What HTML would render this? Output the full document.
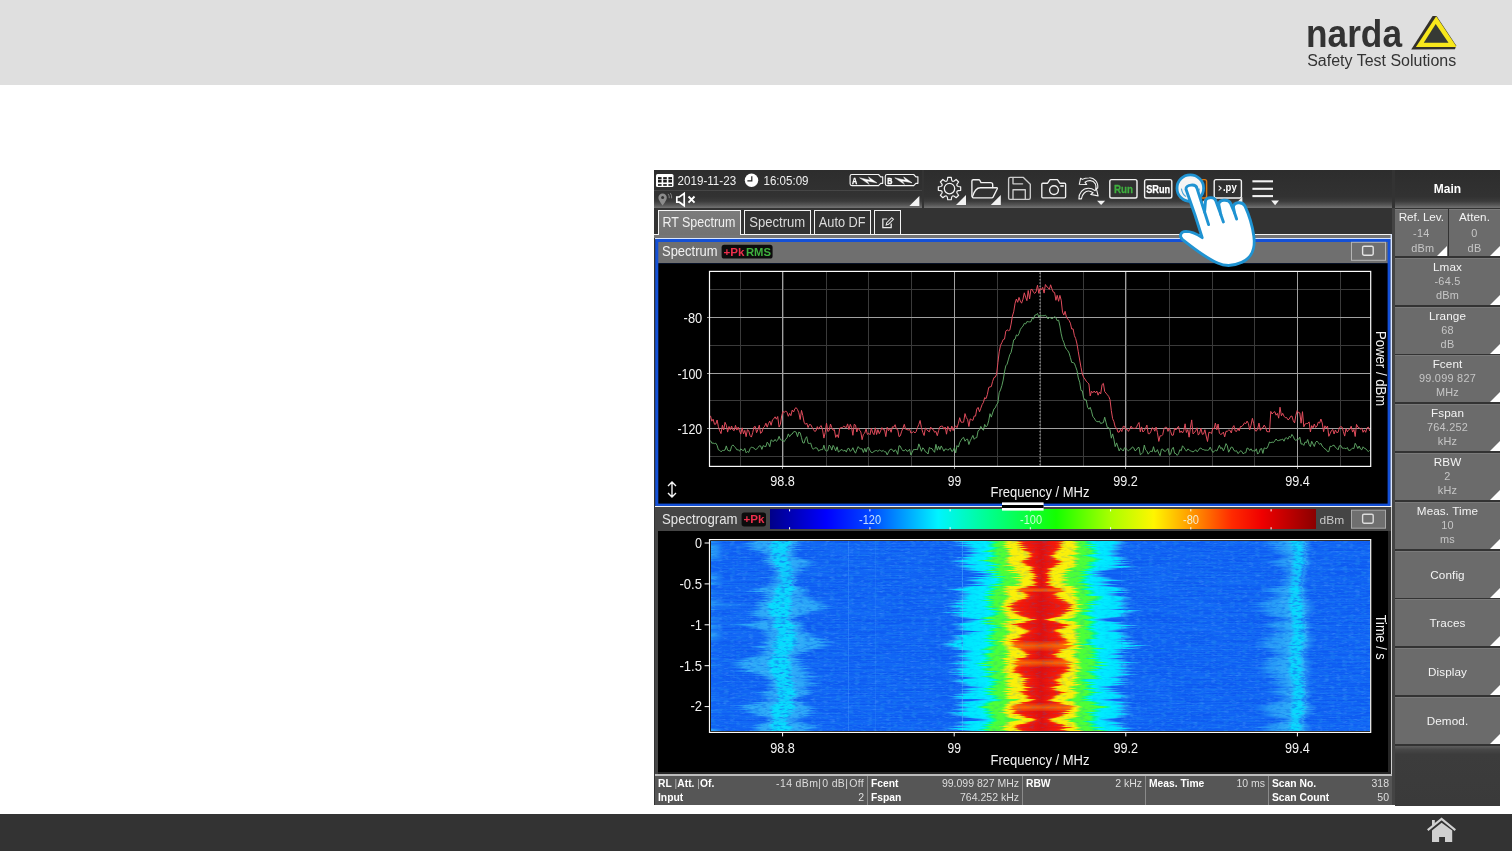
<!DOCTYPE html><html><head><meta charset="utf-8"><title>narda</title><style>
*{margin:0;padding:0;box-sizing:border-box}
html,body{width:1512px;height:851px;overflow:hidden;background:#fff}
body{position:relative;font-family:"Liberation Sans",sans-serif;color:#fff}
.abs{position:absolute}
svg,.t,.sb,.st,.sv{will-change:transform}
#hdr{left:0;top:0;width:1512px;height:85px;background:#dfdfdf}
#ftr{left:0;top:814px;width:1512px;height:37px;background:#333}
#scr{left:654.2px;top:170px;width:846.3px;height:635px;background:#333}
/* all children of #scr are positioned in page coords through this wrapper */
#w{left:-654.2px;top:-170px;width:1512px;height:851px}
.t{position:absolute;white-space:nowrap;line-height:1}
.tb{background:linear-gradient(#2d2d2d 0,#323232 70%,#3b3b3b 82%,#565656 92%,#747474 100%)}
.tab{position:absolute;top:210px;height:25px;border:1px solid #f4f4f4;border-bottom:none;font-size:14px;line-height:23px;color:#dcdcdc;text-align:center;letter-spacing:-0.3px}
.sb{position:absolute;left:1395px;width:105px;height:47px;background:#6b6b6b;border-top:1px solid #7a7a7a}
.sb .l{position:absolute;left:0;width:100%;text-align:center;font-size:11.7px;color:#f4f4f4;line-height:1;letter-spacing:0.1px}
.sb .v{position:absolute;left:0;width:100%;text-align:center;font-size:10.9px;color:#c6c6c6;line-height:1;letter-spacing:0.25px}
.tri{position:absolute;width:0;height:0;border-style:solid;border-color:transparent transparent #fff transparent}
.st{position:absolute;font-size:10.3px;line-height:1;white-space:nowrap}
.st b{color:#fff}
.sv{position:absolute;font-size:10.5px;line-height:1;white-space:nowrap;color:#ddd;text-align:right}
</style></head><body>
<div id="hdr" class="abs"></div>
<svg class="abs" style="left:1300px;top:10px" width="165" height="66" viewBox="1300 10 165 66" font-family="Liberation Sans, sans-serif"><text x="1306" y="46.7" font-size="38.8" font-weight="bold" fill="#333" textLength="96" lengthAdjust="spacingAndGlyphs">narda</text><path d="M1411.2 49.4L1432.6 15.9L1436.6 16L1456.2 45.6L1455 49.3Z" fill="#33302a"/><path d="M1415.9 47.1L1436.2 16.2L1456.4 46.4L1455.6 47.1Z" fill="#f7e71c"/><path d="M1423.8 42.8L1435.7 23.9L1448.5 42.8Z" fill="#363a35"/><text x="1307.2" y="66" font-size="15.6" fill="#333" textLength="149" lengthAdjust="spacingAndGlyphs">Safety Test Solutions</text></svg>
<div id="ftr" class="abs"></div>
<svg class="abs" style="left:1424px;top:815px" width="36" height="32" viewBox="1424 815 36 32"><path d="M1427.7 830.1L1441.6 818.9L1455.3 830.1" fill="none" stroke="#d2d2d2" stroke-width="2.1"/><path d="M1432 830.4L1441.6 822.7L1452.2 830.4V842H1445V837H1439.1V842H1432Z" fill="#d0d0d0"/><rect x="1432" y="820" width="2.8" height="5" fill="#d0d0d0"/></svg>
<div id="scr" class="abs"><div id="w" class="abs">
<div class="abs tb" style="left:654.2px;top:170px;width:267.6px;height:38px"></div>
<div class="abs" style="left:654px;top:190px;width:268px;height:1px;background:rgba(255,255,255,.10)"></div>
<div class="abs tb" style="left:924px;top:170px;width:468px;height:38px"></div>
<div class="abs tb" style="left:1395px;top:170px;width:105px;height:38px"></div>
<div class="t" style="left:1395px;width:105px;text-align:center;top:183px;font-size:12px;font-weight:bold;color:#fff">Main</div>
<div class="abs" style="left:1392.3px;top:208px;width:3px;height:597px;background:#444"></div>
<svg class="abs" style="left:654px;top:170px" width="738" height="38" viewBox="654 170 738 38" font-family="Liberation Sans, sans-serif" fill="none" stroke="#f2f2f2" stroke-width="1.3" stroke-linejoin="round" stroke-linecap="round"><rect x="656" y="174" width="17.5" height="12.9" rx="1.5" fill="#fff" stroke="none"/><rect x="658.0" y="177.1" width="3.6" height="2.0" fill="#1c1c1c" stroke="none"/><rect x="663.2" y="177.1" width="3.6" height="2.0" fill="#1c1c1c" stroke="none"/><rect x="668.4" y="177.1" width="3.6" height="2.0" fill="#1c1c1c" stroke="none"/><rect x="658.0" y="179.7" width="3.6" height="2.8" fill="#1c1c1c" stroke="none"/><rect x="663.2" y="179.7" width="3.6" height="2.8" fill="#1c1c1c" stroke="none"/><rect x="668.4" y="179.7" width="3.6" height="2.8" fill="#1c1c1c" stroke="none"/><rect x="658.0" y="184.1" width="3.6" height="1.7" fill="#1c1c1c" stroke="none"/><rect x="663.2" y="184.1" width="3.6" height="1.7" fill="#1c1c1c" stroke="none"/><rect x="668.4" y="184.1" width="3.6" height="1.7" fill="#1c1c1c" stroke="none"/><text x="677.6" y="185" font-size="12.3" fill="#f0f0f0" stroke="none" textLength="58.5" lengthAdjust="spacingAndGlyphs">2019-11-23</text><circle cx="751.5" cy="180.3" r="6.7" fill="#fff" stroke="none"/><path d="M751.8 176.3V180.9H747.4" stroke="#222" stroke-width="1.2" fill="none" stroke-linecap="butt" stroke-linejoin="miter"/><text x="763.5" y="185" font-size="12.3" fill="#f0f0f0" stroke="none" textLength="45" lengthAdjust="spacingAndGlyphs">16:05:09</text><path d="M662.6 205.6C659.8 201.6 658.4 199.6 658.4 197.8A4.2 4.2 0 0 1 666.8 197.8C666.8 199.6 665.4 201.6 662.6 205.6Z" fill="#8c8c8c" stroke="none"/><circle cx="662.6" cy="197.6" r="1.5" fill="#333" stroke="none"/><path d="M668.3 194.2q1.3 1.6 1 3.6M670.6 193.4q1.5 2 1.1 4.6" stroke="#8c8c8c" stroke-width="0.9"/><path d="M676.8 197H679.4L684.2 193.4V205.8L679.4 202.2H676.8Z" stroke="#fff" stroke-width="1.7" stroke-linejoin="miter" fill="none"/><path d="M688.5 196.5L694.5 202.7M694.5 196.5L688.5 202.7" stroke="#fff" stroke-width="1.9" stroke-linecap="butt"/><path d="M851.9 174.5H878.5L880.7 176.8H882.7V183.29999999999998H880.7L878.5 185.6H851.9Q850.1 185.6 850.1 183.79999999999998V176.3Q850.1 174.5 851.9 174.5Z" fill="none" stroke="#f4f4f4" stroke-width="1.15"/><text x="852.0" y="183.79999999999998" font-size="9.4" font-weight="bold" fill="#fff" stroke="#fff" stroke-width="0.35" textLength="5.2" lengthAdjust="spacingAndGlyphs">A</text><path d="M860.0 177.9L870.3 180.3L868.5 176.9L876.8 182.8L867.1 180.9L869.0 184.0Z" fill="#fff" stroke="#fff" stroke-width="0.5" stroke-linejoin="miter"/><path d="M887.0999999999999 174.5H913.6999999999999L915.9 176.8H917.9V183.29999999999998H915.9L913.6999999999999 185.6H887.0999999999999Q885.3 185.6 885.3 183.79999999999998V176.3Q885.3 174.5 887.0999999999999 174.5Z" fill="none" stroke="#f4f4f4" stroke-width="1.15"/><text x="887.1999999999999" y="183.79999999999998" font-size="9.4" font-weight="bold" fill="#fff" stroke="#fff" stroke-width="0.35" textLength="5.2" lengthAdjust="spacingAndGlyphs">B</text><path d="M895.2 177.9L905.5 180.3L903.7 176.9L912.0 182.8L902.3 180.9L904.2 184.0Z" fill="#fff" stroke="#fff" stroke-width="0.5" stroke-linejoin="miter"/><path d="M919.4 206L919.4 196L909.4 206Z" fill="#f2f2f2" stroke="none"/><path d="M947.40 179.85L947.73 177.44L951.27 177.44L951.60 179.85Q952.22 182.04 954.20 180.93L956.14 179.46L958.64 181.96L957.17 183.90Q956.06 185.88 958.25 186.50L960.66 186.83L960.66 190.37L958.25 190.70Q956.06 191.32 957.17 193.30L958.64 195.24L956.14 197.74L954.20 196.27Q952.22 195.16 951.60 197.35L951.27 199.76L947.73 199.76L947.40 197.35Q946.78 195.16 944.80 196.27L942.86 197.74L940.36 195.24L941.83 193.30Q942.94 191.32 940.75 190.70L938.34 190.37L938.34 186.83L940.75 186.50Q942.94 185.88 941.83 183.90L940.36 181.96L942.86 179.46L944.80 180.93Q946.78 182.04 947.40 179.85Z" stroke-width="1.2" stroke-linejoin="round"/><circle cx="949.5" cy="188.6" r="5.2" stroke-width="1.25"/><path d="M966 205L966 195L956 205Z" fill="#f2f2f2" stroke="none"/><path d="M971.9 196.2V181.1Q971.9 179.7 973.3 179.7H978.7Q979.5 179.7 979.9 180.5L981 182.6H990.6Q992.7 182.6 992.7 184.7V187.6" stroke-width="1.35"/><path d="M972.4 196.9C973.6 192.6 975.6 187.7 980.4 187.7H996.6Q997.7 187.7 997.3 188.7L993.2 196.9Q992.7 197.8 991.7 197.8H973.3Q972.2 197.8 972.4 196.9Z" stroke-width="1.35"/><path d="M1000.8 205L1000.8 195L990.8 205Z" fill="#f2f2f2" stroke="none"/><g stroke="#cdcdcd" stroke-width="1.35"><path d="M1010.1 177.4H1023.4L1030.3 184.3V197.8Q1030.3 199.4 1028.7 199.4H1010.1Q1008.6 199.4 1008.6 197.8V178.9Q1008.6 177.4 1010.1 177.4Z"/><path d="M1013 177.6V183.8H1022.6"/><path d="M1013 199.2V189.7H1025.3V199.2"/></g><path d="M1042.8 183.2H1047.6L1050 179.6H1057.4L1059.8 183.2H1064.6Q1065.6 183.2 1065.6 184.2V196.8Q1065.6 197.8 1064.6 197.8H1042.8Q1041.8 197.8 1041.8 196.8V184.2Q1041.8 183.2 1042.8 183.2Z" stroke-width="1.35"/><circle cx="1054" cy="190.1" r="4.4" stroke-width="1.4"/><rect x="1060.3" y="185.2" width="3.5" height="1.6" fill="#f2f2f2" stroke="none"/><path d="M1080.6 178.3L1079.3 184.3L1086.7 184.5L1085 182.2C1088 180 1093 179.8 1095.2 183.6C1096 185.2 1096 187 1095.8 188.5L1097.7 188.1C1098.6 182 1094 177.6 1089.4 177.8C1086.4 177.8 1084 178.4 1082.3 179.4Z" stroke-width="1.1"/><path d="M1078.9 198.9C1078.9 193 1082.6 188.4 1088.4 188.3C1091 188.3 1093.4 189.4 1095 190.6L1096.4 188.7L1098.1 195.9L1090.7 194.4L1093.1 192.7C1090 190.6 1086.4 190.8 1084.2 193C1082.4 194.8 1081.6 197 1081.4 198.9Z" stroke-width="1.1"/><path d="M1097.1 200.8L1105.1 200.8L1101.1 204.9Z" fill="#f2f2f2" stroke="none"/><rect x="1109.8" y="179.6" width="27.2" height="18.4" rx="1.8" stroke-width="1.4"/><text x="1123.4" y="192.6" font-size="11.6" font-weight="bold" fill="#3fae3f" stroke="#3fae3f" stroke-width="0.3" text-anchor="middle" textLength="19" lengthAdjust="spacingAndGlyphs">Run</text><rect x="1144.6" y="179.6" width="27.2" height="18.4" rx="1.8" stroke-width="1.4"/><text x="1158.2" y="192.6" font-size="11.4" font-weight="bold" fill="#fff" stroke="#fff" stroke-width="0.25" text-anchor="middle" textLength="24" lengthAdjust="spacingAndGlyphs">SRun</text><rect x="1179.4" y="179.6" width="27.2" height="18.4" rx="1.8" stroke="#e07a10" stroke-width="1.4"/><path d="M1207.4 205L1207.4 197L1199.4 205Z" fill="#f2f2f2" stroke="none"/><rect x="1214.2" y="179.6" width="27.2" height="18.4" rx="1.8" stroke-width="1.4"/><path d="M1219 186.2L1221.2 188.2L1219 190.2" stroke-width="1.1"/><text x="1229.8" y="191.4" font-size="10.6" font-weight="bold" fill="#fff" stroke="none" text-anchor="middle" textLength="13.8" lengthAdjust="spacingAndGlyphs">.py</text><path d="M1242.4 205L1242.4 197L1234.4 205Z" fill="#f2f2f2" stroke="none"/><path d="M1252.4 181.3H1273" stroke-width="2.1" stroke-linecap="butt"/><path d="M1252.4 188.8H1273" stroke-width="2.1" stroke-linecap="butt"/><path d="M1252.4 196.1H1273" stroke-width="2.1" stroke-linecap="butt"/><path d="M1271.2 200.6L1279 200.6L1275.1 205.2Z" fill="#f2f2f2" stroke="none"/></svg>
<div class="abs" style="left:654px;top:234px;width:738px;height:1px;background:#f4f4f4"></div>
<div class="abs" style="left:654px;top:235px;width:738px;height:3px;background:#757575"></div>
<div class="tab" style="left:658px;width:83px;background:linear-gradient(#7c7c7c,#727272);height:25px"></div>
<div class="tab" style="left:744px;width:67px;height:24px"></div>
<div class="tab" style="left:814px;width:57px;height:24px"></div>
<div class="tab" style="left:874px;width:27px;height:24px"></div>
<svg class="abs" style="left:654px;top:208px" width="260" height="28" viewBox="654 208 260 28" font-family="Liberation Sans, sans-serif" font-size="14.8"><text x="662.4" y="227.3" fill="#f0f0f0" textLength="73" lengthAdjust="spacingAndGlyphs">RT Spectrum</text><text x="749.2" y="227.3" fill="#dcdcdc" textLength="56" lengthAdjust="spacingAndGlyphs">Spectrum</text><text x="818.8" y="227.3" fill="#dcdcdc" textLength="46.8" lengthAdjust="spacingAndGlyphs">Auto DF</text></svg>
<svg class="abs" style="left:880px;top:215px" width="16" height="16" viewBox="0 0 18 18" fill="none" stroke="#e8e8e8" stroke-width="1.4"><path d="M8 4.5H3.2V14.3H12.6V9.5"/><path d="M7 11.2l.6-2.6 5.6-5.6 1.9 1.9-5.6 5.6z" stroke-width="1.2"/></svg>
<svg class="abs" style="left:654px;top:238px" width="738" height="270" viewBox="654 238 738 270" overflow="visible" font-family="Liberation Sans, sans-serif"><rect x="655" y="238" width="737" height="1.2" fill="#d8e6ff"/><rect x="655.3" y="239" width="735.3" height="267" fill="#1450d6"/><rect x="1390.6" y="234" width="1.4" height="273" fill="#dbe7ff"/><rect x="658.3" y="242" width="729.3" height="21.2" fill="#6f6f6f"/><rect x="658.3" y="263.2" width="729.3" height="240.4" fill="#000"/><rect x="655" y="506" width="737" height="1.3" fill="#f4f4f4"/><text x="662" y="256.4" font-size="14.6" fill="#f2f2f2" textLength="55.5" lengthAdjust="spacingAndGlyphs">Spectrum</text><rect x="721.6" y="244.8" width="51" height="13.8" rx="2.6" fill="#0c0c0c"/><text x="723.4" y="255.6" font-size="10.6" font-weight="bold" fill="#ee2f4c" textLength="21" lengthAdjust="spacingAndGlyphs">+Pk</text><text x="746" y="255.6" font-size="10.6" font-weight="bold" fill="#3fb23f" textLength="25" lengthAdjust="spacingAndGlyphs">RMS</text><rect x="1351.5" y="242.3" width="34" height="18" fill="#6f6f6f" stroke="#b4b4b4" stroke-width="1"/><rect x="1362.6" y="246.2" width="10.6" height="9" rx="1.4" fill="none" stroke="#e4e4e4" stroke-width="1.4"/><path d="M740.5 271.4V466.4" stroke="#3a3a3a" stroke-width="1"/><path d="M783.5 271.4V466.4" stroke="#3a3a3a" stroke-width="1"/><path d="M826.5 271.4V466.4" stroke="#3a3a3a" stroke-width="1"/><path d="M868.5 271.4V466.4" stroke="#3a3a3a" stroke-width="1"/><path d="M911.5 271.4V466.4" stroke="#3a3a3a" stroke-width="1"/><path d="M997.5 271.4V466.4" stroke="#3a3a3a" stroke-width="1"/><path d="M1040.5 271.4V466.4" stroke="#3a3a3a" stroke-width="1"/><path d="M1083.5 271.4V466.4" stroke="#3a3a3a" stroke-width="1"/><path d="M1126.5 271.4V466.4" stroke="#3a3a3a" stroke-width="1"/><path d="M1169.5 271.4V466.4" stroke="#3a3a3a" stroke-width="1"/><path d="M1212.5 271.4V466.4" stroke="#3a3a3a" stroke-width="1"/><path d="M1254.5 271.4V466.4" stroke="#3a3a3a" stroke-width="1"/><path d="M1340.5 271.4V466.4" stroke="#3a3a3a" stroke-width="1"/><path d="M709.5 289.5H1370.7" stroke="#3a3a3a" stroke-width="1"/><path d="M709.5 345.5H1370.7" stroke="#3a3a3a" stroke-width="1"/><path d="M709.5 400.5H1370.7" stroke="#3a3a3a" stroke-width="1"/><path d="M709.5 456.5H1370.7" stroke="#3a3a3a" stroke-width="1"/><path d="M782.5 271.4V468.9" stroke="#a0a0a0" stroke-width="1"/><path d="M954.5 271.4V468.9" stroke="#a0a0a0" stroke-width="1"/><path d="M1125.5 271.4V468.9" stroke="#a0a0a0" stroke-width="1"/><path d="M1297.5 271.4V468.9" stroke="#a0a0a0" stroke-width="1"/><path d="M707.0 317.5H1370.7" stroke="#a0a0a0" stroke-width="1"/><path d="M707.0 373.5H1370.7" stroke="#a0a0a0" stroke-width="1"/><path d="M707.0 428.5H1370.7" stroke="#a0a0a0" stroke-width="1"/><path d="M1040 272.4V465.4" stroke="#c4c4c4" stroke-width="0.9" stroke-dasharray="1.5 1.8"/><polyline points="710.5,440.6 711.8,443.2 713.1,443.1 714.5,443.6 715.8,443.2 717.1,445.4 718.4,449.8 719.7,450.3 721.0,451.8 722.4,450.5 723.7,450.5 725.0,450.0 726.3,445.9 727.6,450.2 729.0,450.8 730.3,451.0 731.6,446.3 732.9,444.9 734.2,446.3 735.5,447.7 736.9,449.9 738.2,449.8 739.5,451.1 740.8,448.8 742.1,450.1 743.5,450.6 744.8,448.4 746.1,452.8 747.4,451.5 748.7,452.4 750.1,448.6 751.4,447.1 752.7,447.5 754.0,448.0 755.3,449.7 756.6,449.2 758.0,447.5 759.3,445.8 760.6,445.9 761.9,449.4 763.2,445.6 764.6,446.4 765.9,446.6 767.2,442.2 768.5,443.8 769.8,446.7 771.1,439.8 772.5,441.0 773.8,441.3 775.1,439.4 776.4,441.3 777.7,440.1 779.1,436.3 780.4,439.7 781.7,440.2 783.0,440.7 784.3,441.6 785.6,439.3 787.0,437.8 788.3,433.9 789.6,436.7 790.9,434.6 792.2,434.0 793.6,431.8 794.9,431.5 796.2,432.2 797.5,436.7 798.8,432.1 800.2,432.8 801.5,437.7 802.8,442.7 804.1,443.1 805.4,438.6 806.7,436.7 808.1,443.2 809.4,443.5 810.7,443.1 812.0,447.5 813.3,449.3 814.7,447.9 816.0,447.8 817.3,448.3 818.6,451.1 819.9,450.0 821.2,449.6 822.6,449.6 823.9,445.2 825.2,450.2 826.5,451.1 827.8,450.6 829.2,445.1 830.5,446.5 831.8,450.1 833.1,445.4 834.4,447.6 835.7,450.9 837.1,446.8 838.4,452.0 839.7,451.2 841.0,449.5 842.3,450.0 843.7,450.9 845.0,450.1 846.3,452.1 847.6,448.7 848.9,448.3 850.3,451.4 851.6,450.1 852.9,447.7 854.2,451.0 855.5,453.2 856.8,449.7 858.2,446.6 859.5,448.4 860.8,448.9 862.1,448.8 863.4,452.5 864.8,448.3 866.1,452.1 867.4,447.7 868.7,447.4 870.0,450.5 871.3,452.5 872.7,452.5 874.0,451.4 875.3,450.7 876.6,450.5 877.9,451.4 879.3,450.0 880.6,450.6 881.9,451.4 883.2,450.4 884.5,451.8 885.8,451.8 887.2,454.9 888.5,452.2 889.8,449.7 891.1,449.1 892.4,449.7 893.8,451.9 895.1,449.8 896.4,450.8 897.7,454.3 899.0,445.7 900.3,446.2 901.7,449.4 903.0,450.7 904.3,450.7 905.6,449.3 906.9,451.2 908.3,451.0 909.6,449.2 910.9,455.1 912.2,452.3 913.5,449.5 914.9,449.6 916.2,449.4 917.5,449.7 918.8,443.9 920.1,447.1 921.4,451.3 922.8,447.8 924.1,449.2 925.4,451.8 926.7,452.4 928.0,454.0 929.4,447.5 930.7,448.4 932.0,448.6 933.3,450.7 934.6,452.3 935.9,444.4 937.3,450.2 938.6,446.3 939.9,449.7 941.2,445.9 942.5,448.3 943.9,451.2 945.2,449.0 946.5,449.0 947.8,450.3 949.1,449.1 950.4,448.2 951.8,451.4 953.1,450.9 954.4,447.5 955.7,452.9 957.0,445.6 958.4,447.1 959.7,442.6 961.0,440.3 962.3,438.3 963.6,437.4 965.0,441.2 966.3,439.4 967.6,439.2 968.9,444.5 970.2,440.8 971.5,438.3 972.9,435.4 974.2,439.3 975.5,437.8 976.8,437.6 978.1,430.8 979.5,429.9 980.8,426.4 982.1,428.7 983.4,430.3 984.7,424.4 986.0,426.9 987.4,425.4 988.7,420.8 990.0,413.7 991.3,417.1 992.6,413.0 994.0,408.8 995.3,407.8 996.6,404.5 997.9,403.0 999.2,392.7 1000.5,389.9 1001.9,385.6 1003.2,380.0 1004.5,371.9 1005.8,365.8 1007.1,364.2 1008.5,359.1 1009.8,354.6 1011.1,352.4 1012.4,346.5 1013.7,339.9 1015.1,339.2 1016.4,334.9 1017.7,335.9 1019.0,333.5 1020.3,329.6 1021.6,327.5 1023.0,326.2 1024.3,323.3 1025.6,324.0 1026.9,321.6 1028.2,321.8 1029.6,321.9 1030.9,321.7 1032.2,318.2 1033.5,319.0 1034.8,315.2 1036.1,314.8 1037.5,313.5 1038.8,317.1 1040.1,314.9 1041.4,315.8 1042.7,315.7 1044.1,315.8 1045.4,315.3 1046.7,316.4 1048.0,319.0 1049.3,317.5 1050.6,317.8 1052.0,318.7 1053.3,317.9 1054.6,316.6 1055.9,317.7 1057.2,320.7 1058.6,320.2 1059.9,326.0 1061.2,333.8 1062.5,339.4 1063.8,342.3 1065.1,346.7 1066.5,349.4 1067.8,350.6 1069.1,353.1 1070.4,357.5 1071.7,362.4 1073.1,362.6 1074.4,363.3 1075.7,366.8 1077.0,370.6 1078.3,378.0 1079.7,382.2 1081.0,390.5 1082.3,390.8 1083.6,397.8 1084.9,400.0 1086.2,399.9 1087.6,407.3 1088.9,409.2 1090.2,407.3 1091.5,411.2 1092.8,416.6 1094.2,417.9 1095.5,420.6 1096.8,421.5 1098.1,421.8 1099.4,421.2 1100.7,423.5 1102.1,423.0 1103.4,422.6 1104.7,417.2 1106.0,422.4 1107.3,427.5 1108.7,427.5 1110.0,429.8 1111.3,438.2 1112.6,433.9 1113.9,439.2 1115.2,446.6 1116.6,442.9 1117.9,446.9 1119.2,450.9 1120.5,448.2 1121.8,449.4 1123.2,451.0 1124.5,447.8 1125.8,448.4 1127.1,449.5 1128.4,450.9 1129.8,449.5 1131.1,448.8 1132.4,446.9 1133.7,447.8 1135.0,450.8 1136.3,450.1 1137.7,447.8 1139.0,447.3 1140.3,454.8 1141.6,453.8 1142.9,452.5 1144.3,445.1 1145.6,449.9 1146.9,451.1 1148.2,454.2 1149.5,452.4 1150.8,450.9 1152.2,451.8 1153.5,446.7 1154.8,451.8 1156.1,451.8 1157.4,449.6 1158.8,453.4 1160.1,455.7 1161.4,449.3 1162.7,449.0 1164.0,451.0 1165.3,451.3 1166.7,450.1 1168.0,448.4 1169.3,454.7 1170.6,454.2 1171.9,449.1 1173.3,447.3 1174.6,453.3 1175.9,453.6 1177.2,455.4 1178.5,453.8 1179.9,449.6 1181.2,450.8 1182.5,445.8 1183.8,447.4 1185.1,449.3 1186.4,451.2 1187.8,449.0 1189.1,449.6 1190.4,451.0 1191.7,451.3 1193.0,451.9 1194.4,451.1 1195.7,449.7 1197.0,451.7 1198.3,450.6 1199.6,448.4 1200.9,448.1 1202.3,449.4 1203.6,449.6 1204.9,450.2 1206.2,450.1 1207.5,450.4 1208.9,449.8 1210.2,447.2 1211.5,450.1 1212.8,452.3 1214.1,451.6 1215.4,450.1 1216.8,451.0 1218.1,448.2 1219.4,445.3 1220.7,448.7 1222.0,447.6 1223.4,450.9 1224.7,447.9 1226.0,443.6 1227.3,445.8 1228.6,452.2 1229.9,449.8 1231.3,447.0 1232.6,447.4 1233.9,450.4 1235.2,451.2 1236.5,450.7 1237.9,453.5 1239.2,452.6 1240.5,450.7 1241.8,451.4 1243.1,453.8 1244.5,452.9 1245.8,452.7 1247.1,448.0 1248.4,448.5 1249.7,450.5 1251.0,448.8 1252.4,451.1 1253.7,450.7 1255.0,451.2 1256.3,448.8 1257.6,454.1 1259.0,452.7 1260.3,449.0 1261.6,448.5 1262.9,453.4 1264.2,447.9 1265.5,448.4 1266.9,448.4 1268.2,445.8 1269.5,442.0 1270.8,442.7 1272.1,442.1 1273.5,442.5 1274.8,440.8 1276.1,439.0 1277.4,440.6 1278.7,440.6 1280.0,440.0 1281.4,439.7 1282.7,439.1 1284.0,441.2 1285.3,438.1 1286.6,437.9 1288.0,439.2 1289.3,436.3 1290.6,437.6 1291.9,434.4 1293.2,436.3 1294.6,439.6 1295.9,440.4 1297.2,439.4 1298.5,439.3 1299.8,437.2 1301.1,444.1 1302.5,443.8 1303.8,445.4 1305.1,442.0 1306.4,442.7 1307.7,439.5 1309.1,444.5 1310.4,446.6 1311.7,441.3 1313.0,444.0 1314.3,446.5 1315.6,442.3 1317.0,441.1 1318.3,442.7 1319.6,444.4 1320.9,443.3 1322.2,446.1 1323.6,447.6 1324.9,448.9 1326.2,449.6 1327.5,451.6 1328.8,451.6 1330.1,446.3 1331.5,446.5 1332.8,445.5 1334.1,445.2 1335.4,447.4 1336.7,448.3 1338.1,449.8 1339.4,445.8 1340.7,445.4 1342.0,447.9 1343.3,448.3 1344.7,448.2 1346.0,448.8 1347.3,447.5 1348.6,450.3 1349.9,450.4 1351.2,449.5 1352.6,448.0 1353.9,448.6 1355.2,443.3 1356.5,445.5 1357.8,448.5 1359.2,446.0 1360.5,449.0 1361.8,449.8 1363.1,446.8 1364.4,448.3 1365.7,448.7 1367.1,450.5 1368.4,451.5 1369.7,450.3" fill="none" stroke="#60a866" stroke-width="0.95"/><polyline points="710.5,415.8 711.8,421.2 713.1,419.2 714.5,424.3 715.8,424.1 717.1,420.0 718.4,426.7 719.7,430.8 721.0,433.6 722.4,425.2 723.7,430.0 725.0,422.3 726.3,425.2 727.6,432.1 729.0,426.5 730.3,429.7 731.6,426.0 732.9,429.9 734.2,430.6 735.5,425.3 736.9,430.1 738.2,427.2 739.5,430.8 740.8,434.1 742.1,427.8 743.5,433.9 744.8,430.3 746.1,436.7 747.4,429.7 748.7,430.7 750.1,435.7 751.4,437.1 752.7,432.7 754.0,426.9 755.3,426.5 756.6,432.7 758.0,429.3 759.3,425.2 760.6,433.4 761.9,432.2 763.2,427.8 764.6,426.4 765.9,423.2 767.2,427.2 768.5,423.4 769.8,421.1 771.1,425.3 772.5,419.8 773.8,418.8 775.1,416.8 776.4,419.2 777.7,416.5 779.1,427.1 780.4,424.3 781.7,415.8 783.0,411.4 784.3,412.5 785.6,410.9 787.0,412.3 788.3,416.3 789.6,413.4 790.9,415.7 792.2,410.1 793.6,412.0 794.9,408.6 796.2,407.7 797.5,409.6 798.8,412.7 800.2,419.5 801.5,410.4 802.8,415.6 804.1,422.2 805.4,424.3 806.7,423.0 808.1,427.6 809.4,424.5 810.7,424.6 812.0,427.2 813.3,429.3 814.7,431.4 816.0,430.8 817.3,426.6 818.6,429.2 819.9,426.7 821.2,425.6 822.6,430.1 823.9,438.1 825.2,432.6 826.5,423.2 827.8,431.5 829.2,430.5 830.5,424.0 831.8,427.7 833.1,430.2 834.4,429.7 835.7,437.4 837.1,434.7 838.4,437.6 839.7,428.2 841.0,427.8 842.3,427.6 843.7,426.2 845.0,427.0 846.3,427.6 847.6,423.9 848.9,429.6 850.3,424.3 851.6,427.5 852.9,435.3 854.2,424.3 855.5,425.1 856.8,432.0 858.2,427.9 859.5,430.1 860.8,431.9 862.1,439.7 863.4,434.4 864.8,433.0 866.1,428.8 867.4,434.4 868.7,433.3 870.0,434.7 871.3,428.1 872.7,432.8 874.0,434.7 875.3,427.8 876.6,434.5 877.9,429.5 879.3,433.7 880.6,430.8 881.9,427.6 883.2,429.8 884.5,429.6 885.8,436.6 887.2,427.3 888.5,430.7 889.8,428.5 891.1,432.3 892.4,426.8 893.8,427.1 895.1,424.7 896.4,429.1 897.7,429.5 899.0,436.6 900.3,435.8 901.7,431.2 903.0,428.0 904.3,424.3 905.6,429.2 906.9,429.5 908.3,430.1 909.6,429.0 910.9,433.0 912.2,432.6 913.5,431.4 914.9,433.0 916.2,431.5 917.5,427.5 918.8,424.5 920.1,420.5 921.4,427.5 922.8,432.4 924.1,435.5 925.4,428.1 926.7,429.3 928.0,431.0 929.4,431.8 930.7,427.1 932.0,428.9 933.3,429.6 934.6,432.3 935.9,431.4 937.3,435.7 938.6,430.7 939.9,426.8 941.2,426.2 942.5,426.2 943.9,429.2 945.2,427.0 946.5,434.2 947.8,426.4 949.1,429.3 950.4,431.4 951.8,426.1 953.1,430.6 954.4,427.1 955.7,425.8 957.0,427.7 958.4,423.4 959.7,417.7 961.0,422.1 962.3,422.3 963.6,422.2 965.0,413.6 966.3,417.6 967.6,419.5 968.9,426.5 970.2,418.9 971.5,419.7 972.9,420.4 974.2,416.0 975.5,416.1 976.8,409.1 978.1,407.4 979.5,411.8 980.8,408.2 982.1,404.6 983.4,402.5 984.7,397.6 986.0,398.7 987.4,394.3 988.7,387.5 990.0,386.9 991.3,386.6 992.6,381.4 994.0,377.5 995.3,377.1 996.6,374.2 997.9,362.7 999.2,351.9 1000.5,345.3 1001.9,342.6 1003.2,339.5 1004.5,339.1 1005.8,331.1 1007.1,329.8 1008.5,330.7 1009.8,330.1 1011.1,324.1 1012.4,316.1 1013.7,311.8 1015.1,303.2 1016.4,299.0 1017.7,302.3 1019.0,297.4 1020.3,301.1 1021.6,303.2 1023.0,299.1 1024.3,292.8 1025.6,297.1 1026.9,300.7 1028.2,290.5 1029.6,298.9 1030.9,289.5 1032.2,289.4 1033.5,292.4 1034.8,293.4 1036.1,291.7 1037.5,285.2 1038.8,293.3 1040.1,288.3 1041.4,289.7 1042.7,287.3 1044.1,293.1 1045.4,284.5 1046.7,286.7 1048.0,287.5 1049.3,289.4 1050.6,284.8 1052.0,289.1 1053.3,292.1 1054.6,292.5 1055.9,300.3 1057.2,295.3 1058.6,301.3 1059.9,295.4 1061.2,300.2 1062.5,312.1 1063.8,315.1 1065.1,311.3 1066.5,317.5 1067.8,319.1 1069.1,320.5 1070.4,323.2 1071.7,329.0 1073.1,328.9 1074.4,335.7 1075.7,338.6 1077.0,344.0 1078.3,351.8 1079.7,360.0 1081.0,367.4 1082.3,373.9 1083.6,377.2 1084.9,379.0 1086.2,381.1 1087.6,382.6 1088.9,383.9 1090.2,395.9 1091.5,391.2 1092.8,392.8 1094.2,391.0 1095.5,392.9 1096.8,391.0 1098.1,395.2 1099.4,392.1 1100.7,393.9 1102.1,384.5 1103.4,383.4 1104.7,391.5 1106.0,393.1 1107.3,394.7 1108.7,396.4 1110.0,399.7 1111.3,410.5 1112.6,418.6 1113.9,421.6 1115.2,427.0 1116.6,428.0 1117.9,432.1 1119.2,432.1 1120.5,429.3 1121.8,431.6 1123.2,426.3 1124.5,426.4 1125.8,429.7 1127.1,429.2 1128.4,431.4 1129.8,429.2 1131.1,426.1 1132.4,428.2 1133.7,428.3 1135.0,428.4 1136.3,427.7 1137.7,424.5 1139.0,422.5 1140.3,431.8 1141.6,426.9 1142.9,432.0 1144.3,430.5 1145.6,428.3 1146.9,425.1 1148.2,433.6 1149.5,433.8 1150.8,431.7 1152.2,427.7 1153.5,428.5 1154.8,431.2 1156.1,427.0 1157.4,432.4 1158.8,441.4 1160.1,435.8 1161.4,436.0 1162.7,434.7 1164.0,428.6 1165.3,427.2 1166.7,427.4 1168.0,431.4 1169.3,428.0 1170.6,431.4 1171.9,435.3 1173.3,435.1 1174.6,428.2 1175.9,430.0 1177.2,427.9 1178.5,426.3 1179.9,432.6 1181.2,430.9 1182.5,433.0 1183.8,430.4 1185.1,423.8 1186.4,432.5 1187.8,429.5 1189.1,437.2 1190.4,427.8 1191.7,419.9 1193.0,433.9 1194.4,432.6 1195.7,430.9 1197.0,427.8 1198.3,435.1 1199.6,433.2 1200.9,428.1 1202.3,434.4 1203.6,433.9 1204.9,429.7 1206.2,436.0 1207.5,441.5 1208.9,432.3 1210.2,432.5 1211.5,433.6 1212.8,428.2 1214.1,428.9 1215.4,423.0 1216.8,429.8 1218.1,424.0 1219.4,433.3 1220.7,434.4 1222.0,433.8 1223.4,432.1 1224.7,436.9 1226.0,431.3 1227.3,431.3 1228.6,430.1 1229.9,430.2 1231.3,433.0 1232.6,427.5 1233.9,425.6 1235.2,431.0 1236.5,431.5 1237.9,428.3 1239.2,430.8 1240.5,426.5 1241.8,426.5 1243.1,425.1 1244.5,422.8 1245.8,423.7 1247.1,421.1 1248.4,423.5 1249.7,429.8 1251.0,425.2 1252.4,418.3 1253.7,423.6 1255.0,430.4 1256.3,431.2 1257.6,429.0 1259.0,423.1 1260.3,430.4 1261.6,428.3 1262.9,427.7 1264.2,425.1 1265.5,427.2 1266.9,431.6 1268.2,431.7 1269.5,431.9 1270.8,411.4 1272.1,414.0 1273.5,412.3 1274.8,411.7 1276.1,415.2 1277.4,413.4 1278.7,418.2 1280.0,407.2 1281.4,415.8 1282.7,413.3 1284.0,416.2 1285.3,417.7 1286.6,417.5 1288.0,419.9 1289.3,419.0 1290.6,416.4 1291.9,416.0 1293.2,420.5 1294.6,422.9 1295.9,415.2 1297.2,410.6 1298.5,412.8 1299.8,412.8 1301.1,423.2 1302.5,411.7 1303.8,426.8 1305.1,424.0 1306.4,423.5 1307.7,423.5 1309.1,421.9 1310.4,432.0 1311.7,425.6 1313.0,427.9 1314.3,424.0 1315.6,427.4 1317.0,426.1 1318.3,422.1 1319.6,423.1 1320.9,419.0 1322.2,422.9 1323.6,431.7 1324.9,425.8 1326.2,428.0 1327.5,426.0 1328.8,436.3 1330.1,433.7 1331.5,430.4 1332.8,429.5 1334.1,434.0 1335.4,430.0 1336.7,432.6 1338.1,432.3 1339.4,427.4 1340.7,426.7 1342.0,427.0 1343.3,431.4 1344.7,436.1 1346.0,428.6 1347.3,431.8 1348.6,429.7 1349.9,429.2 1351.2,426.2 1352.6,432.1 1353.9,429.4 1355.2,436.5 1356.5,424.4 1357.8,427.0 1359.2,427.8 1360.5,429.1 1361.8,428.1 1363.1,432.3 1364.4,429.9 1365.7,432.3 1367.1,427.8 1368.4,427.1 1369.7,430.9" fill="none" stroke="#e04c5c" stroke-width="1"/><rect x="709.5" y="271.4" width="661.2" height="195.0" fill="none" stroke="#fbfbfb" stroke-width="1.2"/><text x="702.2" y="322.9" font-size="14.7" fill="#f2f2f2" text-anchor="end" textLength="18.6" lengthAdjust="spacingAndGlyphs">-80</text><text x="702.2" y="378.9" font-size="14.7" fill="#f2f2f2" text-anchor="end" textLength="24.8" lengthAdjust="spacingAndGlyphs">-100</text><text x="702.2" y="434.0" font-size="14.7" fill="#f2f2f2" text-anchor="end" textLength="24.8" lengthAdjust="spacingAndGlyphs">-120</text><text x="782.5" y="485.6" font-size="14.7" fill="#f2f2f2" text-anchor="middle" textLength="24.6" lengthAdjust="spacingAndGlyphs">98.8</text><text x="954.5" y="485.6" font-size="14.7" fill="#f2f2f2" text-anchor="middle" textLength="13.4" lengthAdjust="spacingAndGlyphs">99</text><text x="1125.5" y="485.6" font-size="14.7" fill="#f2f2f2" text-anchor="middle" textLength="24.6" lengthAdjust="spacingAndGlyphs">99.2</text><text x="1297.5" y="485.6" font-size="14.7" fill="#f2f2f2" text-anchor="middle" textLength="24.6" lengthAdjust="spacingAndGlyphs">99.4</text><text x="1040" y="497" font-size="14.7" fill="#f2f2f2" text-anchor="middle" textLength="99" lengthAdjust="spacingAndGlyphs">Frequency / MHz</text><text transform="translate(1376.4 368.6) rotate(90)" font-size="14.7" fill="#f2f2f2" text-anchor="middle" textLength="75" lengthAdjust="spacingAndGlyphs">Power / dBm</text><path d="M672 482.2V496.8M668 486L672 482L676 486M668 493L672 497L676 493" fill="none" stroke="#f4f4f4" stroke-width="1.4"/></svg>
<div class="abs" style="left:655.3px;top:507.3px;width:735.3px;height:266.7px;background:#454545"></div><div class="abs" style="left:658.3px;top:531px;width:732.3px;height:243px;background:#262626"></div><div class="abs" style="left:658.3px;top:531px;width:729.9px;height:241.4px;background:#000"></div><div class="abs" style="left:1390.6px;top:507px;width:1.4px;height:268px;background:#cfcfcf"></div><div class="abs" style="left:770px;top:509.2px;width:546px;height:20.2px;background:linear-gradient(90deg,#000088 0.0%,#0000c8 5.5%,#0000ff 10.3%,#0046ff 18.3%,#00f4ff 30.8%,#00ff8c 40.3%,#14ff00 52.4%,#a8ff00 62.3%,#fff600 70.3%,#ff9a00 77.1%,#ff2a00 84.6%,#f00000 90.1%,#8a0000 100.0%)"></div><div class="abs" style="left:711.0px;top:541.2px;width:658.6px;height:190.2px;overflow:hidden;background:#1466f0"><div style="height:1.0px;background:linear-gradient(90deg,#1f87f6 0.0%,#1a7cf5 0.8%,#156cf6 2.0%,#0f5ff3 5.5%,#2ca7f8 7.2%,#2eacf8 9.1%,#07dcfd 9.8%,#07dcfd 11.8%,#2eacf8 12.5%,#2ca7f8 13.1%,#146af6 14.3%,#0f60f3 18.3%,#0e5df2 21.3%,#1267f5 24.6%,#0e5bf1 28.4%,#0c57f0 31.8%,#1164f5 36.1%,#1369f6 36.4%,#2296f6 36.9%,#1ab0fc 37.4%,#00e2ff 38.1%,#00eeff 41.7%,#00ff96 42.4%,#4cff38 43.2%,#4cff38 44.2%,#faf00a 45.1%,#faf00a 46.0%,#fcc305 46.4%,#f93f07 46.8%,#f61a0a 47.4%,#de1010 50.1%,#f61a0a 52.6%,#f93f07 53.2%,#fcc305 53.6%,#faf00a 53.9%,#faf00a 54.7%,#4cff38 55.5%,#4cff38 56.5%,#00ff96 57.1%,#00eeff 57.8%,#00e2ff 61.1%,#1ab0fc 61.7%,#2296f6 62.2%,#0d5af1 62.9%,#1062f4 67.3%,#1267f5 70.2%,#1061f4 74.7%,#1165f5 78.4%,#0d58f0 81.1%,#0f5ef2 83.8%,#2595f7 85.6%,#2eacf8 87.5%,#08d8fd 88.2%,#08d8fd 89.3%,#2eacf8 90.0%,#218bf6 90.3%,#1369f6 91.5%,#0d59f0 93.4%,#1267f5 96.2%,#1163f4 99.0%,#0e5df2 100.0%)"></div><div style="height:1.0px;background:linear-gradient(90deg,#2391f7 0.0%,#1d83f6 0.8%,#0d58f0 2.0%,#0e5cf2 5.1%,#2aa2f7 6.8%,#2eacf8 8.7%,#08dafd 9.5%,#08dafd 11.7%,#2eacf8 12.4%,#2aa2f7 12.5%,#146bf6 13.6%,#0d58f0 20.4%,#1266f5 24.7%,#0d58f0 27.3%,#1165f5 30.3%,#1165f5 34.4%,#1266f5 37.6%,#2296f6 38.4%,#1ab0fc 38.9%,#00e2ff 39.5%,#00eeff 42.5%,#00ff96 43.2%,#4cff38 43.8%,#4cff38 44.4%,#faf00a 45.2%,#faf00a 46.6%,#fcc305 46.9%,#f93f07 47.4%,#f61a0a 47.8%,#de1010 49.9%,#f61a0a 52.2%,#f93f07 52.7%,#fcc305 53.2%,#faf00a 53.6%,#faf00a 55.1%,#4cff38 56.0%,#4cff38 56.6%,#00ff96 57.4%,#00eeff 58.1%,#00e2ff 61.4%,#1ab0fc 62.1%,#2296f6 62.6%,#146bf6 63.4%,#1062f4 65.7%,#1061f4 68.7%,#0e5cf1 71.5%,#0d58f0 74.2%,#1369f6 78.7%,#146cf6 83.8%,#2392f7 85.6%,#2eacf8 87.6%,#09d6fd 88.4%,#09d6fd 89.4%,#2da9f8 90.2%,#2088f6 90.3%,#0e5bf1 91.3%,#156cf6 94.5%,#1267f5 96.9%,#0c57f0 100.0%)"></div><div style="height:1.0px;background:linear-gradient(90deg,#1979f5 0.0%,#1772f5 0.8%,#1062f4 2.0%,#1061f3 4.3%,#2ca6f8 6.3%,#2eacf8 8.8%,#07dcfd 9.6%,#07dcfd 11.8%,#2eacf8 12.6%,#2ca6f8 12.7%,#1062f4 13.9%,#146cf6 19.5%,#0f5ff3 22.4%,#0f60f3 26.3%,#1267f5 30.7%,#0e5bf1 35.0%,#146af6 37.0%,#2296f6 37.8%,#1ab0fc 38.2%,#00e2ff 38.9%,#00eeff 42.1%,#00ff96 42.8%,#4cff38 43.5%,#4cff38 44.1%,#faf00a 44.9%,#faf00a 46.1%,#fcc305 46.4%,#f93f07 46.9%,#f61a0a 47.4%,#de1010 49.9%,#f61a0a 52.5%,#f93f07 53.1%,#fcc305 53.5%,#faf00a 53.9%,#faf00a 55.1%,#4cff38 55.9%,#4cff38 56.6%,#00ff96 57.3%,#00eeff 58.0%,#00e2ff 61.3%,#1ab0fc 62.0%,#2296f6 62.4%,#1369f6 63.3%,#0e5df2 64.0%,#1369f6 68.2%,#0f60f3 72.7%,#0f60f3 76.1%,#1267f5 79.4%,#1061f4 83.2%,#2595f7 85.2%,#2eacf8 87.6%,#08d8fd 88.3%,#08d8fd 89.4%,#218bf6 90.2%,#2eacf8 90.2%,#1267f5 91.2%,#1062f4 94.6%,#0d5af1 98.9%,#0d59f0 100.0%)"></div><div style="height:1.0px;background:linear-gradient(90deg,#218cf6 0.0%,#1c80f6 0.8%,#146bf6 2.0%,#1367f5 5.0%,#2aa1f7 6.7%,#2eacf8 8.7%,#08dafd 9.4%,#08dafd 11.5%,#2eacf8 12.2%,#2aa1f7 12.4%,#1368f5 13.5%,#146bf6 19.1%,#146bf6 22.3%,#1267f5 26.4%,#0d5af1 30.2%,#1369f6 34.4%,#156cf6 37.3%,#1368f5 38.2%,#2296f6 39.0%,#1ab0fc 39.4%,#00e2ff 40.0%,#00eeff 41.9%,#00ff96 42.5%,#4cff38 43.1%,#4cff38 44.5%,#faf00a 45.3%,#faf00a 46.6%,#fcc305 47.0%,#f93f07 47.4%,#f61a0a 47.8%,#de1010 49.9%,#f61a0a 52.2%,#f93f07 52.7%,#fcc305 53.1%,#faf00a 53.5%,#faf00a 55.0%,#4cff38 55.9%,#4cff38 57.4%,#00ff96 58.1%,#00eeff 58.9%,#00e2ff 60.9%,#1ab0fc 61.6%,#2296f6 62.1%,#0e5cf2 63.0%,#0e5df2 64.4%,#1267f5 68.0%,#1063f4 70.5%,#0f5ef2 74.6%,#0f60f3 78.7%,#146bf6 84.5%,#2392f7 86.1%,#2eacf8 87.7%,#0ad5fc 88.4%,#0ad5fc 89.4%,#1f88f6 90.1%,#2da9f8 90.1%,#0d59f0 91.1%,#1267f5 94.3%,#0f60f3 98.7%,#0d5af1 100.0%)"></div><div style="height:1.0px;background:linear-gradient(90deg,#2ba5f8 0.0%,#2391f7 0.8%,#1061f3 2.0%,#146bf6 5.4%,#2ba4f8 7.0%,#2eacf8 8.8%,#07dcfd 9.6%,#07dcfd 11.6%,#2eacf8 12.3%,#2ba4f8 12.9%,#1163f4 14.2%,#0f60f3 17.3%,#1163f4 21.0%,#0f60f3 25.1%,#1265f5 28.0%,#1163f4 31.2%,#0e5cf2 35.2%,#0e5cf2 36.6%,#2296f6 37.4%,#1ab0fc 37.9%,#00e2ff 38.6%,#00eeff 41.8%,#00ff96 42.6%,#4cff38 43.3%,#4cff38 43.9%,#faf00a 44.7%,#faf00a 46.2%,#fcc305 46.6%,#f93f07 47.1%,#f61a0a 47.6%,#de1010 50.1%,#f61a0a 52.3%,#f93f07 52.8%,#fcc305 53.2%,#faf00a 53.6%,#faf00a 54.9%,#4cff38 55.7%,#4cff38 56.2%,#00ff96 56.9%,#00eeff 57.5%,#00e2ff 60.5%,#1ab0fc 61.1%,#2296f6 61.5%,#1368f5 62.3%,#1369f6 63.6%,#1368f5 67.2%,#0d5af1 71.4%,#1265f5 75.6%,#1164f5 78.7%,#1369f6 83.9%,#2493f7 85.7%,#2eacf8 87.5%,#09d7fd 88.3%,#09d7fd 89.4%,#2eabf8 90.1%,#2089f6 90.3%,#1061f4 91.3%,#1165f5 93.2%,#1266f5 95.8%,#0f5ef2 100.0%,#0f60f3 100.0%)"></div><div style="height:1.0px;background:linear-gradient(90deg,#2ba5f8 0.0%,#2391f7 0.8%,#0e5cf1 2.0%,#146af6 4.5%,#29a0f7 6.3%,#2eacf8 8.6%,#08d9fd 9.3%,#08d9fd 11.2%,#2eacf8 11.9%,#29a0f7 12.1%,#0f5ef2 13.1%,#1266f5 18.8%,#0e5cf2 21.6%,#146af6 24.1%,#1369f6 28.0%,#1267f5 31.3%,#1165f5 35.8%,#156cf6 37.9%,#2296f6 38.7%,#1ab0fc 39.2%,#00e2ff 39.8%,#00eeff 41.8%,#00ff96 42.5%,#4cff38 43.1%,#4cff38 44.3%,#faf00a 45.2%,#faf00a 46.9%,#fcc305 47.3%,#f93f07 47.8%,#f61a0a 48.2%,#de1010 50.3%,#f61a0a 52.3%,#f93f07 52.8%,#fcc305 53.2%,#faf00a 53.6%,#faf00a 55.4%,#4cff38 56.2%,#4cff38 57.5%,#00ff96 58.2%,#00eeff 58.8%,#00e2ff 60.8%,#1ab0fc 61.5%,#2296f6 61.9%,#156cf6 62.8%,#146af6 64.4%,#0d5af1 68.4%,#0e5df2 71.0%,#0e5bf1 73.5%,#0d58f0 77.2%,#0e5bf1 81.1%,#1061f4 85.3%,#2391f7 86.8%,#2eabf8 88.0%,#0ad4fc 88.7%,#0ad4fc 89.6%,#1f87f6 90.2%,#2ca8f8 90.3%,#0d58f0 91.2%,#1369f6 96.1%,#1062f4 100.0%)"></div><div style="height:1.0px;background:linear-gradient(90deg,#2ba5f8 0.0%,#2391f7 0.8%,#1266f5 2.0%,#0f5ff3 5.6%,#2ba4f8 7.1%,#2eacf8 8.5%,#07dcfd 9.2%,#07dcfd 11.3%,#2eacf8 12.1%,#2ba4f8 12.6%,#1368f5 13.8%,#1062f4 19.4%,#0f60f3 22.4%,#0d58f0 26.4%,#0c57f0 30.4%,#0d58f0 34.9%,#1062f4 38.2%,#2296f6 39.0%,#1ab0fc 39.4%,#00e2ff 40.1%,#00eeff 42.6%,#00ff96 43.3%,#4cff38 43.9%,#4cff38 44.2%,#faf00a 45.0%,#faf00a 46.3%,#fcc305 46.7%,#f93f07 47.1%,#f61a0a 47.6%,#de1010 49.9%,#f61a0a 52.4%,#f93f07 53.0%,#fcc305 53.4%,#faf00a 53.8%,#faf00a 55.3%,#4cff38 56.2%,#4cff38 56.5%,#00ff96 57.2%,#00eeff 57.9%,#00e2ff 60.8%,#1ab0fc 61.5%,#2296f6 62.0%,#0f5ff3 62.8%,#146af6 64.5%,#0e5bf1 68.2%,#1061f4 71.6%,#0e5df2 75.1%,#0f5ff3 79.0%,#1164f4 83.9%,#2494f7 85.7%,#2eacf8 87.8%,#09d8fd 88.5%,#09d8fd 89.5%,#2eabf8 90.2%,#208af6 90.4%,#0c57f0 91.5%,#156cf6 93.6%,#1061f3 97.6%,#1368f5 100.0%)"></div><div style="height:1.0px;background:linear-gradient(90deg,#2ba5f8 0.0%,#2391f7 0.8%,#1063f4 2.0%,#1368f5 4.7%,#1368f5 5.6%,#289df7 7.1%,#2eacf8 8.9%,#09d6fd 9.6%,#09d6fd 11.3%,#2eacf8 12.0%,#289df7 12.0%,#0d5af1 13.0%,#1266f5 17.9%,#1265f5 21.7%,#146cf6 25.3%,#1061f4 28.7%,#1061f4 33.0%,#0e5bf1 36.6%,#146af6 39.0%,#2296f6 39.8%,#1ab0fc 40.2%,#00e2ff 40.8%,#00eeff 42.5%,#00ff96 43.1%,#4cff38 43.8%,#4cff38 45.1%,#faf00a 45.9%,#faf00a 47.3%,#fcc305 47.7%,#f93f07 48.1%,#f61a0a 48.4%,#de1010 50.1%,#f61a0a 52.0%,#f93f07 52.4%,#fcc305 52.9%,#faf00a 53.3%,#faf00a 54.8%,#4cff38 55.7%,#4cff38 57.2%,#00ff96 57.9%,#00eeff 58.7%,#00e2ff 60.5%,#1ab0fc 61.2%,#2296f6 61.7%,#0e5cf2 62.6%,#1165f5 62.7%,#0d5af1 65.4%,#0d5af1 68.6%,#156cf6 72.3%,#0d59f0 76.6%,#0f5ef2 79.7%,#0e5cf2 84.3%,#228ef6 86.1%,#2ca8f8 88.0%,#0bd1fc 88.6%,#0bd1fc 89.5%,#1e85f6 90.1%,#2ba4f8 90.2%,#1368f5 91.0%,#0f5ef2 94.6%,#0f60f3 97.9%,#1368f5 100.0%)"></div><div style="height:1.0px;background:linear-gradient(90deg,#2ba5f8 0.0%,#2391f7 0.8%,#0d58f0 2.0%,#0f5ff3 5.0%,#2aa2f7 6.7%,#2eacf8 8.9%,#08dafd 9.6%,#08dafd 11.4%,#2eacf8 12.1%,#2aa2f7 12.9%,#146cf6 14.1%,#1266f5 20.8%,#146bf6 25.0%,#146bf6 29.1%,#1367f5 33.6%,#1266f5 38.2%,#2296f6 39.0%,#1ab0fc 39.5%,#00e2ff 40.1%,#00eeff 42.1%,#00ff96 42.7%,#4cff38 43.4%,#4cff38 44.4%,#faf00a 45.2%,#faf00a 46.6%,#fcc305 47.0%,#f93f07 47.4%,#f61a0a 47.8%,#de1010 49.9%,#f61a0a 52.3%,#f93f07 52.8%,#fcc305 53.2%,#faf00a 53.6%,#faf00a 55.1%,#4cff38 56.0%,#4cff38 57.2%,#00ff96 57.9%,#00eeff 58.7%,#00e2ff 60.8%,#1ab0fc 61.6%,#2296f6 62.0%,#0f60f3 62.8%,#1267f5 62.9%,#0d58f0 66.1%,#1061f3 68.7%,#1164f4 72.5%,#0e5cf1 75.1%,#1061f4 79.4%,#1267f5 84.5%,#2392f7 86.1%,#2eacf8 87.7%,#09d6fd 88.5%,#09d6fd 89.5%,#2da9f8 90.2%,#2088f6 90.3%,#1061f4 91.3%,#0f60f3 95.7%,#0d5af1 98.7%,#146af6 100.0%)"></div><div style="height:1.0px;background:linear-gradient(90deg,#2ba5f8 0.0%,#2391f7 0.8%,#1267f5 2.0%,#0f5ef2 6.1%,#289ef7 7.5%,#2eacf8 8.9%,#09d7fd 9.6%,#09d7fd 11.5%,#2eacf8 12.2%,#289ef7 12.2%,#0e5bf1 13.2%,#0d5af1 16.9%,#146bf6 19.3%,#0f5ff3 23.5%,#0e5df2 27.4%,#1368f5 30.8%,#0d59f0 35.1%,#0d59f0 38.5%,#2296f6 39.3%,#1ab0fc 39.8%,#00e2ff 40.4%,#00eeff 41.4%,#00ff96 42.1%,#4cff38 42.7%,#4cff38 44.8%,#faf00a 45.6%,#faf00a 46.9%,#fcc305 47.3%,#f93f07 47.7%,#f61a0a 48.1%,#de1010 50.0%,#f61a0a 51.9%,#f93f07 52.3%,#fcc305 52.8%,#faf00a 53.2%,#faf00a 54.6%,#4cff38 55.4%,#4cff38 57.7%,#00ff96 58.4%,#00eeff 59.1%,#00e2ff 60.1%,#1ab0fc 60.8%,#2296f6 61.2%,#0f60f3 62.1%,#1165f5 62.4%,#0f5ff3 65.5%,#1266f5 68.9%,#0f5ef2 72.8%,#146bf6 76.2%,#0f5ef2 80.0%,#1265f5 85.2%,#228ff6 86.7%,#2da9f8 88.0%,#0bd2fc 88.7%,#0bd2fc 89.6%,#1f86f6 90.2%,#2ba6f8 90.2%,#1368f5 91.1%,#0c57f0 93.9%,#0e5bf1 98.0%,#0e5cf2 100.0%)"></div><div style="height:1.0px;background:linear-gradient(90deg,#2ba5f8 0.0%,#2391f7 0.8%,#146af6 2.0%,#1165f5 7.2%,#279af7 8.3%,#2da9f8 8.8%,#0ad3fc 9.4%,#0ad3fc 11.1%,#2da9f8 11.7%,#279af7 12.2%,#1165f5 13.3%,#0f5ef2 15.8%,#146af6 19.8%,#1062f4 23.6%,#0e5bf1 26.7%,#0e5cf2 29.4%,#1368f5 33.5%,#146bf6 36.2%,#156cf6 37.7%,#2296f6 38.5%,#1ab0fc 39.0%,#00e2ff 39.7%,#00eeff 40.9%,#00ff96 41.6%,#4cff38 42.3%,#4cff38 44.5%,#faf00a 45.4%,#faf00a 47.4%,#fcc305 47.8%,#f93f07 48.3%,#f61a0a 48.6%,#de1010 50.3%,#f61a0a 51.8%,#f93f07 52.1%,#fcc305 52.5%,#faf00a 52.9%,#faf00a 54.8%,#4cff38 55.6%,#4cff38 57.6%,#00ff96 58.2%,#00eeff 58.9%,#00e2ff 60.0%,#1ab0fc 60.7%,#2296f6 61.1%,#1165f5 61.9%,#1164f4 65.2%,#1164f4 69.6%,#0e5cf1 72.2%,#0d58f0 76.2%,#1061f3 79.3%,#0e5cf2 85.0%,#218cf6 86.5%,#2ba5f8 87.9%,#0ccffc 88.5%,#0ccffc 89.4%,#2aa2f7 90.0%,#1e84f6 90.2%,#1062f4 91.1%,#1368f5 94.5%,#156cf6 97.5%,#1163f4 100.0%)"></div><div style="height:1.0px;background:linear-gradient(90deg,#2ba5f8 0.0%,#2391f7 0.8%,#1265f5 2.0%,#0d59f0 6.6%,#2698f7 7.9%,#2ca7f8 9.0%,#0bd2fc 9.6%,#0bd2fc 11.2%,#2ca7f8 11.8%,#2698f7 12.1%,#0e5cf2 13.2%,#1267f5 19.3%,#1369f6 22.6%,#1267f5 26.7%,#146bf6 31.2%,#0e5cf1 34.5%,#1266f5 39.1%,#2296f6 39.9%,#1ab0fc 40.3%,#00e2ff 41.0%,#00eeff 42.3%,#00ff96 42.9%,#4cff38 43.6%,#4cff38 44.8%,#faf00a 45.6%,#faf00a 47.7%,#fcc305 48.1%,#f93f07 48.5%,#f61a0a 48.8%,#de1010 50.1%,#f61a0a 51.6%,#f93f07 51.9%,#fcc305 52.4%,#faf00a 52.8%,#faf00a 55.1%,#4cff38 56.0%,#4cff38 57.4%,#00ff96 58.1%,#00eeff 58.8%,#00e2ff 60.2%,#1ab0fc 60.9%,#2296f6 61.4%,#0e5cf1 62.3%,#146af6 63.3%,#1165f5 67.0%,#1061f3 70.7%,#1266f5 74.1%,#1367f5 76.6%,#0f5ef2 79.5%,#0f5ff3 84.7%,#208bf6 86.3%,#2aa3f8 87.9%,#0dcdfc 88.6%,#0dcdfc 89.4%,#1d83f6 89.8%,#29a0f7 90.1%,#1061f4 90.6%,#146bf6 93.9%,#1164f5 97.2%,#146bf6 100.0%)"></div><div style="height:1.0px;background:linear-gradient(90deg,#2ba5f8 0.0%,#2391f7 0.8%,#0d58f0 2.0%,#1369f6 7.6%,#2697f7 8.7%,#2ca6f8 8.7%,#0bd1fc 9.4%,#0bd1fc 11.2%,#2ca6f8 11.9%,#2697f7 12.3%,#0e5bf1 13.4%,#1063f4 16.0%,#1265f5 18.6%,#1369f6 23.0%,#156cf6 25.7%,#0f60f3 29.1%,#1164f4 32.2%,#0e5bf1 35.0%,#0d5af0 39.2%,#2296f6 40.0%,#1ab0fc 40.4%,#00e2ff 41.0%,#00eeff 42.2%,#00ff96 42.8%,#4cff38 43.5%,#4cff38 44.9%,#faf00a 45.7%,#faf00a 48.0%,#fcc305 48.4%,#f93f07 48.8%,#f61a0a 49.0%,#de1010 50.3%,#f61a0a 51.7%,#f93f07 52.0%,#fcc305 52.5%,#faf00a 52.9%,#faf00a 55.4%,#4cff38 56.3%,#4cff38 57.9%,#00ff96 58.6%,#00eeff 59.3%,#00e2ff 60.6%,#1ab0fc 61.3%,#2296f6 61.8%,#0e5bf1 62.7%,#1165f5 64.5%,#0c57f0 68.3%,#1368f5 71.7%,#1165f5 74.2%,#1063f4 77.2%,#1165f5 80.2%,#146bf6 85.3%,#208af6 86.8%,#2aa3f7 88.2%,#0dccfc 88.8%,#0dccfc 89.6%,#1d82f6 90.2%,#299ff7 90.3%,#1267f5 91.1%,#1062f4 94.0%,#1266f5 97.4%,#0f60f3 100.0%)"></div><div style="height:1.0px;background:linear-gradient(90deg,#2ba5f8 0.0%,#2391f7 0.8%,#1164f4 2.0%,#0e5df2 4.7%,#0f5ef2 7.7%,#2698f7 8.7%,#2ca7f8 8.8%,#0bd1fc 9.5%,#0bd1fc 11.1%,#2ca7f8 11.8%,#2698f7 12.2%,#1063f4 13.2%,#1063f4 14.4%,#1368f5 18.8%,#0f60f3 22.9%,#0f5ff3 26.0%,#1165f5 29.7%,#0d59f0 33.4%,#0f60f3 36.2%,#1266f5 37.8%,#2296f6 38.7%,#1ab0fc 39.1%,#00e2ff 39.8%,#00eeff 42.0%,#00ff96 42.7%,#4cff38 43.4%,#4cff38 44.6%,#faf00a 45.4%,#faf00a 47.7%,#fcc305 48.1%,#f93f07 48.5%,#f61a0a 48.8%,#de1010 50.2%,#f61a0a 51.6%,#f93f07 51.9%,#fcc305 52.3%,#faf00a 52.7%,#faf00a 54.9%,#4cff38 55.8%,#4cff38 56.9%,#00ff96 57.6%,#00eeff 58.2%,#00e2ff 60.4%,#1ab0fc 61.1%,#2296f6 61.5%,#1164f5 62.3%,#0e5df2 64.9%,#1164f4 68.9%,#1062f4 72.3%,#1163f4 75.2%,#0e5df2 78.5%,#0c57f0 81.1%,#1368f5 85.8%,#208af6 87.1%,#2aa3f8 88.0%,#0dcdfc 88.7%,#0dcdfc 89.6%,#1d82f6 90.2%,#299ff7 90.3%,#1267f5 91.1%,#1165f5 95.0%,#1266f5 98.4%,#1368f5 100.0%)"></div><div style="height:1.0px;background:linear-gradient(90deg,#279bf7 0.0%,#208af6 0.8%,#0f5ff3 2.0%,#0f5ff3 4.4%,#0e5df2 8.2%,#2aa3f8 9.2%,#2494f7 9.2%,#0ccefc 9.8%,#0ccefc 11.5%,#2aa3f8 12.2%,#2494f7 12.3%,#1061f4 13.3%,#0f5ef2 16.0%,#1266f5 18.8%,#146bf6 22.9%,#0f5ef2 25.3%,#1265f5 27.9%,#1063f4 32.0%,#1062f4 35.3%,#0e5bf1 38.1%,#2296f6 38.9%,#1ab0fc 39.4%,#00e2ff 40.1%,#00eeff 42.4%,#00ff96 43.1%,#4cff38 43.8%,#4cff38 45.1%,#faf00a 46.0%,#faf00a 47.8%,#fcc305 48.2%,#f93f07 48.7%,#f61a0a 48.9%,#de1010 50.0%,#f61a0a 51.1%,#f93f07 51.3%,#fcc305 51.7%,#faf00a 52.1%,#faf00a 54.0%,#4cff38 54.8%,#4cff38 56.1%,#00ff96 56.8%,#00eeff 57.5%,#00e2ff 59.8%,#1ab0fc 60.5%,#2296f6 60.9%,#1061f4 61.8%,#1369f6 63.9%,#0f5ff3 66.6%,#0f5ef2 70.5%,#0f5ff3 74.8%,#1062f4 78.0%,#1368f5 80.5%,#0f5ff3 86.2%,#1f88f6 87.4%,#29a0f7 88.2%,#0ecafb 88.8%,#0ecafb 89.5%,#1c80f6 90.0%,#279cf7 90.1%,#0f5ef2 90.8%,#1164f5 96.0%,#156cf6 99.9%,#0e5bf1 100.0%)"></div><div style="height:1.0px;background:linear-gradient(90deg,#2ba3f8 0.0%,#2390f6 0.8%,#1267f5 2.0%,#1062f4 5.1%,#1164f5 8.0%,#2595f7 8.9%,#2ba4f8 8.9%,#0ccffc 9.5%,#0ccffc 11.0%,#2ba4f8 11.6%,#2595f7 12.0%,#0f5ef3 13.0%,#0e5bf1 16.2%,#0e5bf1 19.0%,#0e5cf1 23.5%,#1369f6 27.9%,#0f5ef2 31.7%,#146bf6 34.7%,#1062f4 37.9%,#0e5df2 38.5%,#2296f6 39.3%,#1ab0fc 39.7%,#00e2ff 40.4%,#00eeff 42.5%,#00ff96 43.2%,#4cff38 43.8%,#4cff38 45.1%,#faf00a 45.9%,#faf00a 48.0%,#fcc305 48.4%,#f93f07 48.8%,#f61a0a 49.0%,#de1010 50.1%,#f61a0a 51.3%,#f93f07 51.6%,#fcc305 52.0%,#faf00a 52.4%,#faf00a 54.6%,#4cff38 55.4%,#4cff38 56.8%,#00ff96 57.5%,#00eeff 58.2%,#00e2ff 60.4%,#1ab0fc 61.1%,#2296f6 61.5%,#1267f5 62.4%,#1164f5 63.5%,#1266f5 65.9%,#0e5bf1 68.8%,#1368f5 72.4%,#1265f5 76.6%,#1265f5 79.8%,#1061f4 86.4%,#2088f6 87.5%,#29a0f7 88.1%,#0ecafb 88.7%,#0ecafb 89.4%,#1c81f6 90.0%,#289df7 90.0%,#1061f4 90.9%,#1164f4 96.0%,#0e5cf1 99.8%,#0d5af1 100.0%)"></div><div style="height:1.0px;background:linear-gradient(90deg,#289ef7 0.0%,#218cf6 0.8%,#1266f5 2.0%,#146bf6 5.9%,#1061f4 8.1%,#2697f7 9.0%,#2ca6f8 9.0%,#0bd1fc 9.7%,#0bd1fc 11.2%,#2ca6f8 11.8%,#2697f7 12.8%,#1165f5 14.1%,#1164f5 16.0%,#0e5cf1 18.8%,#1163f4 23.2%,#0e5bf1 27.1%,#156cf6 30.4%,#1163f4 32.9%,#0d5af1 35.4%,#0d59f0 36.7%,#2296f6 37.6%,#1ab0fc 38.0%,#00e2ff 38.7%,#00eeff 41.4%,#00ff96 42.1%,#4cff38 42.8%,#4cff38 44.5%,#faf00a 45.4%,#faf00a 47.7%,#fcc305 48.1%,#f93f07 48.5%,#f61a0a 48.8%,#de1010 50.1%,#f61a0a 51.5%,#f93f07 51.7%,#fcc305 52.2%,#faf00a 52.5%,#faf00a 54.8%,#4cff38 55.7%,#4cff38 57.4%,#00ff96 58.1%,#00eeff 58.8%,#00e2ff 61.5%,#1ab0fc 62.2%,#2296f6 62.6%,#1061f4 63.5%,#1165f5 65.8%,#146af6 69.0%,#0e5bf1 73.5%,#1164f4 77.1%,#0d58f0 79.9%,#0c57f0 86.4%,#208af6 87.5%,#2aa2f7 88.0%,#0dccfc 88.7%,#0dccfc 89.7%,#1d82f6 90.0%,#299ff7 90.4%,#0d59f0 90.9%,#1163f4 94.6%,#0f60f3 98.4%,#0f5ff3 100.0%)"></div><div style="height:1.0px;background:linear-gradient(90deg,#228df6 0.0%,#1c80f6 0.8%,#0f5ef2 2.0%,#0c57f0 7.5%,#279cf7 8.6%,#2dabf8 8.9%,#0ad5fc 9.6%,#0ad5fc 11.5%,#2dabf8 12.2%,#279cf7 12.9%,#0d58f0 14.1%,#1062f4 17.9%,#146af6 21.5%,#0d59f0 25.5%,#156cf6 29.7%,#1266f5 32.3%,#0d58f0 36.2%,#0f60f3 37.8%,#2296f6 38.6%,#1ab0fc 39.0%,#00e2ff 39.7%,#00eeff 41.7%,#00ff96 42.4%,#4cff38 43.0%,#4cff38 44.5%,#faf00a 45.3%,#faf00a 47.3%,#fcc305 47.6%,#f93f07 48.1%,#f61a0a 48.4%,#de1010 50.0%,#f61a0a 51.8%,#f93f07 52.2%,#fcc305 52.6%,#faf00a 53.1%,#faf00a 55.2%,#4cff38 56.1%,#4cff38 57.8%,#00ff96 58.5%,#00eeff 59.2%,#00e2ff 61.5%,#1ab0fc 62.2%,#2296f6 62.7%,#0c57f0 63.6%,#0f5ff3 66.7%,#1061f4 71.1%,#1164f5 74.2%,#1369f6 78.2%,#0f60f3 81.0%,#1164f4 85.6%,#228df6 87.0%,#2ca7f8 88.2%,#0bd0fc 88.8%,#0bd0fc 89.6%,#2aa3f8 90.3%,#1e85f6 90.3%,#0e5bf1 91.2%,#0f5ff3 93.5%,#1164f4 97.1%,#0d5af1 100.0%)"></div><div style="height:1.0px;background:linear-gradient(90deg,#1875f5 0.0%,#1570f5 0.8%,#0f5ef2 2.0%,#1368f5 4.9%,#0f5ef2 8.0%,#279af7 9.0%,#2da8f8 9.3%,#0bd3fc 9.9%,#0bd3fc 11.4%,#2da8f8 12.0%,#279af7 13.8%,#1062f4 15.4%,#1368f5 18.1%,#0e5df2 22.5%,#1265f5 27.0%,#1266f5 31.0%,#0c57f0 35.3%,#146bf6 37.7%,#2296f6 38.5%,#1ab0fc 38.9%,#00e2ff 39.6%,#00eeff 41.5%,#00ff96 42.1%,#4cff38 42.8%,#4cff38 44.7%,#faf00a 45.5%,#faf00a 47.6%,#fcc305 48.0%,#f93f07 48.4%,#f61a0a 48.7%,#de1010 50.2%,#f61a0a 51.7%,#f93f07 52.1%,#fcc305 52.5%,#faf00a 52.9%,#faf00a 55.2%,#4cff38 56.1%,#4cff38 58.2%,#00ff96 58.9%,#00eeff 59.6%,#00e2ff 61.7%,#1ab0fc 62.4%,#2296f6 62.9%,#0c57f0 63.7%,#1063f4 66.0%,#1165f5 70.2%,#0e5cf2 74.4%,#0f5ff3 78.7%,#1163f4 85.6%,#218cf6 87.0%,#2ba5f8 88.1%,#0ccefc 88.7%,#0ccefc 89.6%,#2aa1f7 90.2%,#1e83f6 90.4%,#0f5ef2 91.3%,#0f5ff3 92.7%,#146af6 96.9%,#146af6 100.0%)"></div><div style="height:1.0px;background:linear-gradient(90deg,#228ef6 0.0%,#1d81f6 0.8%,#1061f3 2.0%,#0d58f0 7.1%,#29a1f7 8.3%,#2eacf8 8.8%,#08d9fd 9.5%,#08d9fd 11.4%,#2eacf8 12.0%,#29a1f7 14.0%,#0f5ef2 15.6%,#1266f5 19.1%,#1369f6 22.0%,#0f5ff3 25.9%,#0e5bf1 29.2%,#1266f5 32.6%,#156cf6 36.0%,#1267f5 36.3%,#2296f6 37.2%,#1ab0fc 37.7%,#00e2ff 38.4%,#00eeff 40.3%,#00ff96 41.0%,#4cff38 41.7%,#4cff38 44.4%,#faf00a 45.3%,#faf00a 46.6%,#fcc305 47.1%,#f93f07 47.5%,#f61a0a 48.0%,#de1010 50.2%,#f61a0a 52.2%,#f93f07 52.6%,#fcc305 53.0%,#faf00a 53.4%,#faf00a 54.6%,#4cff38 55.4%,#4cff38 57.8%,#00ff96 58.4%,#00eeff 59.1%,#00e2ff 60.8%,#1ab0fc 61.4%,#2296f6 61.8%,#0e5df2 62.6%,#1267f5 64.3%,#0d5af1 68.7%,#1061f4 72.4%,#0e5df2 75.7%,#0d5af1 80.2%,#1266f5 84.7%,#2391f7 86.3%,#2eacf8 87.9%,#0ad5fc 88.6%,#0ad5fc 89.6%,#2ca8f8 90.3%,#1f88f6 90.4%,#156cf6 91.4%,#1165f5 93.0%,#0d59f0 96.3%,#1368f5 100.0%)"></div><div style="height:1.0px;background:linear-gradient(90deg,#1062f4 0.0%,#1062f4 0.8%,#1164f5 2.0%,#1062f4 7.6%,#2aa3f7 8.8%,#2eacf8 9.3%,#07dbfd 9.9%,#07dbfd 11.7%,#2eacf8 12.4%,#2aa3f7 14.6%,#0f5ff3 16.3%,#0e5bf1 17.8%,#1165f5 21.6%,#146af6 25.7%,#1062f4 28.4%,#146bf6 32.7%,#0e5cf2 35.1%,#0d58f0 35.9%,#2296f6 36.7%,#1ab0fc 37.2%,#00e2ff 37.9%,#00eeff 41.2%,#00ff96 41.9%,#4cff38 42.6%,#4cff38 44.5%,#faf00a 45.4%,#faf00a 46.6%,#fcc305 47.0%,#f93f07 47.5%,#f61a0a 48.0%,#de1010 50.3%,#f61a0a 52.5%,#f93f07 53.0%,#fcc305 53.4%,#faf00a 53.8%,#faf00a 55.0%,#4cff38 55.8%,#4cff38 57.7%,#00ff96 58.3%,#00eeff 59.0%,#00e2ff 62.1%,#1ab0fc 62.7%,#2296f6 63.2%,#0e5df2 64.0%,#0d5af1 67.2%,#1061f4 70.2%,#0e5cf1 73.1%,#1163f4 76.5%,#0d58f0 80.7%,#1062f4 83.7%,#2492f7 85.7%,#2eacf8 88.1%,#09d7fd 88.8%,#09d7fd 89.8%,#2daaf8 90.5%,#2089f6 90.6%,#1061f4 91.7%,#1266f5 95.5%,#0d59f0 98.0%,#1164f4 100.0%)"></div><div style="height:1.0px;background:linear-gradient(90deg,#1062f4 0.0%,#1062f4 0.8%,#0e5df2 2.0%,#1063f4 4.5%,#1266f5 7.7%,#2aa2f7 8.8%,#2eacf8 9.1%,#08dafd 9.8%,#08dafd 11.6%,#2eacf8 12.3%,#2aa2f7 14.3%,#156cf6 16.0%,#0f5ef2 17.8%,#0f60f3 20.9%,#1062f4 25.0%,#1062f4 28.2%,#1266f5 31.9%,#0f5ff3 35.6%,#1061f3 37.4%,#2296f6 38.2%,#1ab0fc 38.7%,#00e2ff 39.3%,#00eeff 42.0%,#00ff96 42.7%,#4cff38 43.4%,#4cff38 44.4%,#faf00a 45.2%,#faf00a 46.6%,#fcc305 47.0%,#f93f07 47.4%,#f61a0a 47.9%,#de1010 50.1%,#f61a0a 52.3%,#f93f07 52.8%,#fcc305 53.2%,#faf00a 53.6%,#faf00a 55.0%,#4cff38 55.8%,#4cff38 56.8%,#00ff96 57.5%,#00eeff 58.2%,#00e2ff 60.8%,#1ab0fc 61.5%,#2296f6 61.9%,#0d5af1 62.8%,#0d59f0 65.3%,#1266f5 68.7%,#1063f4 71.7%,#1265f5 76.2%,#146af6 79.3%,#1267f5 83.8%,#2392f7 85.8%,#2eacf8 88.0%,#09d6fd 88.7%,#09d6fd 89.7%,#2088f6 90.3%,#2da9f8 90.4%,#1266f5 91.2%,#146cf6 96.0%,#0d58f0 99.8%,#1062f4 100.0%)"></div><div style="height:1.0px;background:linear-gradient(90deg,#1062f4 0.0%,#1062f4 0.8%,#1267f5 2.0%,#0f5ef2 4.5%,#1063f4 8.3%,#289df7 9.3%,#2eacf8 9.4%,#09d6fd 10.0%,#09d6fd 11.7%,#2eacf8 12.3%,#289df7 14.1%,#1164f5 15.7%,#0d5af0 20.1%,#1164f4 22.8%,#0f5ef2 26.4%,#0e5cf1 29.2%,#0e5cf1 32.7%,#1369f6 37.3%,#2296f6 38.1%,#1ab0fc 38.5%,#00e2ff 39.2%,#00eeff 42.2%,#00ff96 42.8%,#4cff38 43.5%,#4cff38 44.9%,#faf00a 45.6%,#faf00a 47.0%,#fcc305 47.4%,#f93f07 47.8%,#f61a0a 48.2%,#de1010 49.9%,#f61a0a 51.8%,#f93f07 52.2%,#fcc305 52.7%,#faf00a 53.1%,#faf00a 54.6%,#4cff38 55.5%,#4cff38 57.0%,#00ff96 57.7%,#00eeff 58.5%,#00e2ff 61.8%,#1ab0fc 62.5%,#2296f6 63.0%,#0d58f0 63.8%,#1368f5 64.7%,#0d59f0 67.7%,#1267f5 71.0%,#156cf6 74.7%,#0e5df2 79.1%,#1163f4 85.5%,#228ef6 87.0%,#2ca8f8 88.0%,#0bd2fc 88.7%,#0bd2fc 89.7%,#1e85f6 90.4%,#2ba5f8 90.4%,#1368f5 91.4%,#0d5af1 96.0%,#1265f5 99.6%,#146af6 100.0%)"></div><div style="height:1.0px;background:linear-gradient(90deg,#1062f4 0.0%,#1062f4 0.8%,#0f5ff3 2.0%,#0e5df2 8.0%,#289ef7 9.1%,#2eacf8 9.4%,#09d7fd 10.0%,#09d7fd 11.8%,#2eacf8 12.4%,#289ef7 13.9%,#156cf6 15.3%,#1368f5 16.8%,#1368f5 20.4%,#146af6 24.2%,#0d58f0 27.2%,#1164f5 30.4%,#0d5af1 33.8%,#146cf6 38.8%,#2296f6 39.6%,#1ab0fc 40.0%,#00e2ff 40.7%,#00eeff 43.1%,#00ff96 43.7%,#4cff38 44.3%,#4cff38 45.1%,#faf00a 45.8%,#faf00a 47.2%,#fcc305 47.6%,#f93f07 48.0%,#f61a0a 48.4%,#de1010 50.2%,#f61a0a 52.2%,#f93f07 52.7%,#fcc305 53.1%,#faf00a 53.6%,#faf00a 55.1%,#4cff38 56.0%,#4cff38 56.8%,#00ff96 57.5%,#00eeff 58.2%,#00e2ff 60.9%,#1ab0fc 61.6%,#2296f6 62.1%,#146cf6 63.0%,#1063f4 63.0%,#0e5cf1 67.3%,#1165f5 70.0%,#0e5bf1 74.3%,#0e5cf1 76.9%,#146bf6 81.4%,#0f5ef2 84.6%,#228ff6 86.3%,#2daaf8 87.9%,#0bd3fc 88.6%,#0bd3fc 89.5%,#1f86f6 90.1%,#2ba6f8 90.2%,#156cf6 91.0%,#0e5cf2 95.2%,#0f60f3 98.4%,#0e5df2 100.0%)"></div><div style="height:1.0px;background:linear-gradient(90deg,#1062f4 0.0%,#1062f4 0.8%,#1369f6 2.0%,#1266f5 8.9%,#2daaf8 9.8%,#279bf7 9.8%,#0ad4fc 10.4%,#0ad4fc 11.9%,#2daaf8 12.5%,#279bf7 14.9%,#0e5cf1 16.6%,#1061f4 17.4%,#146bf6 21.5%,#0f5ef2 24.8%,#1165f5 27.2%,#1265f5 30.9%,#0f5ff3 34.8%,#1163f4 36.9%,#2296f6 37.8%,#1ab0fc 38.3%,#00e2ff 39.0%,#00eeff 41.4%,#00ff96 42.2%,#4cff38 42.9%,#4cff38 44.1%,#faf00a 45.0%,#faf00a 47.2%,#fcc305 47.6%,#f93f07 48.1%,#f61a0a 48.4%,#de1010 50.2%,#f61a0a 51.7%,#f93f07 52.0%,#fcc305 52.4%,#faf00a 52.8%,#faf00a 54.8%,#4cff38 55.6%,#4cff38 56.7%,#00ff96 57.4%,#00eeff 58.0%,#00e2ff 60.2%,#1ab0fc 60.9%,#2296f6 61.3%,#0d59f0 62.1%,#0e5cf2 65.0%,#1164f4 68.0%,#0f5ef3 70.9%,#146af6 74.9%,#0d5af1 78.5%,#1062f4 84.7%,#218df6 86.3%,#2ca6f8 88.0%,#0cd0fc 88.6%,#0cd0fc 89.3%,#2aa2f7 89.9%,#1e84f6 90.0%,#0f5ef2 90.9%,#0d58f0 95.4%,#1061f3 99.9%,#1266f5 100.0%)"></div><div style="height:1.0px;background:linear-gradient(90deg,#1062f4 0.0%,#1062f4 0.8%,#1061f3 2.0%,#1063f4 5.0%,#1368f5 8.6%,#2ca6f8 9.3%,#2697f7 9.5%,#0bd1fc 10.0%,#0bd1fc 11.7%,#2ca6f8 12.4%,#2697f7 14.0%,#0e5cf2 15.5%,#1061f3 16.6%,#1368f5 20.1%,#156cf6 24.2%,#1061f4 26.8%,#146cf6 29.9%,#0f5ef3 33.4%,#0e5df2 36.9%,#2296f6 37.7%,#1ab0fc 38.1%,#00e2ff 38.8%,#00eeff 42.5%,#00ff96 43.2%,#4cff38 43.8%,#4cff38 45.4%,#faf00a 46.2%,#faf00a 48.0%,#fcc305 48.4%,#f93f07 48.8%,#f61a0a 49.0%,#de1010 50.3%,#f61a0a 51.7%,#f93f07 52.0%,#fcc305 52.4%,#faf00a 52.9%,#faf00a 54.9%,#4cff38 55.7%,#4cff38 57.4%,#00ff96 58.1%,#00eeff 58.8%,#00e2ff 62.9%,#1ab0fc 63.7%,#2296f6 64.1%,#1165f5 65.0%,#156cf6 66.3%,#1266f5 68.8%,#0f60f3 71.3%,#1062f4 75.3%,#1267f5 78.2%,#1164f5 85.5%,#208af6 86.9%,#2aa2f7 87.8%,#0dccfc 88.5%,#0dccfc 89.4%,#1d82f6 89.9%,#299ff7 90.1%,#146bf6 90.7%,#0f5ff3 93.8%,#0e5df2 97.5%,#0f5ef2 100.0%)"></div><div style="height:1.0px;background:linear-gradient(90deg,#1062f4 0.0%,#1062f4 0.8%,#0f5ff3 2.0%,#1267f5 5.6%,#146af6 8.6%,#2494f7 9.5%,#2aa3f8 9.6%,#0ccefc 10.2%,#0ccefc 11.7%,#2aa3f8 12.4%,#2494f7 13.7%,#1368f5 15.0%,#1165f5 19.0%,#0d59f0 22.3%,#146af6 25.3%,#1267f5 28.2%,#156cf6 31.6%,#0f5ff3 35.1%,#156cf6 37.6%,#2296f6 38.4%,#1ab0fc 38.8%,#00e2ff 39.4%,#00eeff 42.8%,#00ff96 43.5%,#4cff38 44.1%,#4cff38 45.8%,#faf00a 46.6%,#faf00a 48.3%,#fcc305 48.6%,#f93f07 49.1%,#f61a0a 49.3%,#de1010 50.3%,#f61a0a 51.5%,#f93f07 51.7%,#fcc305 52.1%,#faf00a 52.5%,#faf00a 54.4%,#4cff38 55.3%,#4cff38 57.1%,#00ff96 57.8%,#00eeff 58.5%,#00e2ff 62.2%,#1ab0fc 62.9%,#2296f6 63.4%,#1267f5 64.3%,#1369f6 64.5%,#146af6 68.6%,#0d59f0 72.8%,#0d58f0 75.8%,#1266f5 78.3%,#0d59f0 86.5%,#1f88f6 87.6%,#29a0f7 88.1%,#0ecafb 88.7%,#0ecafb 89.5%,#1c80f6 90.1%,#279cf7 90.1%,#146af6 91.0%,#1063f4 94.9%,#0c57f0 98.8%,#0f60f3 100.0%)"></div><div style="height:1.0px;background:linear-gradient(90deg,#1062f4 0.0%,#1062f4 0.8%,#156cf6 2.0%,#146bf6 5.1%,#1061f4 9.2%,#2aa1f7 9.9%,#2492f7 10.1%,#0dccfc 10.5%,#0dccfc 12.0%,#2aa1f7 12.6%,#2492f7 13.0%,#0d5af1 14.0%,#146af6 16.4%,#0e5cf2 19.5%,#0d59f0 23.0%,#0d5af1 26.5%,#0e5cf1 29.5%,#1061f4 32.4%,#0e5cf2 35.0%,#1368f5 38.3%,#2296f6 39.2%,#1ab0fc 39.6%,#00e2ff 40.3%,#00eeff 42.0%,#00ff96 42.7%,#4cff38 43.4%,#4cff38 45.4%,#faf00a 46.3%,#faf00a 48.1%,#fcc305 48.5%,#f93f07 48.9%,#f61a0a 49.0%,#de1010 50.0%,#f61a0a 50.9%,#f93f07 51.0%,#fcc305 51.5%,#faf00a 51.9%,#faf00a 53.8%,#4cff38 54.6%,#4cff38 56.8%,#00ff96 57.5%,#00eeff 58.2%,#00e2ff 60.0%,#1ab0fc 60.7%,#2296f6 61.1%,#0d5af1 62.0%,#0e5bf1 63.3%,#1369f6 67.4%,#1165f5 71.8%,#1367f5 75.4%,#1063f4 78.2%,#1165f5 81.0%,#0e5cf1 86.3%,#1f86f6 87.5%,#289df7 88.1%,#0fc8fb 88.8%,#0fc8fb 89.4%,#1c7ff6 89.8%,#279af7 90.1%,#1266f5 90.5%,#1369f6 96.1%,#1061f4 99.5%,#146bf6 100.0%)"></div><div style="height:1.0px;background:linear-gradient(90deg,#1062f4 0.0%,#1062f4 0.8%,#0d59f0 2.0%,#0f5ef2 5.5%,#0d5af1 9.7%,#29a0f7 10.0%,#2392f7 10.4%,#0dccfb 10.6%,#0dccfb 12.1%,#29a0f7 12.7%,#2392f7 13.3%,#1368f5 14.4%,#1267f5 16.9%,#0e5df2 20.1%,#1266f5 23.2%,#1267f5 26.3%,#1267f5 29.7%,#156cf6 32.9%,#0e5bf1 37.0%,#1367f5 37.8%,#2296f6 38.6%,#1ab0fc 39.1%,#00e2ff 39.8%,#00eeff 42.1%,#00ff96 42.8%,#4cff38 43.5%,#4cff38 45.7%,#faf00a 46.5%,#faf00a 48.2%,#fcc305 48.6%,#f93f07 49.0%,#f61a0a 49.2%,#de1010 50.1%,#f61a0a 50.9%,#f93f07 51.0%,#fcc305 51.5%,#faf00a 51.9%,#faf00a 53.4%,#4cff38 54.2%,#4cff38 56.2%,#00ff96 56.9%,#00eeff 57.6%,#00e2ff 59.8%,#1ab0fc 60.5%,#2296f6 60.9%,#0f60f3 61.7%,#1164f5 63.5%,#156cf6 67.6%,#1062f4 70.8%,#1165f5 74.1%,#0f5ef2 77.8%,#1265f5 85.5%,#1e86f6 86.9%,#289df7 88.1%,#0fc7fb 88.7%,#0fc7fb 89.4%,#1c7ff6 89.7%,#2699f7 90.0%,#156cf6 90.4%,#146bf6 95.8%,#1369f6 99.1%,#1368f5 100.0%)"></div><div style="height:1.0px;background:linear-gradient(90deg,#1062f4 0.0%,#1062f4 0.8%,#1063f4 2.0%,#1369f6 5.0%,#1368f5 8.4%,#2596f7 9.5%,#2ba4f8 9.8%,#0ccffc 10.5%,#0ccffc 12.1%,#2ba4f8 12.7%,#2596f7 13.9%,#1063f4 15.2%,#1062f4 18.7%,#1164f4 21.9%,#146cf6 25.0%,#1061f3 27.9%,#146af6 30.6%,#0d5af1 33.6%,#146bf6 36.0%,#0d5af1 38.4%,#2296f6 39.3%,#1ab0fc 39.8%,#00e2ff 40.5%,#00eeff 41.2%,#00ff96 41.9%,#4cff38 42.6%,#4cff38 44.4%,#faf00a 45.3%,#faf00a 47.6%,#fcc305 48.1%,#f93f07 48.5%,#f61a0a 48.7%,#de1010 50.0%,#f61a0a 51.2%,#f93f07 51.4%,#fcc305 51.8%,#faf00a 52.2%,#faf00a 54.3%,#4cff38 55.1%,#4cff38 56.7%,#00ff96 57.4%,#00eeff 58.0%,#00e2ff 58.6%,#1ab0fc 59.3%,#2296f6 59.7%,#0f5ff3 60.5%,#0d59f0 63.6%,#156cf6 67.3%,#0e5bf1 70.2%,#1266f5 72.9%,#0d59f0 76.3%,#1164f4 80.7%,#1368f5 86.4%,#2089f6 87.5%,#29a1f7 87.8%,#0ecbfb 88.5%,#0ecbfb 89.5%,#1d81f6 89.9%,#289df7 90.2%,#1063f4 90.7%,#1164f5 95.0%,#0d5af1 98.2%,#1063f4 100.0%)"></div><div style="height:1.0px;background:linear-gradient(90deg,#1062f4 0.0%,#1062f4 0.8%,#1267f5 2.0%,#0d58f0 5.5%,#0d58f0 9.1%,#2391f7 10.0%,#29a0f7 10.0%,#0dcbfb 10.6%,#0dcbfb 11.7%,#29a0f7 12.3%,#2391f7 12.8%,#1164f5 13.8%,#1267f5 17.1%,#0e5df2 20.4%,#1368f5 23.8%,#1164f5 27.9%,#1062f4 30.4%,#1165f5 34.5%,#146bf6 37.4%,#1164f5 40.2%,#2296f6 41.0%,#1ab0fc 41.5%,#00e2ff 42.2%,#00eeff 42.8%,#00ff96 43.5%,#4cff38 44.2%,#4cff38 45.8%,#faf00a 46.7%,#faf00a 48.2%,#fcc305 48.6%,#f93f07 49.1%,#f61a0a 49.2%,#de1010 50.1%,#f61a0a 51.0%,#f93f07 51.1%,#fcc305 51.5%,#faf00a 51.9%,#faf00a 53.4%,#4cff38 54.2%,#4cff38 55.7%,#00ff96 56.4%,#00eeff 57.0%,#00e2ff 57.6%,#1ab0fc 58.2%,#2296f6 58.7%,#0d5af1 59.5%,#146cf6 63.8%,#0f5ff3 68.0%,#1267f5 72.5%,#1267f5 75.5%,#0c57f0 80.1%,#0e5cf1 86.2%,#1e86f6 87.3%,#289df7 87.9%,#0fc7fb 88.6%,#0fc7fb 89.3%,#1c7ef6 89.8%,#2699f7 89.9%,#1062f4 90.6%,#0e5cf1 92.3%,#0d5af1 96.7%,#1164f4 100.0%)"></div><div style="height:1.0px;background:linear-gradient(90deg,#1a7af5 0.0%,#1773f5 0.8%,#0f60f3 2.0%,#1265f5 5.4%,#136af6 9.4%,#2aa2f7 10.2%,#2493f7 10.3%,#0dcdfc 10.8%,#0dcdfc 12.0%,#2aa2f7 12.6%,#2493f7 13.0%,#0d59f0 14.0%,#1368f5 15.4%,#0e5cf1 19.8%,#1165f5 23.1%,#0e5df2 27.0%,#0f5ff3 31.5%,#1063f4 35.9%,#0f5ff3 38.7%,#0d59f0 38.9%,#2296f6 39.8%,#1ab0fc 40.3%,#00e2ff 41.0%,#00eeff 41.6%,#00ff96 42.3%,#4cff38 43.1%,#4cff38 45.0%,#faf00a 45.9%,#faf00a 47.8%,#fcc305 48.2%,#f93f07 48.7%,#f61a0a 48.9%,#de1010 49.9%,#f61a0a 50.9%,#f93f07 51.0%,#fcc305 51.5%,#faf00a 51.8%,#faf00a 53.6%,#4cff38 54.4%,#4cff38 56.1%,#00ff96 56.8%,#00eeff 57.4%,#00e2ff 58.0%,#1ab0fc 58.7%,#2296f6 59.1%,#146cf6 59.9%,#1267f5 62.2%,#0f5ef2 64.8%,#1062f4 68.3%,#0f5ef3 72.9%,#146cf6 75.6%,#1267f5 78.4%,#1062f4 86.6%,#1f87f6 87.7%,#289ef7 88.1%,#0ec9fb 88.7%,#0ec9fb 89.4%,#1c7ff6 89.8%,#279bf7 90.0%,#1266f5 90.5%,#0d59f0 95.8%,#0e5df2 98.3%,#146af6 100.0%)"></div><div style="height:1.0px;background:linear-gradient(90deg,#1876f5 0.0%,#1670f5 0.8%,#0e5bf1 2.0%,#1062f4 4.8%,#1062f4 9.1%,#228ff6 10.0%,#289ef7 10.2%,#0ec9fb 10.8%,#0ec9fb 11.9%,#289ef7 12.5%,#228ff6 12.8%,#0f5ef3 13.7%,#156cf6 16.1%,#0d5af1 18.8%,#146bf6 22.0%,#0f5ff3 24.5%,#1369f6 28.5%,#0f5ef2 32.9%,#1163f4 37.2%,#146bf6 40.8%,#2296f6 41.6%,#1ab0fc 42.0%,#00e2ff 42.7%,#00eeff 42.8%,#00ff96 43.5%,#4cff38 44.2%,#4cff38 46.2%,#faf00a 47.0%,#faf00a 48.4%,#fcc305 48.8%,#f93f07 49.2%,#f61a0a 49.3%,#de1010 50.0%,#f61a0a 50.6%,#f93f07 50.7%,#fcc305 51.1%,#faf00a 51.5%,#faf00a 52.9%,#4cff38 53.8%,#4cff38 55.7%,#00ff96 56.4%,#00eeff 57.1%,#00e2ff 57.2%,#1ab0fc 57.9%,#2296f6 58.3%,#1266f5 59.1%,#1368f5 61.3%,#146bf6 65.7%,#1163f4 69.5%,#1163f4 72.8%,#0e5bf1 76.9%,#0e5bf1 79.9%,#1063f4 86.8%,#1e84f6 87.8%,#279af7 87.9%,#10c5fb 88.6%,#10c5fb 89.3%,#1b7df5 89.9%,#2596f7 89.9%,#1164f5 90.7%,#0f5ef2 94.9%,#0d59f0 98.8%,#1266f5 100.0%)"></div><div style="height:1.0px;background:linear-gradient(90deg,#1f87f6 0.0%,#1a7cf5 0.8%,#0d5af1 2.0%,#156cf6 5.6%,#0e5df2 8.8%,#2390f6 9.8%,#299ff7 10.3%,#0ecafb 10.9%,#0ecafb 12.1%,#299ff7 12.7%,#2390f6 12.8%,#146af6 13.7%,#1369f6 16.7%,#1266f5 20.3%,#1062f4 23.0%,#0f60f3 25.9%,#1163f4 28.5%,#1266f5 32.2%,#136af6 34.9%,#1368f5 39.2%,#1061f3 41.1%,#2296f6 41.9%,#1ab0fc 42.4%,#00e2ff 42.7%,#00eeff 42.8%,#00ff96 43.4%,#4cff38 44.1%,#4cff38 46.5%,#faf00a 47.3%,#faf00a 48.6%,#fcc305 49.0%,#f93f07 49.4%,#f61a0a 49.5%,#de1010 50.2%,#f61a0a 51.0%,#f93f07 51.1%,#fcc305 51.6%,#faf00a 52.0%,#faf00a 53.5%,#4cff38 54.3%,#4cff38 56.9%,#00ff96 57.6%,#00eeff 58.4%,#00e2ff 58.5%,#1ab0fc 58.8%,#2296f6 59.3%,#0d58f0 60.2%,#1062f4 62.7%,#0e5cf1 66.1%,#1063f4 69.7%,#1369f6 72.4%,#1165f5 76.9%,#146af6 80.3%,#0d58f0 86.6%,#1e84f6 87.6%,#279bf7 88.2%,#10c6fb 88.8%,#10c6fb 89.4%,#1b7ef5 89.8%,#2697f7 90.0%,#1062f4 90.5%,#0f5ef2 94.7%,#0f5ef2 99.2%,#1164f4 100.0%)"></div><div style="height:1.0px;background:linear-gradient(90deg,#1b7df5 0.0%,#1875f5 0.8%,#1164f4 2.0%,#1267f5 4.5%,#1164f5 7.6%,#1266f5 9.2%,#2391f7 10.1%,#299ff7 10.1%,#0ecbfb 10.7%,#0ecbfb 11.8%,#2391f7 12.3%,#299ff7 12.4%,#1165f5 13.2%,#1368f5 18.3%,#146bf6 21.5%,#0e5df2 25.6%,#156cf6 28.3%,#0e5cf2 32.6%,#0d5af1 35.7%,#0e5df2 39.7%,#0e5bf1 39.7%,#2296f6 40.6%,#1ab0fc 41.1%,#00e2ff 41.8%,#00eeff 42.0%,#00ff96 42.7%,#4cff38 43.4%,#4cff38 46.2%,#faf00a 47.1%,#faf00a 48.3%,#fcc305 48.8%,#f93f07 49.2%,#f61a0a 49.3%,#de1010 50.2%,#f61a0a 50.9%,#f93f07 51.0%,#fcc305 51.4%,#faf00a 51.8%,#faf00a 53.0%,#4cff38 53.8%,#4cff38 56.3%,#00ff96 57.0%,#00eeff 57.6%,#00e2ff 57.8%,#1ab0fc 58.4%,#2296f6 58.9%,#1063f4 59.6%,#0e5bf1 63.3%,#0f60f3 66.5%,#1163f4 71.0%,#1368f5 74.9%,#146bf6 79.0%,#146cf6 86.6%,#1e85f6 87.6%,#279cf7 88.0%,#0fc6fb 88.6%,#0fc6fb 89.4%,#1b7ef6 89.6%,#2698f7 90.0%,#0f5ef2 90.3%,#0f5ef2 93.8%,#0f5ef2 97.6%,#1369f6 100.0%)"></div><div style="height:1.0px;background:linear-gradient(90deg,#279bf7 0.0%,#208af6 0.8%,#0f60f3 2.0%,#0d59f0 4.7%,#0e5cf2 8.5%,#228ef6 9.5%,#289df7 10.2%,#0fc8fb 10.8%,#0fc8fb 11.9%,#228ef6 12.3%,#289df7 12.5%,#0e5df2 13.1%,#1062f4 17.9%,#0c57f0 21.3%,#146bf6 24.4%,#0d59f0 28.1%,#1063f4 30.7%,#0f60f3 33.3%,#146bf6 37.9%,#0c57f0 41.0%,#2296f6 41.8%,#1ab0fc 42.2%,#00e2ff 42.9%,#00eeff 43.7%,#00ff96 44.4%,#4cff38 45.0%,#4cff38 46.8%,#faf00a 47.6%,#faf00a 48.8%,#fcc305 49.2%,#f93f07 49.6%,#f61a0a 49.7%,#de1010 50.3%,#f61a0a 50.9%,#f93f07 51.0%,#fcc305 51.4%,#faf00a 51.8%,#faf00a 53.0%,#4cff38 53.8%,#4cff38 55.6%,#00ff96 56.3%,#00eeff 57.0%,#00e2ff 57.8%,#1ab0fc 58.5%,#2296f6 58.9%,#1266f5 59.8%,#0e5cf2 61.6%,#1369f6 64.9%,#146af6 68.8%,#0f60f3 72.9%,#0d58f0 75.5%,#0e5df2 78.6%,#1061f3 86.9%,#1d83f6 87.8%,#2699f7 87.8%,#10c4fb 88.5%,#10c4fb 89.2%,#1b7cf5 89.7%,#2595f7 89.9%,#0e5cf2 90.5%,#146af6 92.4%,#1063f4 94.9%,#0f5ff3 99.2%,#1369f6 100.0%)"></div><div style="height:1.0px;background:linear-gradient(90deg,#299ff7 0.0%,#218cf6 0.8%,#0e5bf1 2.0%,#1267f5 5.9%,#146bf6 7.9%,#2392f7 9.1%,#29a1f7 9.8%,#0dccfc 10.5%,#0dccfc 12.1%,#29a1f7 12.8%,#2392f7 12.8%,#1063f4 13.7%,#0e5bf1 16.0%,#0e5cf1 19.9%,#0f5ef2 22.7%,#1061f4 25.8%,#146bf6 29.2%,#0f5ef2 31.7%,#0e5cf1 34.8%,#0d5af1 38.4%,#2296f6 39.3%,#1ab0fc 39.8%,#00e2ff 40.5%,#00eeff 42.1%,#00ff96 42.8%,#4cff38 43.6%,#4cff38 45.4%,#faf00a 46.2%,#faf00a 48.3%,#fcc305 48.7%,#f93f07 49.1%,#f61a0a 49.3%,#de1010 50.3%,#f61a0a 51.1%,#f93f07 51.3%,#fcc305 51.7%,#faf00a 52.0%,#faf00a 53.9%,#4cff38 54.7%,#4cff38 56.3%,#00ff96 56.9%,#00eeff 57.6%,#00e2ff 59.0%,#1ab0fc 59.7%,#2296f6 60.1%,#0f60f3 60.9%,#0f60f3 65.2%,#146af6 68.3%,#0f5ef2 71.4%,#1165f5 74.8%,#1368f5 79.0%,#0d58f0 86.3%,#1f86f6 87.3%,#289df7 87.8%,#0fc8fb 88.4%,#0fc8fb 89.1%,#1c7ff6 89.5%,#2699f7 89.7%,#146bf6 90.3%,#0d59f0 95.2%,#0e5df2 97.9%,#1164f4 100.0%)"></div><div style="height:1.0px;background:linear-gradient(90deg,#2698f7 0.0%,#1f88f6 0.8%,#0f5ff3 2.0%,#0e5df2 4.6%,#1266f5 7.1%,#0f5ff3 8.6%,#228ff6 9.6%,#289df7 10.0%,#0ec9fb 10.6%,#0ec9fb 11.8%,#228ff6 12.2%,#289df7 12.4%,#1163f4 12.9%,#0d5af0 16.5%,#0f5ef2 20.1%,#146af6 24.2%,#136af6 28.4%,#0e5cf2 32.2%,#146bf6 35.9%,#146bf6 40.2%,#2296f6 41.0%,#1ab0fc 41.4%,#00e2ff 42.0%,#00eeff 43.4%,#00ff96 44.0%,#4cff38 44.7%,#4cff38 46.7%,#faf00a 47.5%,#faf00a 48.7%,#fcc305 49.0%,#f93f07 49.4%,#f61a0a 49.5%,#de1010 50.1%,#f61a0a 50.8%,#f93f07 50.9%,#fcc305 51.3%,#faf00a 51.7%,#faf00a 53.1%,#4cff38 53.9%,#4cff38 56.2%,#00ff96 56.9%,#00eeff 57.6%,#00e2ff 59.1%,#1ab0fc 59.8%,#2296f6 60.3%,#0f5ef2 61.0%,#0f5ff3 61.2%,#0e5cf1 65.5%,#1267f5 68.2%,#0d58f0 72.2%,#0d5af1 74.7%,#1165f5 79.0%,#0e5df2 86.7%,#1e83f6 87.7%,#279af7 88.0%,#10c4fb 88.6%,#10c4fb 89.2%,#1b7df5 89.6%,#2596f7 89.8%,#156cf6 90.4%,#1062f4 96.5%,#1061f4 99.9%,#1163f4 100.0%)"></div><div style="height:1.0px;background:linear-gradient(90deg,#1e84f6 0.0%,#1a7af5 0.8%,#1061f4 2.0%,#1369f6 6.5%,#0d59f0 8.4%,#2493f7 9.6%,#2aa2f7 10.4%,#0dcdfc 11.0%,#0dcdfc 12.2%,#2493f7 12.5%,#2aa2f7 12.8%,#146af6 13.3%,#1165f5 18.0%,#1265f5 21.5%,#0d58f0 25.3%,#0d58f0 28.2%,#146bf6 32.6%,#1368f5 36.9%,#1369f6 38.8%,#2296f6 39.6%,#1ab0fc 40.1%,#00e2ff 40.7%,#00eeff 43.3%,#00ff96 44.0%,#4cff38 44.7%,#4cff38 45.8%,#faf00a 46.6%,#faf00a 48.1%,#fcc305 48.5%,#f93f07 48.9%,#f61a0a 49.1%,#de1010 50.0%,#f61a0a 51.0%,#f93f07 51.2%,#fcc305 51.7%,#faf00a 52.1%,#faf00a 53.5%,#4cff38 54.4%,#4cff38 55.6%,#00ff96 56.3%,#00eeff 57.0%,#00e2ff 59.7%,#1ab0fc 60.4%,#2296f6 60.9%,#146af6 61.7%,#156cf6 64.4%,#1369f6 67.8%,#0e5bf1 71.7%,#136af6 74.2%,#0f60f3 78.4%,#1061f4 85.8%,#1f87f6 87.0%,#289ef7 87.8%,#0fc8fb 88.5%,#0fc8fb 89.4%,#1c7ff6 89.7%,#279af7 90.0%,#1063f4 90.5%,#0f5ff3 94.3%,#0f5ef2 97.2%,#1369f6 100.0%)"></div><div style="height:1.0px;background:linear-gradient(90deg,#1978f5 0.0%,#1672f5 0.8%,#146bf6 2.0%,#1267f5 6.0%,#1165f5 9.1%,#2492f7 10.1%,#2aa1f7 10.3%,#0dccfc 10.9%,#0dccfc 12.3%,#2492f7 12.6%,#2aa1f7 12.9%,#0f5ff3 13.4%,#0f5ef2 16.1%,#0f5ff3 20.6%,#0f5ff3 24.5%,#0e5cf1 27.8%,#1266f5 31.1%,#0e5cf2 35.6%,#0d59f0 38.2%,#2296f6 39.0%,#1ab0fc 39.4%,#00e2ff 40.0%,#00eeff 43.4%,#00ff96 44.1%,#4cff38 44.7%,#4cff38 46.1%,#faf00a 46.9%,#faf00a 48.3%,#fcc305 48.6%,#f93f07 49.0%,#f61a0a 49.2%,#de1010 50.1%,#f61a0a 51.1%,#f93f07 51.2%,#fcc305 51.7%,#faf00a 52.1%,#faf00a 53.6%,#4cff38 54.5%,#4cff38 56.0%,#00ff96 56.7%,#00eeff 57.4%,#00e2ff 61.2%,#1ab0fc 61.9%,#2296f6 62.4%,#0e5cf1 63.3%,#0f5ef2 65.0%,#146af6 68.1%,#146bf6 72.0%,#1061f3 76.0%,#156cf6 80.0%,#146bf6 85.8%,#1f86f6 87.0%,#289ef7 87.8%,#0fc8fb 88.4%,#0fc8fb 89.2%,#1c7ff6 89.6%,#279af7 89.9%,#146bf6 90.4%,#1163f4 94.3%,#1165f5 98.7%,#1061f4 100.0%)"></div><div style="height:1.0px;background:linear-gradient(90deg,#1c81f6 0.0%,#1977f5 0.8%,#146cf6 2.0%,#0d5af1 5.8%,#1061f4 8.5%,#2290f6 9.7%,#289ef7 10.4%,#0ecafb 11.0%,#0ecafb 12.3%,#2290f6 12.3%,#289ef7 12.9%,#0f60f3 13.0%,#1266f5 17.0%,#0f5ff3 20.5%,#0d5af1 24.8%,#1062f4 28.0%,#156cf6 32.5%,#0f60f3 36.2%,#1368f5 38.7%,#1165f5 39.3%,#2296f6 40.1%,#1ab0fc 40.6%,#00e2ff 41.2%,#00eeff 43.0%,#00ff96 43.7%,#4cff38 44.4%,#4cff38 46.5%,#faf00a 47.4%,#faf00a 48.5%,#fcc305 48.9%,#f93f07 49.3%,#f61a0a 49.4%,#de1010 50.1%,#f61a0a 50.8%,#f93f07 50.9%,#fcc305 51.4%,#faf00a 51.7%,#faf00a 52.8%,#4cff38 53.7%,#4cff38 55.7%,#00ff96 56.4%,#00eeff 57.1%,#00e2ff 58.9%,#1ab0fc 59.5%,#2296f6 60.0%,#1165f5 60.8%,#0d58f0 64.1%,#1368f5 67.2%,#0e5bf1 69.9%,#0d5af1 74.1%,#146bf6 77.1%,#0f60f3 81.0%,#1063f4 86.4%,#1e84f6 87.5%,#279bf7 87.8%,#10c5fb 88.5%,#10c5fb 89.3%,#1b7df5 89.7%,#2597f7 89.9%,#1063f4 90.5%,#1063f4 94.3%,#1063f4 97.5%,#0d58f0 100.0%)"></div><div style="height:1.0px;background:linear-gradient(90deg,#2493f7 0.0%,#1e84f6 0.8%,#1266f5 2.0%,#0d58f0 4.5%,#0e5df2 9.0%,#218cf6 10.0%,#279bf7 10.4%,#0fc7fb 11.0%,#0fc7fb 12.1%,#218cf6 12.2%,#279bf7 12.6%,#146af6 12.8%,#1164f4 16.3%,#1164f5 20.3%,#1061f4 22.7%,#1267f5 26.9%,#1163f4 29.5%,#1369f6 32.2%,#1163f4 36.4%,#0e5df2 39.4%,#0e5df2 39.7%,#2296f6 40.5%,#1ab0fc 41.0%,#00e2ff 41.7%,#00eeff 43.4%,#00ff96 44.1%,#4cff38 44.8%,#4cff38 46.6%,#faf00a 47.4%,#faf00a 48.8%,#fcc305 49.2%,#f93f07 49.6%,#f61a0a 49.7%,#de1010 50.1%,#f61a0a 50.6%,#f93f07 50.7%,#fcc305 51.0%,#faf00a 51.4%,#faf00a 52.8%,#4cff38 53.6%,#4cff38 55.3%,#00ff96 56.0%,#00eeff 56.7%,#00e2ff 58.4%,#1ab0fc 59.1%,#2296f6 59.5%,#1061f3 60.4%,#146bf6 62.1%,#0f5ef2 66.2%,#1267f5 68.8%,#0e5df2 73.3%,#146af6 77.6%,#1061f4 86.0%,#1d82f6 87.1%,#2697f7 87.7%,#11c2fb 88.3%,#11c2fb 89.0%,#1a7bf5 89.3%,#2494f7 89.7%,#1368f5 90.1%,#0e5bf1 93.0%,#1164f4 97.5%,#0e5df2 100.0%)"></div><div style="height:1.0px;background:linear-gradient(90deg,#2aa3f8 0.0%,#2290f6 0.8%,#156cf6 2.0%,#1061f4 5.7%,#0f5ef2 8.0%,#2391f7 9.2%,#29a0f7 10.2%,#0ecbfb 10.8%,#0ecbfb 12.3%,#2391f7 12.4%,#29a0f7 12.9%,#0d59f0 13.1%,#0f60f3 17.0%,#0d59f0 19.4%,#1062f4 23.7%,#0e5bf1 27.4%,#1165f5 31.8%,#0d5af1 35.5%,#1369f6 38.4%,#1061f3 39.6%,#2296f6 40.5%,#1ab0fc 40.9%,#00e2ff 41.6%,#00eeff 42.9%,#00ff96 43.6%,#4cff38 44.3%,#4cff38 46.1%,#faf00a 46.9%,#faf00a 48.5%,#fcc305 48.9%,#f93f07 49.3%,#f61a0a 49.5%,#de1010 50.3%,#f61a0a 51.1%,#f93f07 51.2%,#fcc305 51.7%,#faf00a 52.1%,#faf00a 53.7%,#4cff38 54.5%,#4cff38 56.4%,#00ff96 57.0%,#00eeff 57.7%,#00e2ff 59.1%,#1ab0fc 59.7%,#2296f6 60.2%,#0d58f0 61.0%,#1062f4 63.9%,#1061f4 67.7%,#0d5af1 71.7%,#0d58f0 74.7%,#156cf6 78.9%,#1368f5 86.0%,#1e85f6 87.1%,#289cf7 87.8%,#0fc7fb 88.4%,#0fc7fb 89.1%,#1b7ef6 89.6%,#2698f7 89.7%,#1368f5 90.4%,#0f5ef2 94.5%,#0e5bf1 98.1%,#1164f5 100.0%)"></div><div style="height:1.0px;background:linear-gradient(90deg,#2595f7 0.0%,#1e86f6 0.8%,#0e5bf1 2.0%,#1267f5 5.7%,#0e5bf1 8.1%,#2392f7 9.2%,#29a1f7 9.9%,#0dccfc 10.5%,#0dccfc 11.8%,#2392f7 12.0%,#29a1f7 12.4%,#0f60f3 12.7%,#1164f5 15.9%,#156cf6 19.9%,#146af6 23.6%,#0e5df2 26.7%,#1164f4 30.6%,#1267f5 35.1%,#1368f5 38.3%,#2296f6 39.1%,#1ab0fc 39.6%,#00e2ff 40.2%,#00eeff 42.0%,#00ff96 42.7%,#4cff38 43.4%,#4cff38 45.8%,#faf00a 46.6%,#faf00a 48.2%,#fcc305 48.6%,#f93f07 49.1%,#f61a0a 49.2%,#de1010 50.1%,#f61a0a 51.0%,#f93f07 51.2%,#fcc305 51.6%,#faf00a 52.0%,#faf00a 53.6%,#4cff38 54.5%,#4cff38 56.9%,#00ff96 57.6%,#00eeff 58.3%,#00e2ff 60.1%,#1ab0fc 60.8%,#2296f6 61.3%,#0d58f0 62.1%,#1267f5 63.1%,#1369f6 67.1%,#1368f5 70.7%,#1369f6 73.3%,#1267f5 76.7%,#1266f5 79.5%,#1163f4 86.0%,#1f86f6 87.1%,#289df7 87.7%,#0fc7fb 88.3%,#0fc7fb 89.0%,#1c7ff6 89.5%,#2699f7 89.6%,#1267f5 90.3%,#0e5cf2 93.3%,#0d59f0 97.8%,#146bf6 100.0%)"></div><div style="height:1.0px;background:linear-gradient(90deg,#146bf4 0.0%,#1268f4 0.8%,#146af6 2.0%,#1368f5 4.9%,#1063f4 8.2%,#228ff6 9.3%,#289ef7 10.0%,#0ec9fb 10.6%,#0ec9fb 11.9%,#228ff6 12.0%,#289ef7 12.5%,#1061f4 12.8%,#0e5bf1 15.0%,#1165f5 17.9%,#0f5ef2 22.2%,#1368f5 25.9%,#146af6 29.5%,#1062f4 32.1%,#1165f5 34.7%,#0e5df2 37.2%,#1368f5 40.5%,#2296f6 41.3%,#1ab0fc 41.7%,#00e2ff 42.4%,#00eeff 43.4%,#00ff96 44.0%,#4cff38 44.7%,#4cff38 46.5%,#faf00a 47.4%,#faf00a 48.7%,#fcc305 49.0%,#f93f07 49.5%,#f61a0a 49.6%,#de1010 50.2%,#f61a0a 50.8%,#f93f07 50.9%,#fcc305 51.4%,#faf00a 51.8%,#faf00a 53.1%,#4cff38 54.0%,#4cff38 55.9%,#00ff96 56.6%,#00eeff 57.3%,#00e2ff 58.3%,#1ab0fc 59.0%,#2296f6 59.5%,#0e5cf2 60.3%,#146bf6 62.7%,#1369f6 66.4%,#0e5df2 69.3%,#1267f5 72.0%,#0d59f0 74.8%,#1063f4 77.8%,#0e5df2 80.8%,#0d5af1 86.2%,#1e84f6 87.2%,#279af7 87.7%,#10c5fb 88.3%,#10c5fb 89.1%,#1b7df5 89.3%,#2596f7 89.7%,#0f60f3 90.0%,#156cf6 95.2%,#1267f5 98.3%,#1061f4 100.0%)"></div><div style="height:1.0px;background:linear-gradient(90deg,#1062f4 0.0%,#1062f4 0.8%,#1267f5 2.0%,#0f5ef2 6.0%,#146bf6 7.7%,#2699f7 9.0%,#2ca8f8 9.8%,#0bd2fc 10.5%,#0bd2fc 12.2%,#2ca8f8 12.8%,#2699f7 12.9%,#146bf6 13.9%,#1265f5 16.9%,#0f5ef2 20.5%,#0e5df2 24.6%,#0d5af1 28.1%,#0f5ff3 31.1%,#0e5bf1 34.8%,#1368f5 38.0%,#1368f5 38.1%,#2296f6 38.8%,#1ab0fc 39.3%,#00e2ff 40.0%,#00eeff 41.8%,#00ff96 42.5%,#4cff38 43.2%,#4cff38 44.2%,#faf00a 45.1%,#faf00a 47.3%,#fcc305 47.7%,#f93f07 48.2%,#f61a0a 48.5%,#de1010 50.0%,#f61a0a 51.4%,#f93f07 51.7%,#fcc305 52.1%,#faf00a 52.5%,#faf00a 54.6%,#4cff38 55.4%,#4cff38 56.4%,#00ff96 57.1%,#00eeff 57.7%,#00e2ff 59.4%,#1ab0fc 60.1%,#2296f6 60.5%,#1266f5 61.3%,#0e5bf1 62.1%,#1061f3 64.8%,#156cf6 67.3%,#0d5af1 70.5%,#0d5af1 74.3%,#0d5af0 76.9%,#0e5df2 81.0%,#1165f5 84.5%,#218bf6 86.1%,#2ba4f8 87.5%,#0ccefc 88.2%,#0ccefc 89.0%,#29a0f7 89.7%,#1d83f6 89.7%,#0e5bf1 90.6%,#1061f4 92.4%,#1368f5 95.2%,#1368f5 98.6%,#0d59f0 100.0%)"></div><div style="height:1.0px;background:linear-gradient(90deg,#1062f4 0.0%,#1062f4 0.8%,#1265f5 2.0%,#1165f5 7.3%,#279af7 8.7%,#2da8f8 9.8%,#0ad3fc 10.5%,#0ad3fc 12.3%,#2da8f8 13.0%,#279af7 13.4%,#0e5df2 14.5%,#0f5ff3 19.8%,#1163f4 23.3%,#146af6 27.6%,#0d58f0 30.6%,#0d58f0 33.2%,#1266f5 37.2%,#2296f6 38.0%,#1ab0fc 38.5%,#00e2ff 39.1%,#00eeff 41.8%,#00ff96 42.4%,#4cff38 43.1%,#4cff38 44.6%,#faf00a 45.4%,#faf00a 47.4%,#fcc305 47.7%,#f93f07 48.2%,#f61a0a 48.5%,#de1010 50.0%,#f61a0a 51.6%,#f93f07 51.9%,#fcc305 52.3%,#faf00a 52.7%,#faf00a 54.6%,#4cff38 55.5%,#4cff38 57.0%,#00ff96 57.7%,#00eeff 58.3%,#00e2ff 61.0%,#1ab0fc 61.6%,#2296f6 62.1%,#1368f5 62.9%,#0e5bf1 65.3%,#1061f4 68.0%,#1369f6 71.7%,#136af6 75.0%,#1164f4 78.6%,#0f5ff3 85.2%,#218cf6 86.6%,#2ba5f8 87.7%,#0ccefc 88.3%,#0ccefc 89.2%,#2aa1f7 89.8%,#1e83f6 89.8%,#1062f4 90.8%,#1062f4 93.5%,#0f60f3 97.9%,#146bf6 100.0%)"></div><div style="height:1.0px;background:linear-gradient(90deg,#1062f4 0.0%,#1062f4 0.8%,#0f60f3 2.0%,#146af6 6.1%,#2ba3f8 7.7%,#2eacf8 9.5%,#07dcfd 10.2%,#07dcfd 12.4%,#2eacf8 13.1%,#2ba3f8 13.3%,#1061f4 14.4%,#0c57f0 19.1%,#146bf6 23.4%,#1266f5 27.8%,#0f5ef2 31.5%,#1062f4 34.6%,#1266f5 36.6%,#2296f6 37.5%,#1ab0fc 37.9%,#00e2ff 38.6%,#00eeff 42.6%,#00ff96 43.3%,#4cff38 44.0%,#4cff38 44.1%,#faf00a 44.9%,#faf00a 46.4%,#fcc305 46.8%,#fb5a05 47.2%,#f94007 47.7%,#e6300c 50.0%,#f94007 52.4%,#fb5a05 52.9%,#fcc305 53.3%,#faf00a 53.7%,#faf00a 55.2%,#4cff38 56.0%,#4cff38 56.1%,#00ff96 56.8%,#00eeff 57.5%,#00e2ff 61.5%,#1ab0fc 62.2%,#2296f6 62.6%,#0d59f0 63.5%,#1266f5 65.5%,#0f5ff3 70.0%,#1266f5 73.1%,#1369f6 76.0%,#0f5ef3 80.5%,#0e5df2 83.3%,#2493f7 85.2%,#2eacf8 87.4%,#09d7fd 88.1%,#09d7fd 89.0%,#2089f6 89.7%,#2eabf8 89.7%,#0d5af0 90.7%,#1061f4 95.7%,#0f60f3 98.5%,#1062f4 100.0%)"></div><div style="height:1.0px;background:linear-gradient(90deg,#1062f4 0.0%,#1062f4 0.8%,#0e5bf1 2.0%,#1266f5 5.7%,#2ba5f8 7.5%,#2eacf8 9.5%,#07dcfd 10.3%,#07dcfd 12.5%,#2eacf8 13.2%,#2ba5f8 13.9%,#0f60f3 15.2%,#1267f5 20.8%,#1062f4 23.8%,#0d58f0 26.4%,#156cf6 30.7%,#1163f4 34.2%,#1164f4 35.3%,#2296f6 36.1%,#1ab0fc 36.6%,#00e2ff 37.3%,#00eeff 42.1%,#00ff96 42.8%,#4cff38 43.5%,#4cff38 44.2%,#faf00a 45.1%,#faf00a 45.9%,#fcc305 46.3%,#fc6f03 46.8%,#fb5d05 47.4%,#ec4909 49.9%,#fb5d05 52.3%,#fc6f03 52.9%,#fcc305 53.3%,#faf00a 53.7%,#faf00a 54.5%,#4cff38 55.3%,#4cff38 55.9%,#00ff96 56.6%,#00eeff 57.2%,#00e2ff 61.7%,#1ab0fc 62.3%,#2296f6 62.7%,#1267f5 63.6%,#1063f4 65.1%,#1164f4 68.0%,#1368f5 71.5%,#156cf6 75.5%,#0d5af1 78.7%,#0e5bf1 83.1%,#2494f7 85.1%,#2eacf8 87.6%,#08d8fd 88.2%,#08d8fd 89.1%,#2eacf8 89.8%,#208af6 90.1%,#1369f6 91.1%,#1267f5 95.2%,#0e5bf1 99.1%,#1267f5 100.0%)"></div><div style="height:1.0px;background:linear-gradient(90deg,#156ef5 0.0%,#136af4 0.8%,#146af6 2.0%,#1266f5 6.3%,#2ba5f8 7.8%,#2eacf8 9.3%,#07dcfd 10.0%,#07dcfd 12.0%,#2eacf8 12.7%,#2ba5f8 14.0%,#0e5cf1 15.4%,#0d5af1 19.3%,#1368f5 22.1%,#0f5ef2 25.9%,#1062f4 29.9%,#1369f6 33.2%,#0f60f3 36.5%,#2296f6 37.3%,#1ab0fc 37.7%,#00e2ff 38.4%,#00eeff 41.9%,#00ff96 42.6%,#4cff38 43.2%,#4cff38 44.6%,#faf00a 45.4%,#faf00a 46.2%,#fcc305 46.6%,#fd7703 47.0%,#fc6804 47.6%,#ee5208 50.0%,#fc6804 52.4%,#fd7703 53.0%,#fcc305 53.4%,#faf00a 53.8%,#faf00a 54.7%,#4cff38 55.6%,#4cff38 56.9%,#00ff96 57.6%,#00eeff 58.3%,#00e2ff 62.0%,#1ab0fc 62.7%,#2296f6 63.1%,#0f5ef2 64.0%,#1062f4 66.3%,#146af6 69.1%,#0d59f0 72.1%,#1368f5 76.6%,#1369f6 79.2%,#136af6 83.5%,#2494f7 85.4%,#2eacf8 87.6%,#08d8fd 88.3%,#08d8fd 89.3%,#2eacf8 90.0%,#208af6 90.3%,#1164f4 91.5%,#0e5df2 95.5%,#1368f5 99.2%,#0d58f0 100.0%)"></div><div style="height:1.0px;background:linear-gradient(90deg,#146cf5 0.0%,#1369f4 0.8%,#1062f4 2.0%,#146cf6 4.9%,#2ca7f8 6.7%,#2eacf8 9.2%,#07dcfd 9.9%,#07dcfd 12.0%,#2eacf8 12.7%,#2ca7f8 13.8%,#1063f4 15.2%,#1165f5 19.2%,#0e5df2 22.1%,#1369f6 25.3%,#1165f5 28.3%,#0e5cf1 32.3%,#1368f5 36.3%,#0e5df2 37.4%,#2296f6 38.3%,#1ab0fc 38.8%,#00e2ff 39.5%,#00eeff 41.4%,#00ff96 42.1%,#4cff38 42.8%,#4cff38 43.9%,#faf00a 44.8%,#faf00a 46.0%,#fcc305 46.4%,#fb6204 46.9%,#fa4b06 47.5%,#e83a0b 50.2%,#fa4b06 52.7%,#fb6204 53.3%,#fcc305 53.7%,#faf00a 54.1%,#faf00a 55.2%,#4cff38 56.0%,#4cff38 57.0%,#00ff96 57.7%,#00eeff 58.3%,#00e2ff 60.1%,#1ab0fc 60.7%,#2296f6 61.2%,#0d58f0 62.0%,#0e5bf1 64.8%,#146af6 68.0%,#0f5ff3 71.6%,#0d59f0 74.1%,#0c57f0 77.2%,#1267f5 80.4%,#1369f6 82.9%,#2596f7 84.9%,#2eacf8 87.5%,#08d8fd 88.2%,#08d8fd 89.1%,#2eacf8 89.7%,#218bf6 90.1%,#1164f4 91.1%,#0d58f0 94.8%,#1063f4 97.9%,#0d59f0 100.0%)"></div><div style="height:1.0px;background:linear-gradient(90deg,#1978f5 0.0%,#1671f5 0.8%,#1063f4 2.0%,#0d58f0 5.3%,#0f5ef2 7.4%,#299ff7 8.7%,#2eacf8 9.5%,#09d7fd 10.1%,#09d7fd 11.9%,#2eacf8 12.6%,#299ff7 13.4%,#1061f4 14.6%,#1063f4 17.8%,#1368f5 20.5%,#1165f5 23.4%,#0d59f0 27.3%,#0f5ff3 30.7%,#0d58f0 34.4%,#0d59f0 37.1%,#2296f6 37.9%,#1ab0fc 38.3%,#00e2ff 39.0%,#00eeff 42.0%,#00ff96 42.7%,#4cff38 43.4%,#4cff38 44.3%,#faf00a 45.1%,#faf00a 46.9%,#fcc305 47.3%,#f93f07 47.7%,#f61a0a 48.1%,#de1010 49.9%,#f61a0a 52.0%,#f93f07 52.4%,#fcc305 52.8%,#faf00a 53.3%,#faf00a 55.2%,#4cff38 56.1%,#4cff38 57.1%,#00ff96 57.9%,#00eeff 58.6%,#00e2ff 61.9%,#1ab0fc 62.6%,#2296f6 63.1%,#0d5af1 64.0%,#0f60f3 64.1%,#1062f4 67.8%,#146af6 71.7%,#0f5ff3 76.0%,#1369f6 79.7%,#0e5df2 84.7%,#228ff6 86.2%,#2daaf8 87.5%,#0ad3fc 88.2%,#0ad3fc 89.1%,#1f86f6 89.6%,#2ca6f8 89.7%,#0d58f0 90.5%,#1063f4 94.3%,#1164f4 98.6%,#1062f4 100.0%)"></div><div style="height:1.0px;background:linear-gradient(90deg,#1876f5 0.0%,#1670f5 0.8%,#146cf6 2.0%,#156cf6 7.1%,#289cf7 8.4%,#2eabf8 9.3%,#0ad5fc 10.0%,#0ad5fc 11.8%,#2eabf8 12.5%,#289cf7 13.8%,#0e5bf1 15.2%,#0f60f3 21.1%,#0d5af1 24.6%,#0f60f3 28.4%,#0e5bf1 32.1%,#0e5bf1 35.5%,#1265f5 37.5%,#2296f6 38.4%,#1ab0fc 38.9%,#00e2ff 39.6%,#00eeff 41.2%,#00ff96 41.9%,#4cff38 42.6%,#4cff38 44.6%,#faf00a 45.5%,#faf00a 47.0%,#fcc305 47.4%,#f93f07 47.9%,#f61a0a 48.3%,#de1010 50.1%,#f61a0a 51.8%,#f93f07 52.1%,#fcc305 52.5%,#faf00a 52.9%,#faf00a 54.4%,#4cff38 55.2%,#4cff38 57.1%,#00ff96 57.8%,#00eeff 58.4%,#00e2ff 60.0%,#1ab0fc 60.6%,#2296f6 61.1%,#1061f4 61.9%,#1267f5 65.4%,#146af6 69.6%,#0f60f3 74.1%,#146cf6 77.0%,#0d58f0 80.0%,#1165f5 84.3%,#228ef6 86.0%,#2ca7f8 87.6%,#0bd1fc 88.3%,#0bd1fc 89.2%,#2ba4f8 89.9%,#1e85f6 90.1%,#0f60f3 91.1%,#0d58f0 96.3%,#146af6 99.4%,#0d58f0 100.0%)"></div><div style="height:1.0px;background:linear-gradient(90deg,#1062f4 0.0%,#1062f4 0.8%,#1063f4 2.0%,#156cf6 4.6%,#0d59f0 7.8%,#2699f7 9.0%,#2ca8f8 9.4%,#0bd2fc 10.1%,#0bd2fc 12.0%,#2ca8f8 12.6%,#2699f7 13.6%,#0e5cf1 15.0%,#1369f6 17.7%,#0e5cf1 20.2%,#1061f4 24.2%,#0f5ef3 27.3%,#0e5bf1 30.1%,#146cf6 34.5%,#1266f5 37.2%,#0f60f3 37.8%,#2296f6 38.6%,#1ab0fc 39.1%,#00e2ff 39.8%,#00eeff 42.0%,#00ff96 42.7%,#4cff38 43.4%,#4cff38 44.2%,#faf00a 45.1%,#faf00a 47.4%,#fcc305 47.8%,#f93f07 48.3%,#f61a0a 48.6%,#de1010 50.1%,#f61a0a 51.6%,#f93f07 51.8%,#fcc305 52.3%,#faf00a 52.7%,#faf00a 54.9%,#4cff38 55.7%,#4cff38 56.5%,#00ff96 57.1%,#00eeff 57.8%,#00e2ff 59.9%,#1ab0fc 60.6%,#2296f6 61.0%,#1062f4 61.8%,#0e5cf1 63.8%,#1266f5 66.7%,#1163f4 69.2%,#1063f4 72.2%,#1163f4 76.2%,#0e5cf2 80.0%,#1063f4 85.2%,#218bf6 86.5%,#2ba4f8 87.4%,#0ccefc 88.1%,#0ccefc 88.9%,#1d83f6 89.5%,#29a0f7 89.6%,#0f5ff3 90.4%,#146cf6 92.6%,#0f60f3 95.7%,#0f60f3 99.7%,#0d59f0 100.0%)"></div><div style="height:1.0px;background:linear-gradient(90deg,#146bf4 0.0%,#1368f4 0.8%,#1062f4 2.0%,#0e5cf1 6.8%,#279bf7 8.2%,#2daaf8 9.2%,#0ad4fc 9.9%,#0ad4fc 11.8%,#2daaf8 12.5%,#279bf7 13.3%,#0f5ef2 14.6%,#0d59f0 18.1%,#0f60f3 20.8%,#1369f6 23.7%,#0c57f0 27.7%,#1164f5 32.2%,#1267f5 34.7%,#1368f5 37.2%,#2296f6 38.1%,#1ab0fc 38.6%,#00e2ff 39.3%,#00eeff 41.9%,#00ff96 42.6%,#4cff38 43.3%,#4cff38 44.7%,#faf00a 45.6%,#faf00a 47.3%,#fcc305 47.7%,#f93f07 48.2%,#f61a0a 48.6%,#de1010 50.3%,#f61a0a 51.8%,#f93f07 52.2%,#fcc305 52.6%,#faf00a 53.0%,#faf00a 54.5%,#4cff38 55.3%,#4cff38 56.6%,#00ff96 57.2%,#00eeff 57.9%,#00e2ff 60.2%,#1ab0fc 60.9%,#2296f6 61.3%,#0d59f0 62.1%,#146af6 64.3%,#1062f4 68.3%,#0d5af1 72.7%,#0e5cf2 76.3%,#1266f5 80.7%,#0c57f0 84.7%,#218df6 86.3%,#2ca6f8 87.8%,#0cd0fc 88.4%,#0cd0fc 89.1%,#2aa2f7 89.7%,#1e84f6 89.9%,#0d5af1 90.9%,#0f5ef2 94.0%,#146bf6 96.5%,#0f5ff3 99.9%,#1061f4 100.0%)"></div><div style="height:1.0px;background:linear-gradient(90deg,#1266f4 0.0%,#1165f4 0.8%,#1369f6 2.0%,#0d58f0 4.9%,#0d5af1 7.8%,#279bf7 8.9%,#2daaf8 9.3%,#0ad4fc 10.0%,#0ad4fc 11.6%,#2daaf8 12.3%,#279bf7 13.9%,#0e5bf1 15.4%,#1063f4 19.4%,#1267f5 23.4%,#146bf6 27.8%,#0f5ff3 30.7%,#156cf6 34.1%,#1165f5 37.3%,#2296f6 38.2%,#1ab0fc 38.6%,#00e2ff 39.3%,#00eeff 41.1%,#00ff96 41.7%,#4cff38 42.4%,#4cff38 44.9%,#faf00a 45.8%,#faf00a 47.5%,#fcc305 47.9%,#f93f07 48.4%,#f61a0a 48.7%,#de1010 50.3%,#f61a0a 51.9%,#f93f07 52.3%,#fcc305 52.7%,#faf00a 53.1%,#faf00a 54.9%,#4cff38 55.7%,#4cff38 58.3%,#00ff96 59.0%,#00eeff 59.7%,#00e2ff 61.4%,#1ab0fc 62.1%,#2296f6 62.6%,#0e5bf1 63.4%,#0d58f0 64.6%,#1061f4 67.9%,#0d58f0 71.4%,#0f60f3 75.2%,#1368f5 77.7%,#1368f5 85.3%,#218df6 86.6%,#2ba6f8 87.4%,#0ccffc 88.1%,#0ccffc 89.1%,#1e84f6 89.6%,#2aa2f7 89.8%,#1062f4 90.5%,#0f60f3 92.4%,#0f5ef3 96.5%,#0d5af1 99.8%,#1369f6 100.0%)"></div><div style="height:1.0px;background:linear-gradient(90deg,#1c80f6 0.0%,#1977f5 0.8%,#0f5ef3 2.0%,#0e5bf1 7.2%,#299ff7 8.4%,#2eacf8 8.8%,#09d8fd 9.5%,#09d8fd 11.7%,#2eacf8 12.4%,#299ff7 14.3%,#146cf6 16.0%,#0f60f3 20.6%,#0d58f0 23.3%,#1164f4 26.7%,#1165f5 29.9%,#1369f6 33.9%,#0c57f0 36.3%,#1369f6 37.1%,#2296f6 37.9%,#1ab0fc 38.3%,#00e2ff 39.0%,#00eeff 41.3%,#00ff96 42.0%,#4cff38 42.7%,#4cff38 44.7%,#faf00a 45.5%,#faf00a 47.1%,#fcc305 47.5%,#f93f07 47.9%,#f61a0a 48.3%,#de1010 50.2%,#f61a0a 52.3%,#f93f07 52.7%,#fcc305 53.2%,#faf00a 53.6%,#faf00a 55.2%,#4cff38 56.1%,#4cff38 58.3%,#00ff96 59.0%,#00eeff 59.7%,#00e2ff 62.2%,#1ab0fc 62.9%,#2296f6 63.4%,#0e5cf1 64.2%,#0f5ff3 65.2%,#1063f4 68.1%,#156cf6 70.8%,#146af6 74.9%,#1062f4 77.8%,#146cf6 83.7%,#2390f6 85.5%,#2dabf8 87.4%,#0ad4fc 88.1%,#0ad4fc 89.1%,#1f87f6 89.8%,#2ca7f8 89.8%,#156cf6 90.7%,#0f60f3 92.3%,#0d58f0 94.9%,#1163f4 99.4%,#1062f4 100.0%)"></div><div style="height:1.0px;background:linear-gradient(90deg,#1774f5 0.0%,#156ef5 0.8%,#0d59f0 2.0%,#0f5ff3 4.4%,#1062f4 8.2%,#289df7 9.2%,#2eacf8 9.4%,#09d6fd 10.0%,#09d6fd 11.7%,#2eacf8 12.3%,#289df7 14.4%,#0f60f3 16.0%,#1163f4 19.1%,#0d59f0 22.1%,#146bf6 26.1%,#146bf6 29.7%,#146bf6 33.2%,#0d5af1 37.2%,#2296f6 38.0%,#1ab0fc 38.5%,#00e2ff 39.1%,#00eeff 41.3%,#00ff96 42.0%,#4cff38 42.6%,#4cff38 44.5%,#faf00a 45.3%,#faf00a 47.2%,#fcc305 47.6%,#f93f07 48.0%,#f61a0a 48.4%,#de1010 50.1%,#f61a0a 51.9%,#f93f07 52.3%,#fcc305 52.8%,#faf00a 53.2%,#faf00a 55.2%,#4cff38 56.1%,#4cff38 58.2%,#00ff96 58.9%,#00eeff 59.6%,#00e2ff 62.0%,#1ab0fc 62.7%,#2296f6 63.2%,#0d5af1 64.1%,#0e5bf1 64.6%,#0d58f0 68.4%,#156cf6 71.3%,#1368f5 74.0%,#0f5ef2 78.4%,#0f5ef2 84.1%,#228ef6 85.8%,#2ca8f8 87.7%,#0bd1fc 88.4%,#0bd1fc 89.1%,#1e85f6 89.7%,#2ba4f8 89.7%,#0d59f0 90.5%,#0d58f0 93.0%,#156cf6 95.5%,#1266f5 98.6%,#1267f5 100.0%)"></div><div style="height:1.0px;background:linear-gradient(90deg,#1062f4 0.0%,#1062f4 0.8%,#156cf6 2.0%,#0d59f0 7.3%,#2ba5f8 8.5%,#2eacf8 9.1%,#07dcfd 9.8%,#07dcfd 11.7%,#2eacf8 12.4%,#2ba5f8 14.3%,#156cf6 15.9%,#1369f6 21.1%,#1164f4 25.0%,#0e5bf1 28.6%,#0f5ef2 32.7%,#1267f5 35.6%,#0f5ef2 37.4%,#2296f6 38.2%,#1ab0fc 38.7%,#00e2ff 39.3%,#00eeff 41.8%,#00ff96 42.5%,#4cff38 43.1%,#4cff38 44.5%,#faf00a 45.3%,#faf00a 46.5%,#fcc305 46.9%,#f93f07 47.3%,#f61a0a 47.8%,#de1010 50.1%,#f61a0a 52.7%,#f93f07 53.3%,#fcc305 53.8%,#faf00a 54.2%,#faf00a 55.5%,#4cff38 56.4%,#4cff38 57.9%,#00ff96 58.7%,#00eeff 59.4%,#00e2ff 62.2%,#1ab0fc 62.9%,#2296f6 63.4%,#0e5df2 63.9%,#1368f5 64.2%,#1368f5 67.3%,#0e5bf1 70.1%,#0e5df2 73.6%,#1368f5 76.9%,#0f5ff3 79.5%,#0e5cf1 84.3%,#2494f7 86.0%,#2eacf8 87.4%,#08d8fd 88.2%,#08d8fd 89.3%,#2eacf8 90.0%,#208af6 90.1%,#1368f5 91.1%,#1368f5 95.1%,#0d5af1 98.6%,#0e5cf1 100.0%)"></div><div style="height:1.0px;background:linear-gradient(90deg,#228ef6 0.0%,#1d81f6 0.8%,#156cf6 2.0%,#1368f5 7.0%,#2ca7f8 8.2%,#2eacf8 8.9%,#07dcfd 9.6%,#07dcfd 11.8%,#2eacf8 12.5%,#2ca7f8 14.5%,#1369f6 16.2%,#1164f4 21.0%,#1266f5 25.4%,#0e5bf1 29.4%,#146cf6 32.9%,#1164f5 36.2%,#2296f6 37.1%,#1ab0fc 37.5%,#00e2ff 38.2%,#00eeff 40.7%,#00ff96 41.4%,#4cff38 42.1%,#4cff38 44.0%,#faf00a 44.9%,#faf00a 45.9%,#fcc305 46.3%,#f93f07 46.7%,#f61a0a 47.3%,#de1010 49.9%,#f61a0a 52.5%,#f93f07 53.1%,#fcc305 53.5%,#faf00a 53.9%,#faf00a 54.9%,#4cff38 55.7%,#4cff38 57.6%,#00ff96 58.3%,#00eeff 59.0%,#00e2ff 61.5%,#1ab0fc 62.2%,#2296f6 62.6%,#1165f5 63.4%,#0f5ff3 64.7%,#0e5cf1 67.7%,#1369f6 71.9%,#0e5df2 76.0%,#0d5af1 79.8%,#0e5bf1 83.1%,#2596f7 85.1%,#2eacf8 87.5%,#08d8fd 88.2%,#08d8fd 89.2%,#2eacf8 89.9%,#218bf6 90.3%,#1061f4 91.4%,#1061f3 95.4%,#0f60f3 99.2%,#1368f5 100.0%)"></div><div style="height:1.0px;background:linear-gradient(90deg,#2494f7 0.0%,#1e85f6 0.8%,#0e5cf2 2.0%,#0d58f0 7.9%,#2eacf8 8.8%,#2ca8f8 8.9%,#07dcfd 9.6%,#07dcfd 11.9%,#2eacf8 12.6%,#2ca8f8 15.6%,#146bf6 17.7%,#0c57f0 19.6%,#0f5ff3 22.8%,#1266f5 26.0%,#0e5df2 29.1%,#1368f5 31.9%,#1267f5 35.6%,#1267f5 37.1%,#2296f6 37.9%,#1ab0fc 38.4%,#00e2ff 39.1%,#00eeff 41.9%,#00ff96 42.6%,#4cff38 43.3%,#4cff38 44.2%,#faf00a 45.1%,#faf00a 45.8%,#fcc305 46.2%,#f93f07 46.6%,#f61a0a 47.3%,#de1010 50.2%,#f61a0a 53.0%,#f93f07 53.6%,#fcc305 54.1%,#faf00a 54.5%,#faf00a 55.1%,#4cff38 55.9%,#4cff38 56.9%,#00ff96 57.6%,#00eeff 58.2%,#00e2ff 60.9%,#1ab0fc 61.6%,#2296f6 62.1%,#1369f6 62.9%,#1368f5 65.5%,#1061f3 68.2%,#146bf6 71.8%,#0e5df2 76.2%,#0d58f0 80.0%,#0e5df2 83.4%,#2597f7 85.3%,#2eacf8 87.5%,#08d8fd 88.2%,#08d8fd 89.1%,#2eacf8 89.8%,#218cf6 90.3%,#0e5df2 91.5%,#146bf6 93.6%,#146af6 97.1%,#1267f5 100.0%)"></div><div style="height:1.0px;background:linear-gradient(90deg,#2699f7 0.0%,#2089f6 0.8%,#1368f5 2.0%,#1266f5 6.2%,#2ca8f8 7.7%,#2eacf8 8.8%,#07dcfd 9.6%,#07dcfd 11.8%,#2eacf8 12.6%,#2ca8f8 15.2%,#1165f5 17.2%,#146af6 20.9%,#1164f4 24.1%,#1368f5 27.0%,#0d58f0 31.1%,#1368f5 34.9%,#0d58f0 36.4%,#2296f6 37.2%,#1ab0fc 37.7%,#00e2ff 38.3%,#00eeff 41.6%,#00ff96 42.3%,#4cff38 43.0%,#4cff38 44.1%,#faf00a 44.9%,#faf00a 45.4%,#fcc305 45.8%,#f93f07 46.2%,#f61a0a 46.9%,#de1010 50.0%,#f61a0a 53.1%,#f93f07 53.9%,#fcc305 54.3%,#faf00a 54.7%,#faf00a 55.2%,#4cff38 56.0%,#4cff38 57.1%,#00ff96 57.8%,#00eeff 58.5%,#00e2ff 61.8%,#1ab0fc 62.5%,#2296f6 63.0%,#1368f5 63.8%,#0d5af1 65.4%,#1062f4 69.6%,#1368f5 73.4%,#0e5cf1 76.9%,#1165f5 82.0%,#2597f7 84.3%,#2eacf8 87.3%,#08d8fd 88.1%,#08d8fd 89.2%,#2eacf8 89.9%,#218cf6 90.2%,#1368f5 91.4%,#146af6 92.4%,#0f5ff3 95.9%,#1063f4 100.0%)"></div><div style="height:1.0px;background:linear-gradient(90deg,#2290f6 0.0%,#1d82f6 0.8%,#0d58f0 6.5%,#2ca8f8 7.8%,#2eacf8 8.3%,#07dcfd 9.1%,#07dcfd 11.4%,#2eacf8 12.2%,#2ca8f8 15.5%,#0e5bf1 17.8%,#1165f5 18.8%,#0e5df2 22.6%,#1369f6 25.6%,#0e5cf1 29.8%,#1267f5 33.5%,#1266f5 35.5%,#2296f6 36.3%,#1ab0fc 36.8%,#00e2ff 37.5%,#00eeff 41.8%,#00ff96 42.5%,#4cff38 43.2%,#4cff38 43.8%,#faf00a 44.6%,#faf00a 44.9%,#fcc305 45.3%,#f93f07 45.7%,#f61a0a 46.5%,#de1010 49.9%,#f61a0a 53.2%,#f93f07 54.0%,#fcc305 54.4%,#faf00a 54.8%,#faf00a 55.0%,#4cff38 55.8%,#4cff38 56.4%,#00ff96 57.1%,#00eeff 57.8%,#00e2ff 62.0%,#1ab0fc 62.6%,#2296f6 63.1%,#0e5bf1 63.9%,#1267f5 64.5%,#0f5ef2 68.4%,#146bf6 70.8%,#146af6 74.8%,#0d58f0 77.5%,#146af6 80.1%,#0f5ff3 82.0%,#2597f7 84.4%,#2eacf8 87.6%,#08d8fd 88.3%,#08d8fd 89.4%,#2eacf8 90.1%,#218cf6 90.6%,#1163f4 91.7%,#0e5cf2 93.5%,#1368f5 96.4%,#1062f4 98.8%,#1369f6 100.0%)"></div><div style="height:1.0px;background:linear-gradient(90deg,#2ba5f8 0.0%,#2391f7 0.8%,#1266f5 6.6%,#2ca8f8 7.9%,#2eacf8 8.2%,#07dcfd 9.1%,#07dcfd 11.8%,#2eacf8 12.6%,#2ca8f8 15.9%,#1063f4 18.2%,#0f60f3 20.3%,#1368f5 23.1%,#1266f5 27.1%,#0e5bf1 30.7%,#1165f5 34.1%,#1266f5 37.1%,#2296f6 37.9%,#1ab0fc 38.4%,#00e2ff 39.0%,#00eeff 41.6%,#00ff96 42.3%,#4cff38 43.0%,#4cff38 44.0%,#faf00a 44.9%,#faf00a 45.3%,#fcc305 45.7%,#f93f07 46.1%,#f61a0a 46.9%,#de1010 50.3%,#f61a0a 53.8%,#f93f07 54.6%,#fcc305 55.1%,#faf00a 55.5%,#faf00a 55.9%,#4cff38 56.7%,#4cff38 57.9%,#00ff96 58.6%,#00eeff 59.2%,#00e2ff 61.9%,#1ab0fc 62.6%,#2296f6 63.1%,#1369f6 64.0%,#0d59f0 65.7%,#0e5bf1 68.9%,#1061f3 72.1%,#156cf6 75.9%,#1266f5 78.9%,#1267f5 81.5%,#2597f7 84.0%,#2eacf8 87.4%,#08d8fd 88.1%,#08d8fd 89.1%,#2eacf8 89.8%,#218cf6 90.4%,#1062f4 91.7%,#0e5df2 93.1%,#0d59f0 97.5%,#0d5af1 100.0%)"></div><div style="height:1.0px;background:linear-gradient(90deg,#2392f7 0.0%,#1e83f6 0.8%,#146cf6 6.4%,#2ca8f8 7.7%,#2eacf8 8.2%,#07dcfd 9.0%,#07dcfd 11.4%,#2eacf8 12.2%,#2ca8f8 15.9%,#0f60f3 18.2%,#1369f6 20.9%,#0f60f3 25.3%,#0e5cf2 29.5%,#1368f5 32.8%,#0e5df2 35.7%,#0f5ff3 35.7%,#2296f6 36.6%,#1ab0fc 37.1%,#00e2ff 37.8%,#00eeff 41.8%,#00ff96 42.5%,#4cff38 43.2%,#4cff38 44.0%,#faf00a 44.8%,#faf00a 44.8%,#fcc305 45.3%,#f93f07 45.7%,#f61a0a 46.6%,#de1010 50.2%,#f61a0a 53.6%,#f93f07 54.3%,#fcc305 54.8%,#faf00a 55.1%,#faf00a 55.2%,#4cff38 55.9%,#4cff38 56.6%,#00ff96 57.3%,#00eeff 57.9%,#00e2ff 61.6%,#1ab0fc 62.3%,#2296f6 62.7%,#0d58f0 63.5%,#146bf6 65.0%,#0f5ef2 68.3%,#156cf6 72.6%,#1163f4 76.8%,#0d5af1 81.3%,#0d5af1 82.4%,#2597f7 84.7%,#2eacf8 87.5%,#08d8fd 88.3%,#08d8fd 89.5%,#2eacf8 90.2%,#218cf6 90.5%,#0e5cf2 91.7%,#1164f4 93.8%,#1061f4 97.6%,#0d5af1 100.0%)"></div><div style="height:1.0px;background:linear-gradient(90deg,#1978f5 0.0%,#1672f5 0.8%,#0f5ff3 6.9%,#2ca8f8 8.1%,#2eacf8 8.3%,#07dcfd 9.1%,#07dcfd 11.9%,#2eacf8 12.7%,#2ca8f8 16.7%,#0e5bf1 19.3%,#1265f5 21.2%,#1368f5 24.7%,#1164f4 28.9%,#1266f5 32.9%,#0f5ff3 35.4%,#156cf6 35.5%,#2296f6 36.2%,#1ab0fc 36.7%,#00e2ff 37.4%,#00eeff 41.1%,#00ff96 41.8%,#4cff38 42.5%,#4cff38 43.7%,#faf00a 44.2%,#faf00a 44.3%,#fcc305 44.7%,#f93f07 45.1%,#f61a0a 46.1%,#de1010 50.0%,#f61a0a 53.6%,#f93f07 54.4%,#fcc305 54.8%,#faf00a 55.2%,#faf00a 55.3%,#4cff38 55.8%,#4cff38 56.9%,#00ff96 57.5%,#00eeff 58.2%,#00e2ff 61.5%,#1ab0fc 62.1%,#2296f6 62.6%,#0d59f0 63.4%,#1061f3 64.4%,#1164f5 68.8%,#0e5df2 72.2%,#146cf6 75.0%,#146af6 78.8%,#1063f4 81.5%,#2597f7 84.0%,#2eacf8 87.4%,#08d8fd 88.2%,#08d8fd 89.4%,#2eacf8 90.2%,#218cf6 90.8%,#1061f4 92.1%,#0e5df2 93.0%,#1062f4 97.1%,#0e5cf2 100.0%)"></div><div style="height:1.0px;background:linear-gradient(90deg,#1a7af5 0.0%,#1773f5 0.8%,#0d59f0 6.2%,#2ca8f8 7.6%,#2eacf8 8.3%,#07dcfd 9.1%,#07dcfd 11.5%,#2eacf8 12.3%,#2ca8f8 15.6%,#1062f4 17.8%,#1164f4 19.0%,#1267f5 21.8%,#1163f4 24.3%,#1164f4 27.3%,#0d59f0 31.5%,#1369f6 34.7%,#0c57f0 36.0%,#2296f6 36.8%,#1ab0fc 37.3%,#00e2ff 38.0%,#00eeff 41.5%,#00ff96 42.2%,#4cff38 42.9%,#4cff38 43.9%,#faf00a 44.7%,#faf00a 45.0%,#fcc305 45.4%,#f93f07 45.8%,#f61a0a 46.6%,#de1010 49.9%,#f61a0a 53.3%,#f93f07 54.1%,#fcc305 54.5%,#faf00a 54.9%,#faf00a 55.2%,#4cff38 56.0%,#4cff38 57.0%,#00ff96 57.7%,#00eeff 58.4%,#00e2ff 62.1%,#1ab0fc 62.7%,#2296f6 63.2%,#1163f4 64.1%,#0f5ef2 67.6%,#0e5df2 72.2%,#1061f4 74.7%,#0f60f3 78.4%,#1369f6 81.1%,#0d59f0 82.6%,#2597f7 84.8%,#2eacf8 87.5%,#08d8fd 88.3%,#08d8fd 89.4%,#2eacf8 90.2%,#218cf6 90.6%,#0e5cf2 91.8%,#1163f4 93.9%,#1165f5 96.6%,#1061f4 100.0%)"></div><div style="height:1.0px;background:linear-gradient(90deg,#1875f5 0.0%,#156ff5 0.8%,#156cf6 6.2%,#2ca8f8 7.7%,#2eacf8 8.6%,#07dcfd 9.4%,#07dcfd 11.7%,#2eacf8 12.5%,#2ca8f8 16.4%,#1369f6 18.8%,#0e5bf1 23.8%,#1368f5 27.0%,#1368f5 30.5%,#0d59f0 33.9%,#0f60f3 37.2%,#2296f6 38.0%,#1ab0fc 38.5%,#00e2ff 39.1%,#00eeff 42.6%,#00ff96 43.2%,#4cff38 43.9%,#4cff38 44.2%,#faf00a 45.0%,#faf00a 45.3%,#fcc305 45.7%,#f93f07 46.1%,#f61a0a 46.9%,#de1010 50.3%,#f61a0a 53.7%,#f93f07 54.5%,#fcc305 55.0%,#faf00a 55.4%,#faf00a 55.7%,#4cff38 56.6%,#4cff38 56.9%,#00ff96 57.6%,#00eeff 58.3%,#00e2ff 61.8%,#1ab0fc 62.5%,#2296f6 63.0%,#1368f5 63.8%,#156cf6 65.7%,#1165f5 69.5%,#1267f5 73.6%,#1165f5 77.2%,#0e5cf2 79.7%,#0f5ff3 83.0%,#2597f7 85.1%,#2eacf8 87.7%,#08d8fd 88.4%,#08d8fd 89.4%,#2eacf8 90.2%,#218cf6 90.6%,#0e5bf1 91.8%,#0f60f3 93.6%,#0e5bf1 96.5%,#0e5df2 99.2%,#0e5bf1 100.0%)"></div><div style="height:1.0px;background:linear-gradient(90deg,#2390f6 0.0%,#1d82f6 0.8%,#1062f4 2.0%,#1266f5 6.8%,#2ca8f8 8.1%,#2eacf8 8.7%,#07dcfd 9.4%,#07dcfd 11.7%,#2eacf8 12.4%,#2ca8f8 15.6%,#0c57f0 17.8%,#0f5ff3 19.0%,#0f60f3 22.1%,#1266f5 25.2%,#0d59f0 28.1%,#0d59f0 31.2%,#1063f4 35.7%,#0f5ef2 36.3%,#2296f6 37.2%,#1ab0fc 37.6%,#00e2ff 38.4%,#00eeff 41.5%,#00ff96 42.2%,#4cff38 43.0%,#4cff38 43.6%,#faf00a 44.4%,#faf00a 44.8%,#fcc305 45.3%,#f93f07 45.7%,#f61a0a 46.5%,#de1010 49.9%,#f61a0a 53.0%,#f93f07 53.7%,#fcc305 54.1%,#faf00a 54.5%,#faf00a 54.8%,#4cff38 55.6%,#4cff38 56.1%,#00ff96 56.8%,#00eeff 57.4%,#00e2ff 60.2%,#1ab0fc 60.9%,#2296f6 61.3%,#0f5ff3 62.1%,#0f60f3 64.4%,#1369f6 68.3%,#0f60f3 70.8%,#1163f4 74.6%,#1062f4 78.5%,#156cf6 83.2%,#2597f7 85.2%,#2eacf8 87.5%,#08d8fd 88.2%,#08d8fd 89.2%,#2eacf8 89.9%,#218cf6 90.2%,#0f60f3 91.2%,#1369f6 93.2%,#1164f4 95.8%,#1369f6 100.0%,#146bf6 100.0%)"></div><div style="height:1.0px;background:linear-gradient(90deg,#1062f4 0.0%,#1062f4 0.8%,#1062f4 6.0%,#2ca8f8 7.4%,#2eacf8 8.3%,#07dcfd 9.1%,#07dcfd 11.8%,#2eacf8 12.6%,#2ca8f8 15.3%,#1164f4 17.4%,#146bf6 22.6%,#1061f4 25.4%,#0d5af1 29.3%,#1165f5 32.0%,#1062f4 35.9%,#2296f6 36.7%,#1ab0fc 37.1%,#00e2ff 37.8%,#00eeff 42.4%,#00ff96 43.1%,#4cff38 43.7%,#4cff38 44.1%,#faf00a 44.8%,#faf00a 45.1%,#fcc305 45.5%,#f93f07 45.9%,#f61a0a 46.7%,#de1010 50.0%,#f61a0a 53.7%,#f93f07 54.5%,#fcc305 55.0%,#faf00a 55.4%,#faf00a 55.7%,#4cff38 56.6%,#4cff38 57.0%,#00ff96 57.7%,#00eeff 58.4%,#00e2ff 63.6%,#1ab0fc 64.4%,#2296f6 64.9%,#0e5cf1 65.7%,#1164f5 66.6%,#156cf6 70.5%,#0d59f0 74.0%,#1266f5 77.0%,#146af6 80.3%,#1061f4 81.6%,#2597f7 84.1%,#2eacf8 87.4%,#08d8fd 88.2%,#08d8fd 89.4%,#2eacf8 90.2%,#218cf6 90.7%,#0f60f3 91.9%,#1369f6 94.7%,#0f5ef2 98.7%,#1265f5 100.0%)"></div><div style="height:1.0px;background:linear-gradient(90deg,#1772f5 0.0%,#156df5 0.8%,#0d58f0 2.0%,#146af6 5.3%,#2ca8f8 6.9%,#2eacf8 8.5%,#07dcfd 9.3%,#07dcfd 11.4%,#2eacf8 12.1%,#2ca8f8 14.0%,#1164f4 15.6%,#1062f4 18.4%,#0e5df2 21.5%,#1369f6 25.4%,#0f5ff3 28.0%,#1061f4 31.4%,#1061f4 34.1%,#1266f5 37.3%,#2296f6 38.1%,#1ab0fc 38.5%,#00e2ff 39.1%,#00eeff 43.0%,#00ff96 43.7%,#4cff38 44.3%,#4cff38 44.7%,#faf00a 45.5%,#faf00a 46.2%,#fcc305 46.6%,#f93f07 47.0%,#f61a0a 47.6%,#de1010 50.3%,#f61a0a 53.3%,#f93f07 54.0%,#fcc305 54.4%,#faf00a 54.9%,#faf00a 55.7%,#4cff38 56.5%,#4cff38 57.0%,#00ff96 57.7%,#00eeff 58.4%,#00e2ff 62.8%,#1ab0fc 63.5%,#2296f6 64.0%,#1266f5 64.8%,#1062f4 66.3%,#1267f5 69.2%,#0f5ff3 73.2%,#1165f5 76.4%,#0f5ef2 79.9%,#1267f5 82.6%,#2597f7 84.8%,#2eacf8 87.6%,#08d8fd 88.3%,#08d8fd 89.3%,#2eacf8 90.0%,#218cf6 90.4%,#1267f5 91.5%,#146bf6 94.0%,#0d59f0 97.3%,#1061f4 100.0%)"></div><div style="height:1.0px;background:linear-gradient(90deg,#1062f4 0.0%,#1062f4 0.8%,#1164f5 2.0%,#146af6 5.9%,#2ca8f8 7.4%,#2eacf8 8.6%,#07dcfd 9.3%,#07dcfd 11.7%,#2eacf8 12.5%,#2ca8f8 13.9%,#156cf6 15.5%,#0f60f3 18.8%,#146bf6 21.7%,#146bf6 24.8%,#0c57f0 27.4%,#146bf6 30.9%,#0d59f0 33.9%,#0d59f0 34.5%,#2296f6 35.4%,#1ab0fc 35.8%,#00e2ff 36.6%,#00eeff 42.3%,#00ff96 43.0%,#4cff38 43.7%,#4cff38 44.0%,#faf00a 44.8%,#faf00a 45.4%,#fcc305 45.8%,#f93f07 46.3%,#f61a0a 47.0%,#de1010 50.0%,#f61a0a 52.9%,#f93f07 53.5%,#fcc305 53.9%,#faf00a 54.3%,#faf00a 54.9%,#4cff38 55.7%,#4cff38 55.9%,#00ff96 56.5%,#00eeff 57.2%,#00e2ff 62.5%,#1ab0fc 63.1%,#2296f6 63.6%,#1267f5 64.4%,#0e5cf2 67.7%,#1368f5 71.9%,#0f5ff3 74.8%,#0d58f0 77.9%,#0d5af1 80.9%,#1061f3 83.7%,#2597f7 85.6%,#2eacf8 87.6%,#08d8fd 88.4%,#08d8fd 89.5%,#2eacf8 90.2%,#218cf6 90.6%,#1061f3 91.7%,#1061f4 94.6%,#0f5ff3 98.2%,#0e5cf1 100.0%)"></div><div style="height:1.0px;background:linear-gradient(90deg,#1062f4 0.0%,#1062f4 0.8%,#0d58f0 2.0%,#146bf6 5.2%,#2ca8f8 6.8%,#2eacf8 8.5%,#07dcfd 9.2%,#07dcfd 11.6%,#2eacf8 12.4%,#2ca8f8 13.7%,#1369f6 15.3%,#0e5bf1 19.5%,#156cf6 22.6%,#1368f5 26.3%,#1266f5 29.2%,#0f5ef2 31.7%,#1061f4 34.6%,#0e5cf2 36.5%,#2296f6 37.4%,#1ab0fc 37.8%,#00e2ff 38.5%,#00eeff 42.6%,#00ff96 43.3%,#4cff38 44.0%,#4cff38 44.1%,#faf00a 44.9%,#faf00a 45.6%,#fcc305 46.0%,#f93f07 46.4%,#f61a0a 47.1%,#de1010 50.0%,#f61a0a 52.9%,#f93f07 53.6%,#fcc305 54.0%,#faf00a 54.4%,#faf00a 55.1%,#4cff38 55.9%,#4cff38 56.0%,#00ff96 56.7%,#00eeff 57.4%,#00e2ff 61.6%,#1ab0fc 62.3%,#2296f6 62.7%,#146bf6 63.6%,#146af6 63.7%,#0d5af1 67.6%,#1062f4 72.1%,#0e5bf1 75.1%,#1369f6 79.4%,#0e5cf1 83.0%,#2597f7 85.1%,#2eacf8 87.7%,#08d8fd 88.4%,#08d8fd 89.5%,#2eacf8 90.2%,#218cf6 90.5%,#0d59f0 91.6%,#0e5df2 94.7%,#0e5cf1 98.5%,#0d5af1 100.0%)"></div><div style="height:1.0px;background:linear-gradient(90deg,#1062f4 0.0%,#1062f4 0.8%,#1061f3 2.0%,#1164f5 5.9%,#2ba6f8 7.4%,#2eacf8 8.5%,#07dcfd 9.2%,#07dcfd 11.5%,#2eacf8 12.2%,#2ba6f8 13.6%,#1062f4 15.2%,#1164f5 18.1%,#1368f5 21.0%,#1369f6 25.2%,#146bf6 28.1%,#1369f6 30.5%,#0f5ff3 33.5%,#0e5cf1 36.2%,#2296f6 37.1%,#1ab0fc 37.5%,#00e2ff 38.2%,#00eeff 42.6%,#00ff96 43.3%,#4cff38 44.0%,#4cff38 44.3%,#faf00a 45.2%,#faf00a 46.0%,#fcc305 46.4%,#f93f07 46.8%,#f61a0a 47.4%,#de1010 49.9%,#f61a0a 52.4%,#f93f07 53.0%,#fcc305 53.4%,#faf00a 53.8%,#faf00a 54.7%,#4cff38 55.5%,#4cff38 55.9%,#00ff96 56.5%,#00eeff 57.2%,#00e2ff 61.7%,#1ab0fc 62.4%,#2296f6 62.9%,#0d58f0 63.7%,#1061f3 64.0%,#1063f4 68.5%,#146bf6 72.8%,#0f5ff3 76.9%,#156cf6 79.7%,#1061f4 83.5%,#2595f7 85.5%,#2eacf8 87.8%,#08d8fd 88.5%,#08d8fd 89.4%,#2eacf8 90.1%,#208bf6 90.2%,#1164f5 91.1%,#0f5ff3 95.2%,#0f60f3 99.8%,#0f60f3 100.0%)"></div><div style="height:1.0px;background:linear-gradient(90deg,#1062f4 0.0%,#1062f4 0.8%,#1368f5 2.0%,#146bf6 5.2%,#2ba4f8 6.8%,#2eacf8 8.7%,#07dcfd 9.4%,#07dcfd 11.3%,#2eacf8 12.0%,#2ba4f8 12.8%,#0f60f3 14.0%,#1063f4 17.9%,#1062f4 22.1%,#156cf6 26.1%,#0d58f0 29.4%,#1267f5 33.8%,#156cf6 36.2%,#2296f6 37.0%,#1ab0fc 37.5%,#00e2ff 38.2%,#00eeff 42.1%,#00ff96 42.8%,#4cff38 43.5%,#4cff38 44.4%,#faf00a 45.2%,#faf00a 46.3%,#fcc305 46.7%,#f93f07 47.1%,#f61a0a 47.7%,#de1010 50.1%,#f61a0a 52.5%,#f93f07 53.0%,#fcc305 53.4%,#faf00a 53.8%,#faf00a 54.9%,#4cff38 55.7%,#4cff38 56.6%,#00ff96 57.2%,#00eeff 57.9%,#00e2ff 61.8%,#1ab0fc 62.5%,#2296f6 62.9%,#1266f5 63.7%,#0c57f0 65.9%,#0f60f3 68.4%,#1165f5 72.6%,#146af6 75.2%,#1368f5 79.0%,#0d59f0 83.4%,#2494f7 85.3%,#2eacf8 87.6%,#09d8fd 88.3%,#09d8fd 89.4%,#208af6 90.0%,#2eacf8 90.1%,#1266f5 91.0%,#0c57f0 92.7%,#146bf6 97.2%,#146bf6 100.0%,#146af6 100.0%)"></div><div style="height:1.0px;background:linear-gradient(90deg,#1266f4 0.0%,#1165f4 0.8%,#1369f6 2.0%,#1266f5 4.7%,#0d59f0 6.3%,#2aa2f7 7.7%,#2eacf8 9.0%,#08dafd 9.7%,#08dafd 11.6%,#2eacf8 12.3%,#2aa2f7 12.8%,#1266f5 14.0%,#0e5bf1 18.8%,#1265f5 22.3%,#0f60f3 26.0%,#1061f3 30.0%,#146cf6 33.8%,#0e5df2 36.5%,#2296f6 37.4%,#1ab0fc 37.8%,#00e2ff 38.5%,#00eeff 41.8%,#00ff96 42.5%,#4cff38 43.2%,#4cff38 44.6%,#faf00a 45.4%,#faf00a 46.6%,#fcc305 47.0%,#f93f07 47.5%,#f61a0a 48.0%,#de1010 50.2%,#f61a0a 52.4%,#f93f07 52.8%,#fcc305 53.3%,#faf00a 53.7%,#faf00a 54.8%,#4cff38 55.6%,#4cff38 57.0%,#00ff96 57.7%,#00eeff 58.3%,#00e2ff 61.5%,#1ab0fc 62.2%,#2296f6 62.7%,#1267f5 63.5%,#0d5af1 64.9%,#0d5af1 67.5%,#146af6 72.1%,#1368f5 75.1%,#1267f5 78.6%,#0e5bf1 84.1%,#2392f7 85.9%,#2eacf8 87.8%,#09d6fd 88.5%,#09d6fd 89.5%,#2da9f8 90.2%,#2088f6 90.2%,#146bf6 91.2%,#146af6 94.2%,#1267f5 96.9%,#1164f4 100.0%)"></div><div style="height:1.0px;background:linear-gradient(90deg,#2088f6 0.0%,#1b7df5 0.8%,#1368f5 2.0%,#146af6 6.5%,#279af7 7.9%,#2da9f8 9.2%,#0ad3fc 9.9%,#0ad3fc 11.6%,#279af7 12.2%,#2da9f8 12.3%,#0d59f0 13.2%,#1265f5 17.6%,#1063f4 20.2%,#1165f5 23.4%,#0f60f3 27.8%,#146af6 31.2%,#1164f4 35.5%,#1061f3 37.6%,#2296f6 38.4%,#1ab0fc 38.9%,#00e2ff 39.6%,#00eeff 40.8%,#00ff96 41.5%,#4cff38 42.2%,#4cff38 44.4%,#faf00a 45.2%,#faf00a 47.3%,#fcc305 47.7%,#f93f07 48.2%,#f61a0a 48.5%,#de1010 50.1%,#f61a0a 51.6%,#f93f07 51.9%,#fcc305 52.4%,#faf00a 52.7%,#faf00a 54.7%,#4cff38 55.5%,#4cff38 57.5%,#00ff96 58.2%,#00eeff 58.8%,#00e2ff 60.0%,#1ab0fc 60.7%,#2296f6 61.1%,#1267f5 61.9%,#0c57f0 63.5%,#0e5bf1 67.5%,#0d5af1 70.4%,#1062f4 73.3%,#1061f3 76.4%,#1061f4 79.0%,#0e5cf1 85.7%,#218cf6 87.0%,#2ba5f8 87.9%,#0ccffc 88.6%,#0ccffc 89.4%,#2aa1f7 90.0%,#1e84f6 90.0%,#0e5cf2 90.9%,#1061f4 96.4%,#146cf6 99.6%,#1063f4 100.0%)"></div><div style="height:1.0px;background:linear-gradient(90deg,#1d82f6 0.0%,#1979f5 0.8%,#1369f6 2.0%,#1165f5 5.5%,#0e5bf1 6.8%,#2596f7 8.1%,#2ba4f8 9.4%,#0ccffc 10.0%,#0ccffc 11.4%,#2ba4f8 12.0%,#2596f7 12.4%,#1063f4 13.5%,#0f5ef2 16.3%,#0f60f3 20.6%,#1369f6 24.2%,#1368f5 28.0%,#1165f5 30.8%,#156cf6 33.2%,#1368f5 36.7%,#1164f4 38.1%,#2296f6 39.0%,#1ab0fc 39.5%,#00e2ff 40.2%,#00eeff 40.6%,#00ff96 41.3%,#4cff38 42.0%,#4cff38 44.7%,#faf00a 45.5%,#faf00a 47.6%,#fcc305 48.0%,#f93f07 48.5%,#f61a0a 48.7%,#de1010 50.0%,#f61a0a 51.1%,#f93f07 51.3%,#fcc305 51.7%,#faf00a 52.1%,#faf00a 54.0%,#4cff38 54.8%,#4cff38 57.1%,#00ff96 57.8%,#00eeff 58.4%,#00e2ff 58.8%,#1ab0fc 59.4%,#2296f6 59.9%,#1267f5 60.7%,#146bf6 62.4%,#0e5cf2 66.1%,#1163f4 69.2%,#0e5df2 73.7%,#0e5bf1 77.4%,#1163f4 80.0%,#0d58f0 85.6%,#2089f6 87.0%,#29a1f7 87.9%,#0ecbfb 88.6%,#0ecbfb 89.5%,#1d81f6 90.2%,#289df7 90.2%,#1062f4 91.1%,#1164f4 92.6%,#0d5af1 96.2%,#0e5df2 100.0%)"></div><div style="height:1.0px;background:linear-gradient(90deg,#1a7bf5 0.0%,#1773f5 0.8%,#1164f5 2.0%,#156cf6 4.9%,#0f60f3 8.4%,#279cf7 9.3%,#218df6 9.3%,#0fc7fb 9.9%,#0fc7fb 11.3%,#218df6 11.5%,#279cf7 12.0%,#1368f5 12.2%,#0f5ef2 16.0%,#1266f5 19.1%,#0d59f0 22.5%,#1164f5 25.1%,#0f5ef2 28.0%,#0f5ef3 32.5%,#0d5af1 36.5%,#1369f6 39.8%,#2296f6 40.7%,#1ab0fc 41.1%,#00e2ff 41.8%,#00eeff 42.0%,#00ff96 42.7%,#4cff38 43.4%,#4cff38 46.5%,#faf00a 47.3%,#faf00a 48.6%,#fcc305 49.0%,#f93f07 49.4%,#f61a0a 49.5%,#de1010 50.0%,#f61a0a 50.5%,#f93f07 50.6%,#fcc305 51.0%,#faf00a 51.3%,#faf00a 52.6%,#4cff38 53.4%,#4cff38 56.4%,#00ff96 57.0%,#00eeff 57.7%,#00e2ff 57.9%,#1ab0fc 58.6%,#2296f6 59.0%,#1061f4 59.8%,#0e5bf1 63.7%,#0d5af1 67.4%,#0e5bf1 70.2%,#146bf6 74.5%,#0e5cf2 77.5%,#0f5ef2 80.9%,#1267f5 86.6%,#1d82f6 87.6%,#2698f7 87.8%,#11c3fb 88.5%,#11c3fb 89.3%,#1a7cf5 89.6%,#2494f7 90.0%,#1267f5 90.4%,#1267f5 92.9%,#1062f4 97.3%,#1165f5 100.0%)"></div><div style="height:1.0px;background:linear-gradient(90deg,#1875f5 0.0%,#1670f5 0.8%,#0d5af1 2.0%,#1062f4 5.2%,#0e5bf1 6.9%,#2493f7 8.2%,#2aa2f7 9.6%,#0dcdfc 10.2%,#0dcdfc 11.5%,#2493f7 11.9%,#2aa2f7 12.1%,#146bf6 12.7%,#0e5cf1 15.9%,#0d59f0 18.5%,#0d59f0 22.3%,#0d5af0 25.4%,#0c57f0 29.6%,#0e5cf2 32.5%,#1267f5 36.1%,#1063f4 38.5%,#2296f6 39.4%,#1ab0fc 39.9%,#00e2ff 40.6%,#00eeff 41.1%,#00ff96 41.8%,#4cff38 42.5%,#4cff38 45.2%,#faf00a 46.0%,#faf00a 47.8%,#fcc305 48.3%,#f93f07 48.7%,#f61a0a 48.9%,#de1010 50.0%,#f61a0a 50.9%,#f93f07 51.1%,#fcc305 51.5%,#faf00a 51.9%,#faf00a 53.5%,#4cff38 54.3%,#4cff38 56.7%,#00ff96 57.3%,#00eeff 57.9%,#00e2ff 58.4%,#1ab0fc 59.0%,#2296f6 59.5%,#0d5af1 60.2%,#0e5cf2 64.3%,#0d59f0 68.7%,#0f5ef2 73.0%,#146bf6 75.7%,#0d59f0 78.9%,#1061f4 86.1%,#1f87f6 87.3%,#289ef7 87.8%,#0ec9fb 88.5%,#0ec9fb 89.4%,#1c80f6 89.6%,#279bf7 90.1%,#1265f5 90.4%,#0e5cf1 92.9%,#146af6 96.0%,#1163f4 100.0%)"></div><div style="height:1.0px;background:linear-gradient(90deg,#2089f6 0.0%,#1b7df5 0.8%,#0f5ef2 2.0%,#146bf6 5.8%,#289df7 7.4%,#2eabf8 9.2%,#09d5fc 9.9%,#09d5fc 12.0%,#289df7 12.4%,#2eabf8 12.7%,#0f5ff3 13.4%,#1265f5 19.5%,#0c57f0 23.5%,#0f5ef2 27.9%,#0e5cf1 31.3%,#0e5bf1 35.2%,#1062f4 38.0%,#2296f6 38.9%,#1ab0fc 39.4%,#00e2ff 40.1%,#00eeff 40.6%,#00ff96 41.3%,#4cff38 42.0%,#4cff38 44.2%,#faf00a 45.1%,#faf00a 47.0%,#fcc305 47.4%,#f93f07 47.9%,#f61a0a 48.2%,#de1010 50.1%,#f61a0a 51.8%,#f93f07 52.1%,#fcc305 52.6%,#faf00a 52.9%,#faf00a 54.7%,#4cff38 55.5%,#4cff38 57.6%,#00ff96 58.2%,#00eeff 58.9%,#00e2ff 59.4%,#1ab0fc 60.0%,#2296f6 60.5%,#0f5ef3 61.3%,#1368f5 64.9%,#1061f4 67.7%,#0d59f0 72.2%,#0f60f3 75.2%,#1368f5 78.4%,#0d59f0 84.5%,#228ef6 86.2%,#2ca8f8 88.1%,#0bd1fc 88.7%,#0bd1fc 89.5%,#1e85f6 90.1%,#2ba4f8 90.1%,#156cf6 91.0%,#146bf6 94.1%,#0d59f0 96.9%,#1267f5 99.4%,#1062f4 100.0%)"></div><div style="height:1.0px;background:linear-gradient(90deg,#1b7df5 0.0%,#1875f5 0.8%,#146bf6 2.0%,#1061f4 5.8%,#289ef7 7.4%,#2eacf8 9.4%,#09d6fd 10.0%,#09d6fd 11.6%,#2eacf8 12.3%,#289ef7 13.1%,#0e5cf2 14.3%,#1165f5 20.8%,#1369f6 25.3%,#0e5bf1 28.0%,#1266f5 30.8%,#1265f5 34.5%,#0f60f3 37.9%,#2296f6 38.7%,#1ab0fc 39.2%,#00e2ff 39.8%,#00eeff 42.1%,#00ff96 42.7%,#4cff38 43.4%,#4cff38 44.7%,#faf00a 45.5%,#faf00a 47.1%,#fcc305 47.5%,#f93f07 47.9%,#f61a0a 48.3%,#de1010 50.1%,#f61a0a 52.0%,#f93f07 52.4%,#fcc305 52.9%,#faf00a 53.3%,#faf00a 55.1%,#4cff38 55.9%,#4cff38 57.4%,#00ff96 58.1%,#00eeff 58.8%,#00e2ff 61.3%,#1ab0fc 62.0%,#2296f6 62.4%,#146af6 63.2%,#1165f5 63.3%,#1061f3 65.9%,#0d58f0 69.5%,#0d5af1 72.3%,#0f60f3 75.4%,#0d58f0 79.3%,#0d58f0 84.3%,#228ff6 86.1%,#2da9f8 87.9%,#0bd2fc 88.6%,#0bd2fc 89.5%,#1f86f6 90.0%,#2ba5f8 90.2%,#0d5af1 90.9%,#0e5df2 94.8%,#0c57f0 98.8%,#0f5ef2 100.0%)"></div><div style="height:1.0px;background:linear-gradient(90deg,#136af4 0.0%,#1268f4 0.8%,#1368f5 2.0%,#146cf6 5.5%,#2ba5f8 7.2%,#2eacf8 9.2%,#07dcfd 9.9%,#07dcfd 11.9%,#2eacf8 12.7%,#2ba5f8 13.4%,#0d5af0 14.6%,#0d5af1 19.5%,#0d5af1 23.9%,#0d58f0 28.0%,#156cf6 30.7%,#1266f5 34.3%,#0f60f3 36.3%,#2296f6 37.2%,#1ab0fc 37.6%,#00e2ff 38.3%,#00eeff 40.7%,#00ff96 41.4%,#4cff38 42.1%,#4cff38 43.7%,#faf00a 44.5%,#faf00a 45.9%,#fcc305 46.3%,#f93f07 46.8%,#f61a0a 47.4%,#de1010 50.0%,#f61a0a 52.4%,#f93f07 52.9%,#fcc305 53.3%,#faf00a 53.7%,#faf00a 55.0%,#4cff38 55.8%,#4cff38 57.2%,#00ff96 57.9%,#00eeff 58.5%,#00e2ff 60.7%,#1ab0fc 61.4%,#2296f6 61.8%,#0f60f3 62.6%,#146af6 64.2%,#1062f4 67.0%,#1165f5 71.5%,#0e5cf1 75.2%,#156cf6 79.3%,#0f5ef2 83.6%,#2595f7 85.5%,#2eacf8 88.0%,#08d8fd 88.6%,#08d8fd 89.5%,#2eacf8 90.1%,#208af6 90.5%,#1164f4 91.6%,#0d58f0 93.0%,#1164f4 97.5%,#0f5ff3 100.0%)"></div><div style="height:1.0px;background:linear-gradient(90deg,#1774f5 0.0%,#156ff5 0.8%,#156cf6 2.0%,#1267f5 2.5%,#2ca8f8 5.0%,#2eacf8 9.1%,#07dcfd 9.8%,#07dcfd 12.0%,#2eacf8 12.7%,#2ca8f8 13.1%,#0e5bf1 14.3%,#146af6 21.1%,#0e5df2 25.3%,#1267f5 28.4%,#0d59f0 32.4%,#0e5df2 36.0%,#0e5df2 36.1%,#2296f6 36.8%,#1ab0fc 37.3%,#00e2ff 38.0%,#00eeff 41.4%,#00ff96 42.2%,#4cff38 42.9%,#4cff38 44.0%,#faf00a 44.9%,#faf00a 45.1%,#fcc305 45.5%,#f93f07 45.9%,#f61a0a 46.7%,#de1010 50.0%,#f61a0a 53.2%,#f93f07 53.9%,#fcc305 54.3%,#faf00a 54.7%,#faf00a 54.9%,#4cff38 55.7%,#4cff38 56.8%,#00ff96 57.5%,#00eeff 58.1%,#00e2ff 61.4%,#1ab0fc 62.0%,#2296f6 62.5%,#1368f5 63.3%,#0f5ff3 65.5%,#1063f4 68.0%,#146cf6 72.4%,#1267f5 76.1%,#0f60f3 79.7%,#1164f5 82.9%,#2597f7 85.1%,#2eacf8 87.8%,#08d8fd 88.5%,#08d8fd 89.6%,#2eacf8 90.3%,#218cf6 90.5%,#0e5cf2 91.6%,#1164f4 96.3%,#0d59f0 100.0%,#0f5ff3 100.0%)"></div><div style="height:1.0px;background:linear-gradient(90deg,#2699f7 0.0%,#2089f6 0.8%,#0e5bf1 2.0%,#0f5ef2 3.6%,#2ca8f8 5.9%,#2eacf8 9.2%,#07dcfd 10.0%,#07dcfd 12.5%,#2eacf8 13.3%,#2ca8f8 13.5%,#0f5ff3 14.7%,#1061f3 21.5%,#1164f4 25.8%,#1368f5 29.3%,#1164f5 32.7%,#0e5df2 35.3%,#1163f4 36.8%,#2296f6 37.6%,#1ab0fc 38.0%,#00e2ff 38.7%,#00eeff 42.8%,#00ff96 43.4%,#4cff38 44.1%,#4cff38 44.4%,#faf00a 45.2%,#faf00a 46.0%,#fcc305 46.4%,#f93f07 46.8%,#f61a0a 47.4%,#de1010 50.2%,#f61a0a 53.3%,#f93f07 54.0%,#fcc305 54.5%,#faf00a 54.9%,#faf00a 55.8%,#4cff38 56.7%,#4cff38 57.1%,#00ff96 57.8%,#00eeff 58.5%,#00e2ff 63.1%,#1ab0fc 63.8%,#2296f6 64.3%,#146cf6 65.1%,#146cf6 67.3%,#0e5df2 71.4%,#1266f5 74.2%,#0f60f3 77.7%,#1266f5 81.3%,#1267f5 83.7%,#2597f7 85.6%,#2eacf8 87.8%,#08d8fd 88.5%,#08d8fd 89.6%,#2eacf8 90.3%,#218cf6 90.4%,#136af6 91.4%,#156cf6 95.1%,#156cf6 99.2%,#1164f4 100.0%)"></div><div style="height:1.0px;background:linear-gradient(90deg,#2697f7 0.0%,#1f87f6 0.8%,#156cf6 2.0%,#1267f5 5.1%,#2ca7f8 6.9%,#2eacf8 9.0%,#07dcfd 9.8%,#07dcfd 12.1%,#2eacf8 12.9%,#2ca7f8 13.2%,#0d58f0 14.5%,#1062f4 19.7%,#146bf6 22.6%,#1266f5 26.3%,#1267f5 30.3%,#1165f5 34.1%,#1165f5 36.9%,#2296f6 37.8%,#1ab0fc 38.2%,#00e2ff 38.9%,#00eeff 42.3%,#00ff96 43.0%,#4cff38 43.7%,#4cff38 44.0%,#faf00a 44.8%,#faf00a 46.0%,#fcc305 46.4%,#f93f07 46.8%,#f61a0a 47.4%,#de1010 50.0%,#f61a0a 52.6%,#f93f07 53.2%,#fcc305 53.7%,#faf00a 54.1%,#faf00a 55.4%,#4cff38 56.2%,#4cff38 56.5%,#00ff96 57.2%,#00eeff 57.9%,#00e2ff 61.5%,#1ab0fc 62.2%,#2296f6 62.6%,#0e5df2 63.5%,#1368f5 65.8%,#0f5ff3 70.2%,#1369f6 74.0%,#1062f4 78.2%,#1164f4 83.2%,#2596f7 85.3%,#2eacf8 87.8%,#08d8fd 88.5%,#08d8fd 89.5%,#2eacf8 90.2%,#218bf6 90.4%,#1061f4 91.5%,#1164f4 92.9%,#0d59f0 96.2%,#1368f5 100.0%)"></div><div style="height:1.0px;background:linear-gradient(90deg,#2390f7 0.0%,#1d82f6 0.8%,#146bf6 2.0%,#0d5af1 5.2%,#2ca7f8 7.0%,#2eacf8 9.2%,#07dcfd 9.9%,#07dcfd 12.1%,#2eacf8 12.9%,#2ca7f8 13.0%,#1267f5 14.2%,#1368f5 20.9%,#1369f6 25.3%,#0e5df2 28.8%,#1267f5 32.1%,#0d5af1 35.1%,#0f60f3 37.0%,#2296f6 37.8%,#1ab0fc 38.2%,#00e2ff 38.9%,#00eeff 43.0%,#00ff96 43.7%,#4cff38 44.3%,#4cff38 44.6%,#faf00a 45.4%,#faf00a 46.4%,#fcc305 46.8%,#f93f07 47.2%,#f61a0a 47.8%,#de1010 50.3%,#f61a0a 53.0%,#f93f07 53.6%,#fcc305 54.0%,#faf00a 54.4%,#faf00a 55.6%,#4cff38 56.5%,#4cff38 56.7%,#00ff96 57.4%,#00eeff 58.2%,#00e2ff 62.7%,#1ab0fc 63.4%,#2296f6 63.8%,#1266f5 64.7%,#0e5cf2 65.1%,#1063f4 67.7%,#0f5ef2 72.0%,#1063f4 74.6%,#1165f5 78.5%,#0d59f0 83.7%,#2595f7 85.6%,#2eacf8 87.9%,#08d8fd 88.6%,#08d8fd 89.7%,#2eacf8 90.5%,#218bf6 90.8%,#146af6 91.9%,#146af6 93.1%,#1061f3 97.5%,#1369f6 100.0%)"></div><div style="height:1.0px;background:linear-gradient(90deg,#218bf6 0.0%,#1c7ff6 0.8%,#0d58f0 2.0%,#0e5cf2 5.8%,#2aa3f8 7.5%,#2eacf8 9.7%,#07dbfd 10.4%,#07dbfd 12.3%,#2eacf8 12.9%,#2aa3f8 13.5%,#0d5af1 14.7%,#0e5bf1 19.1%,#1063f4 22.5%,#0f5ef2 27.0%,#1266f5 31.1%,#1267f5 34.5%,#0d5af1 36.8%,#2296f6 37.6%,#1ab0fc 38.1%,#00e2ff 38.8%,#00eeff 42.0%,#00ff96 42.7%,#4cff38 43.4%,#4cff38 44.6%,#faf00a 45.5%,#faf00a 46.7%,#fcc305 47.1%,#f93f07 47.5%,#f61a0a 48.0%,#de1010 50.3%,#f61a0a 52.6%,#f93f07 53.1%,#fcc305 53.6%,#faf00a 54.0%,#faf00a 55.2%,#4cff38 56.0%,#4cff38 57.2%,#00ff96 57.9%,#00eeff 58.6%,#00e2ff 61.8%,#1ab0fc 62.5%,#2296f6 62.9%,#0f5ef2 63.7%,#0d58f0 64.0%,#0f5ef2 66.5%,#156cf6 70.5%,#146cf6 75.0%,#0e5df2 78.7%,#0d5af0 84.8%,#2493f7 86.4%,#2eacf8 87.8%,#09d7fd 88.5%,#09d7fd 89.5%,#2dabf8 90.2%,#2089f6 90.3%,#146af6 91.3%,#1369f6 92.9%,#0e5cf1 96.9%,#0f5ef2 99.6%,#0e5cf2 100.0%)"></div><div style="height:1.0px;background:linear-gradient(90deg,#1876f5 0.0%,#1670f5 0.8%,#1266f5 2.0%,#0f5ef2 6.7%,#289df7 8.2%,#2eacf8 9.7%,#09d6fd 10.4%,#09d6fd 12.1%,#2eacf8 12.7%,#289df7 13.4%,#0e5bf1 14.6%,#0e5df2 18.7%,#0f5ff3 21.3%,#1369f6 25.5%,#0e5bf1 29.5%,#0e5cf2 32.7%,#146cf6 36.6%,#2296f6 37.5%,#1ab0fc 37.9%,#00e2ff 38.6%,#00eeff 42.0%,#00ff96 42.7%,#4cff38 43.4%,#4cff38 44.4%,#faf00a 45.3%,#faf00a 47.0%,#fcc305 47.5%,#f93f07 47.9%,#f61a0a 48.3%,#de1010 50.1%,#f61a0a 51.9%,#f93f07 52.2%,#fcc305 52.7%,#faf00a 53.0%,#faf00a 54.7%,#4cff38 55.5%,#4cff38 56.4%,#00ff96 57.1%,#00eeff 57.7%,#00e2ff 60.9%,#1ab0fc 61.6%,#2296f6 62.0%,#1267f5 62.8%,#146af6 66.0%,#0e5df2 69.3%,#1165f5 72.5%,#1165f5 76.2%,#1368f5 79.1%,#1063f4 84.6%,#228ef6 86.3%,#2ca8f8 88.1%,#0bd1fc 88.8%,#0bd1fc 89.5%,#2ba4f8 90.2%,#1e85f6 90.2%,#0d58f0 91.1%,#1368f5 94.5%,#1061f3 97.2%,#1369f6 100.0%)"></div><div style="height:1.0px;background:linear-gradient(90deg,#1b7ef6 0.0%,#1876f5 0.8%,#0f5ef2 2.0%,#0f5ff3 4.9%,#0f60f3 7.3%,#2699f7 8.6%,#2ca8f8 9.9%,#0bd2fc 10.5%,#0bd2fc 12.0%,#2ca8f8 12.6%,#2699f7 13.2%,#1164f4 14.3%,#0e5bf1 19.3%,#1368f5 22.9%,#0f60f3 27.3%,#1163f4 30.1%,#1063f4 33.2%,#0f60f3 37.1%,#1267f5 37.7%,#2296f6 38.5%,#1ab0fc 39.0%,#00e2ff 39.7%,#00eeff 41.5%,#00ff96 42.2%,#4cff38 42.9%,#4cff38 44.6%,#faf00a 45.5%,#faf00a 47.5%,#fcc305 47.9%,#f93f07 48.4%,#f61a0a 48.7%,#de1010 50.2%,#f61a0a 51.7%,#f93f07 52.0%,#fcc305 52.4%,#faf00a 52.8%,#faf00a 54.7%,#4cff38 55.5%,#4cff38 57.1%,#00ff96 57.8%,#00eeff 58.4%,#00e2ff 60.1%,#1ab0fc 60.8%,#2296f6 61.2%,#146bf6 62.0%,#1061f4 65.2%,#1163f4 68.6%,#146bf6 72.5%,#1267f5 76.9%,#1266f5 80.1%,#1266f5 84.7%,#218bf6 86.3%,#2ba4f8 88.0%,#0ccefc 88.6%,#0ccefc 89.5%,#1d83f6 89.9%,#29a1f7 90.1%,#0e5df2 90.7%,#156cf6 95.6%,#1061f4 98.6%,#1266f5 100.0%)"></div><div style="height:1.0px;background:linear-gradient(90deg,#1f88f6 0.0%,#1b7cf5 0.8%,#146bf6 2.0%,#146cf6 5.3%,#0e5df2 7.5%,#279af7 8.8%,#2da8f8 9.9%,#0ad3fc 10.6%,#0ad3fc 12.1%,#2da8f8 12.8%,#279af7 13.5%,#0d5af1 14.6%,#1165f5 19.0%,#0d58f0 23.1%,#1062f4 27.4%,#1165f5 31.2%,#0e5cf2 35.6%,#1368f5 38.5%,#0d58f0 39.6%,#2296f6 40.4%,#1ab0fc 40.8%,#00e2ff 41.5%,#00eeff 42.5%,#00ff96 43.1%,#4cff38 43.8%,#4cff38 45.1%,#faf00a 45.9%,#faf00a 47.6%,#fcc305 48.0%,#f93f07 48.4%,#f61a0a 48.7%,#de1010 50.1%,#f61a0a 51.7%,#f93f07 52.1%,#fcc305 52.5%,#faf00a 52.9%,#faf00a 54.9%,#4cff38 55.7%,#4cff38 57.2%,#00ff96 57.9%,#00eeff 58.7%,#00e2ff 59.8%,#1ab0fc 60.5%,#2296f6 61.0%,#0d59f0 61.9%,#0e5cf2 62.8%,#1164f4 66.8%,#0f60f3 69.4%,#0f5ef2 73.5%,#0f5ef2 76.2%,#0f5ff3 79.1%,#0f5ef2 85.9%,#218cf6 87.2%,#2ba5f8 87.9%,#0ccefc 88.6%,#0ccefc 89.6%,#1e83f6 90.0%,#2aa1f7 90.3%,#1266f5 90.9%,#0d59f0 93.1%,#1061f4 97.2%,#1062f4 99.7%,#1369f6 100.0%)"></div><div style="height:1.0px;background:linear-gradient(90deg,#218df6 0.0%,#1c80f6 0.8%,#156cf6 2.0%,#1368f5 7.0%,#289df7 8.4%,#2eacf8 9.7%,#09d6fd 10.4%,#09d6fd 12.5%,#2eacf8 13.2%,#289df7 13.8%,#1062f4 15.1%,#146af6 18.0%,#0f5ef2 20.8%,#0d59f0 25.2%,#146bf6 28.3%,#1368f5 32.8%,#1164f5 35.6%,#0c57f0 38.0%,#2296f6 38.8%,#1ab0fc 39.2%,#00e2ff 39.9%,#00eeff 42.2%,#00ff96 42.8%,#4cff38 43.5%,#4cff38 45.1%,#faf00a 45.9%,#faf00a 47.4%,#fcc305 47.7%,#f93f07 48.2%,#f61a0a 48.5%,#de1010 50.3%,#f61a0a 52.2%,#f93f07 52.6%,#fcc305 53.0%,#faf00a 53.4%,#faf00a 54.9%,#4cff38 55.8%,#4cff38 57.6%,#00ff96 58.3%,#00eeff 59.0%,#00e2ff 61.4%,#1ab0fc 62.1%,#2296f6 62.6%,#0e5df2 63.5%,#0e5df2 64.9%,#1062f4 68.4%,#0d59f0 72.1%,#1368f5 76.2%,#1369f6 79.1%,#156cf6 85.2%,#228ef6 86.7%,#2ca8f8 88.1%,#0bd2fc 88.8%,#0bd2fc 89.6%,#1e86f6 90.1%,#2ba5f8 90.3%,#1368f5 91.0%,#0d5af1 95.3%,#1062f4 99.4%,#1063f4 100.0%)"></div><div style="height:1.0px;background:linear-gradient(90deg,#2493f7 0.0%,#1e84f6 0.8%,#0f5ef2 2.0%,#1369f6 7.8%,#29a0f7 9.1%,#2eacf8 10.0%,#08d8fd 10.7%,#08d8fd 12.5%,#2eacf8 13.2%,#29a0f7 14.5%,#1063f4 16.0%,#1369f6 19.7%,#1061f3 24.0%,#0d59f0 28.1%,#1368f5 32.1%,#0f5ff3 35.9%,#0f5ef2 38.0%,#2296f6 38.7%,#1ab0fc 39.2%,#00e2ff 39.8%,#00eeff 42.0%,#00ff96 42.6%,#4cff38 43.3%,#4cff38 44.7%,#faf00a 45.5%,#faf00a 47.1%,#fcc305 47.5%,#f93f07 47.9%,#f61a0a 48.3%,#de1010 50.2%,#f61a0a 52.3%,#f93f07 52.8%,#fcc305 53.2%,#faf00a 53.6%,#faf00a 55.4%,#4cff38 56.2%,#4cff38 57.8%,#00ff96 58.5%,#00eeff 59.2%,#00e2ff 61.6%,#1ab0fc 62.3%,#2296f6 62.8%,#0d5af1 63.6%,#1368f5 65.1%,#0d58f0 67.9%,#0f5ff3 70.4%,#0d5af1 73.3%,#1265f5 76.5%,#0d5af1 80.4%,#1062f4 83.9%,#2390f6 85.8%,#2dabf8 87.8%,#0ad4fc 88.5%,#0ad4fc 89.5%,#2ca7f8 90.2%,#1f87f6 90.4%,#0f60f3 91.4%,#1062f4 94.5%,#0d5af0 98.0%,#0e5cf2 100.0%)"></div><div style="height:1.0px;background:linear-gradient(90deg,#279bf7 0.0%,#208af6 0.8%,#1368f5 2.0%,#1266f5 5.5%,#1266f5 7.7%,#2aa3f8 9.0%,#2eacf8 9.9%,#07dbfd 10.6%,#07dbfd 12.5%,#2eacf8 13.2%,#2aa3f8 14.3%,#146bf6 15.7%,#0e5df2 20.1%,#0e5cf2 22.7%,#156cf6 26.9%,#146bf6 31.0%,#0d5af1 34.1%,#0f5ef2 37.7%,#2296f6 38.5%,#1ab0fc 39.0%,#00e2ff 39.6%,#00eeff 41.9%,#00ff96 42.6%,#4cff38 43.2%,#4cff38 44.7%,#faf00a 45.5%,#faf00a 46.5%,#fcc305 46.9%,#f93f07 47.3%,#f61a0a 47.8%,#de1010 50.0%,#f61a0a 52.5%,#f93f07 53.0%,#fcc305 53.5%,#faf00a 53.9%,#faf00a 55.0%,#4cff38 55.9%,#4cff38 57.5%,#00ff96 58.2%,#00eeff 59.0%,#00e2ff 61.5%,#1ab0fc 62.2%,#2296f6 62.6%,#1062f4 63.5%,#0d59f0 64.5%,#146bf6 67.5%,#0f60f3 71.7%,#0f5ef2 75.3%,#1164f4 79.8%,#146af6 83.8%,#2493f7 85.7%,#2eacf8 88.1%,#09d7fd 88.8%,#09d7fd 89.6%,#2dabf8 90.2%,#2089f6 90.5%,#146bf6 91.6%,#1164f4 92.7%,#146bf6 95.3%,#156cf6 98.0%,#146bf6 100.0%)"></div><div style="height:1.0px;background:linear-gradient(90deg,#2ba5f8 0.0%,#2391f7 0.8%,#1061f4 2.0%,#146af6 4.9%,#1164f5 7.9%,#2ba3f8 9.2%,#2eacf8 9.8%,#07dcfd 10.5%,#07dcfd 12.5%,#2eacf8 13.2%,#2ba3f8 15.0%,#1061f4 16.7%,#1266f5 21.2%,#146bf6 24.3%,#0d58f0 28.2%,#136af6 30.8%,#0d59f0 33.4%,#0d58f0 36.0%,#2296f6 36.8%,#1ab0fc 37.3%,#00e2ff 38.0%,#00eeff 41.3%,#00ff96 42.0%,#4cff38 42.7%,#4cff38 44.2%,#faf00a 45.0%,#faf00a 46.3%,#fcc305 46.7%,#f93f07 47.1%,#f61a0a 47.6%,#de1010 49.9%,#f61a0a 52.3%,#f93f07 52.8%,#fcc305 53.2%,#faf00a 53.6%,#faf00a 54.9%,#4cff38 55.7%,#4cff38 57.2%,#00ff96 57.8%,#00eeff 58.5%,#00e2ff 61.9%,#1ab0fc 62.6%,#2296f6 63.0%,#0e5df2 63.9%,#1165f5 66.4%,#1266f5 70.7%,#0e5cf2 74.7%,#1163f4 77.4%,#0c57f0 80.7%,#0d5af1 84.3%,#2493f7 86.1%,#2eacf8 88.1%,#09d7fd 88.7%,#09d7fd 89.6%,#2eabf8 90.3%,#2089f6 90.5%,#0f5ff3 91.5%,#0e5cf1 94.6%,#0e5df2 97.2%,#1061f4 100.0%)"></div><div style="height:1.0px;background:linear-gradient(90deg,#2697f7 0.0%,#1f87f6 0.8%,#156cf6 2.0%,#146bf6 7.8%,#2aa3f8 9.0%,#2eacf8 9.6%,#07dbfd 10.3%,#07dbfd 12.2%,#2eacf8 12.9%,#2aa3f8 14.4%,#1265f5 15.9%,#0d59f0 20.3%,#0d5af1 24.6%,#1369f6 27.2%,#0f60f3 31.5%,#1267f5 35.6%,#1267f5 36.2%,#2296f6 37.1%,#1ab0fc 37.5%,#00e2ff 38.2%,#00eeff 41.7%,#00ff96 42.3%,#4cff38 43.0%,#4cff38 44.1%,#faf00a 45.0%,#faf00a 46.5%,#fcc305 46.9%,#f93f07 47.3%,#f61a0a 47.8%,#de1010 50.1%,#f61a0a 52.4%,#f93f07 53.0%,#fcc305 53.4%,#faf00a 53.8%,#faf00a 55.4%,#4cff38 56.2%,#4cff38 57.4%,#00ff96 58.0%,#00eeff 58.7%,#00e2ff 62.3%,#1ab0fc 63.0%,#2296f6 63.4%,#0f5ff3 64.3%,#1368f5 66.1%,#146cf6 69.0%,#0e5df2 73.2%,#0f5ff3 75.7%,#146af6 79.3%,#1368f5 84.1%,#2493f7 85.9%,#2eacf8 87.9%,#09d7fd 88.7%,#09d7fd 89.7%,#2dabf8 90.4%,#2089f6 90.7%,#0d5af1 91.7%,#146bf6 92.7%,#1265f5 95.2%,#1368f5 97.7%,#1267f5 100.0%)"></div><div style="height:1.0px;background:linear-gradient(90deg,#1f88f6 0.0%,#1b7cf5 0.8%,#0f5ff3 2.0%,#1063f4 5.1%,#0f60f3 8.2%,#2ba5f8 9.3%,#2eacf8 9.4%,#07dcfd 10.2%,#07dcfd 12.4%,#2eacf8 13.1%,#2ba5f8 14.8%,#1063f4 16.5%,#0f5ef2 18.1%,#0d59f0 21.4%,#1369f6 25.7%,#0e5df2 30.0%,#146bf6 32.4%,#0e5bf1 35.2%,#1164f4 36.4%,#2296f6 37.2%,#1ab0fc 37.7%,#00e2ff 38.3%,#00eeff 41.7%,#00ff96 42.4%,#4cff38 43.1%,#4cff38 44.4%,#faf00a 45.2%,#faf00a 46.3%,#fcc305 46.7%,#f93f07 47.1%,#f61a0a 47.6%,#de1010 50.0%,#f61a0a 52.5%,#f93f07 53.1%,#fcc305 53.5%,#faf00a 53.9%,#faf00a 55.0%,#4cff38 55.9%,#4cff38 57.3%,#00ff96 58.0%,#00eeff 58.7%,#00e2ff 62.2%,#1ab0fc 62.9%,#2296f6 63.4%,#146af6 64.2%,#0f60f3 65.3%,#0e5bf1 68.7%,#1165f5 71.8%,#0d5af1 74.7%,#1267f5 78.9%,#1266f5 83.7%,#2494f7 85.6%,#2eacf8 87.8%,#08d8fd 88.5%,#08d8fd 89.5%,#2eacf8 90.3%,#208af6 90.4%,#1266f5 91.5%,#0e5df2 96.4%,#1164f4 99.0%,#0f5ef2 100.0%)"></div><div style="height:1.0px;background:linear-gradient(90deg,#208af6 0.0%,#1b7ef6 0.8%,#1367f5 2.0%,#1061f3 7.8%,#2ca8f8 9.1%,#2eacf8 9.8%,#07dcfd 10.5%,#07dcfd 12.6%,#2eacf8 13.4%,#2ca8f8 15.7%,#0e5df2 17.6%,#146bf6 19.4%,#156cf6 22.1%,#1165f5 25.0%,#1163f4 29.1%,#0e5df2 31.8%,#1368f5 35.9%,#1062f4 36.6%,#2296f6 37.4%,#1ab0fc 37.9%,#00e2ff 38.6%,#00eeff 41.0%,#00ff96 41.7%,#4cff38 42.4%,#4cff38 44.1%,#faf00a 44.9%,#faf00a 45.7%,#fcc305 46.1%,#f93f07 46.6%,#f61a0a 47.2%,#de1010 50.1%,#f61a0a 53.0%,#f93f07 53.6%,#fcc305 54.0%,#faf00a 54.4%,#faf00a 55.2%,#4cff38 56.1%,#4cff38 57.7%,#00ff96 58.4%,#00eeff 59.1%,#00e2ff 61.5%,#1ab0fc 62.2%,#2296f6 62.6%,#1164f5 63.5%,#0e5cf2 64.6%,#1164f5 67.9%,#1062f4 71.7%,#0f5ef2 75.2%,#1165f5 78.2%,#1164f5 82.7%,#2597f7 84.9%,#2eacf8 87.8%,#08d8fd 88.5%,#08d8fd 89.7%,#2eacf8 90.4%,#218cf6 90.8%,#0f60f3 92.0%,#0f5ef2 95.1%,#1368f5 98.9%,#156cf6 100.0%)"></div><div style="height:1.0px;background:linear-gradient(90deg,#1f87f6 0.0%,#1b7cf5 0.8%,#0e5cf1 2.0%,#146bf6 8.0%,#2ca8f8 9.2%,#2eacf8 9.6%,#07dcfd 10.3%,#07dcfd 12.5%,#2eacf8 13.2%,#2ca8f8 16.3%,#0f5ef2 18.4%,#0e5df2 20.2%,#1267f5 22.9%,#0f5ef2 26.3%,#0f5ef2 29.5%,#1063f4 32.7%,#146af6 36.5%,#2296f6 37.3%,#1ab0fc 37.8%,#00e2ff 38.5%,#00eeff 41.8%,#00ff96 42.5%,#4cff38 43.2%,#4cff38 43.9%,#faf00a 44.8%,#faf00a 45.1%,#fcc305 45.5%,#f93f07 45.9%,#f61a0a 46.7%,#de1010 49.9%,#f61a0a 53.1%,#f93f07 53.8%,#fcc305 54.2%,#faf00a 54.6%,#faf00a 54.9%,#4cff38 55.8%,#4cff38 56.5%,#00ff96 57.2%,#00eeff 57.9%,#00e2ff 61.1%,#1ab0fc 61.8%,#2296f6 62.3%,#0f5ef2 63.1%,#0d58f0 65.2%,#146af6 68.2%,#0f5ef3 70.6%,#0e5bf1 74.8%,#1267f5 77.3%,#0e5cf1 82.6%,#2597f7 84.8%,#2eacf8 87.7%,#08d8fd 88.5%,#08d8fd 89.6%,#2eacf8 90.4%,#218cf6 90.7%,#1061f4 91.9%,#0e5cf1 94.3%,#156cf6 97.7%,#0e5cf2 100.0%)"></div><div style="height:1.0px;background:linear-gradient(90deg,#1979f5 0.0%,#1772f5 0.8%,#1164f5 2.0%,#1367f5 8.0%,#2ca8f8 9.2%,#2eacf8 9.6%,#07dcfd 10.3%,#07dcfd 12.5%,#2eacf8 13.2%,#2ca8f8 15.4%,#0d59f0 17.2%,#1163f4 18.3%,#146af6 20.9%,#1267f5 24.6%,#1163f4 28.4%,#1164f4 31.5%,#156cf6 34.2%,#1061f4 35.8%,#2296f6 36.7%,#1ab0fc 37.1%,#00e2ff 37.8%,#00eeff 42.6%,#00ff96 43.3%,#4cff38 44.0%,#4cff38 44.5%,#faf00a 45.3%,#faf00a 46.0%,#fcc305 46.4%,#f93f07 46.9%,#f61a0a 47.5%,#de1010 50.3%,#f61a0a 53.0%,#f93f07 53.6%,#fcc305 54.1%,#faf00a 54.5%,#faf00a 55.2%,#4cff38 56.1%,#4cff38 56.5%,#00ff96 57.2%,#00eeff 57.9%,#00e2ff 62.7%,#1ab0fc 63.4%,#2296f6 63.8%,#1163f4 64.7%,#0e5bf1 66.3%,#1267f5 69.1%,#0f5ff3 71.8%,#156cf6 75.0%,#0e5cf2 77.9%,#0e5df2 80.8%,#0f5ff3 83.6%,#2597f7 85.6%,#2eacf8 87.8%,#08d8fd 88.6%,#08d8fd 89.7%,#2eacf8 90.4%,#218cf6 90.8%,#1369f6 91.9%,#1061f4 94.0%,#146bf6 96.6%,#1368f5 100.0%)"></div><div style="height:1.0px;background:linear-gradient(90deg,#1876f5 0.0%,#1670f5 0.8%,#0e5bf1 2.0%,#0f60f3 7.3%,#2ca8f8 8.6%,#2eacf8 9.2%,#07dcfd 10.0%,#07dcfd 12.5%,#2eacf8 13.3%,#2ca8f8 16.9%,#1061f3 19.2%,#0d5af1 22.3%,#1369f6 26.8%,#1267f5 31.1%,#1267f5 35.3%,#0e5df2 35.4%,#2296f6 36.2%,#1ab0fc 36.7%,#00e2ff 37.4%,#00eeff 41.2%,#00ff96 41.9%,#4cff38 42.6%,#4cff38 43.3%,#faf00a 44.1%,#faf00a 44.8%,#fcc305 45.2%,#fa5106 45.7%,#f83308 46.5%,#e3250e 50.0%,#f83308 53.1%,#fa5106 53.8%,#fcc305 54.2%,#faf00a 54.6%,#faf00a 55.2%,#4cff38 56.0%,#4cff38 56.6%,#00ff96 57.2%,#00eeff 57.9%,#00e2ff 61.2%,#1ab0fc 61.9%,#2296f6 62.3%,#1267f5 63.1%,#1062f4 67.9%,#1062f4 70.8%,#0c57f0 73.7%,#1164f5 76.3%,#0d5af1 80.0%,#0d59f0 82.2%,#2597f7 84.6%,#2eacf8 87.7%,#08d8fd 88.5%,#08d8fd 89.7%,#2eacf8 90.5%,#218cf6 90.7%,#0f60f3 91.9%,#0e5df2 95.7%,#1061f4 98.2%,#1061f4 100.0%)"></div><div style="height:1.0px;background:linear-gradient(90deg,#1062f4 0.0%,#1062f4 0.8%,#0e5cf1 2.0%,#0e5bf1 6.8%,#2ca8f8 8.3%,#2eacf8 9.4%,#07dcfd 10.2%,#07dcfd 12.5%,#2eacf8 13.3%,#2ca8f8 16.8%,#1267f5 19.1%,#1165f5 23.1%,#1163f4 27.4%,#1164f4 30.0%,#0e5cf2 34.3%,#0e5df2 35.6%,#2296f6 36.4%,#1ab0fc 36.9%,#00e2ff 37.5%,#00eeff 42.1%,#00ff96 42.7%,#4cff38 43.4%,#4cff38 44.0%,#faf00a 44.8%,#faf00a 45.3%,#fcc305 45.7%,#fb5b05 46.1%,#f94107 46.9%,#e6310c 50.1%,#f94107 53.5%,#fb5b05 54.2%,#fcc305 54.7%,#faf00a 55.1%,#faf00a 55.5%,#4cff38 56.4%,#4cff38 56.9%,#00ff96 57.6%,#00eeff 58.3%,#00e2ff 62.9%,#1ab0fc 63.6%,#2296f6 64.1%,#146af6 64.9%,#0f60f3 65.8%,#1061f4 69.0%,#0e5bf1 73.1%,#146cf6 75.9%,#0f5ef2 79.1%,#1266f5 82.4%,#2597f7 84.6%,#2eacf8 87.6%,#08d8fd 88.3%,#08d8fd 89.3%,#2eacf8 90.0%,#218cf6 90.5%,#0e5cf2 91.7%,#1368f5 93.3%,#1063f4 97.5%,#1061f4 100.0%)"></div><div style="height:1.0px;background:linear-gradient(90deg,#1062f4 0.0%,#1062f4 0.8%,#0f5ff3 2.0%,#0f5ff3 7.4%,#2ca8f8 8.6%,#2eacf8 9.0%,#07dcfd 9.8%,#07dcfd 12.4%,#2eacf8 13.2%,#2ca8f8 15.6%,#0f60f3 17.5%,#146bf6 20.0%,#146cf6 22.6%,#1165f5 26.8%,#146bf6 30.6%,#1369f6 34.3%,#1061f4 34.7%,#2296f6 35.6%,#1ab0fc 36.0%,#00e2ff 36.7%,#00eeff 41.8%,#00ff96 42.5%,#4cff38 43.2%,#4cff38 44.0%,#faf00a 44.8%,#faf00a 45.2%,#fcc305 45.6%,#fb6504 46.1%,#fa5006 46.8%,#e93d0b 50.0%,#fa5006 53.1%,#fb6504 53.8%,#fcc305 54.2%,#faf00a 54.6%,#faf00a 55.0%,#4cff38 55.8%,#4cff38 56.6%,#00ff96 57.3%,#00eeff 58.0%,#00e2ff 63.0%,#1ab0fc 63.7%,#2296f6 64.1%,#1165f5 64.9%,#1265f5 68.1%,#0d59f0 71.6%,#0d5af1 74.7%,#1368f5 77.4%,#1164f5 82.6%,#2597f7 84.7%,#2eacf8 87.5%,#08d8fd 88.3%,#08d8fd 89.3%,#2eacf8 90.0%,#218cf6 90.3%,#1165f5 91.5%,#1266f5 92.4%,#1062f4 95.0%,#1062f4 98.1%,#0f60f3 100.0%)"></div><div style="height:1.0px;background:linear-gradient(90deg,#1062f4 0.0%,#1062f4 0.8%,#0f5ef2 2.0%,#1266f5 8.2%,#2eacf8 9.2%,#2ca8f8 9.3%,#07dcfd 10.0%,#07dcfd 12.4%,#2eacf8 13.2%,#2ca8f8 16.2%,#1061f4 18.4%,#1163f4 20.8%,#0d58f0 25.4%,#0e5cf2 28.8%,#0d58f0 31.9%,#1267f5 34.4%,#2296f6 35.3%,#1ab0fc 35.8%,#00e2ff 36.5%,#00eeff 42.1%,#00ff96 42.8%,#4cff38 43.5%,#4cff38 43.9%,#faf00a 44.8%,#faf00a 45.4%,#fcc305 45.8%,#fc7003 46.2%,#fb5e05 46.9%,#ec4a09 49.9%,#fb5e05 52.7%,#fc7003 53.3%,#fcc305 53.7%,#faf00a 54.1%,#faf00a 54.6%,#4cff38 55.4%,#4cff38 55.8%,#00ff96 56.4%,#00eeff 57.1%,#00e2ff 62.2%,#1ab0fc 62.9%,#2296f6 63.3%,#0f60f3 64.1%,#1062f4 67.4%,#0f5ff3 70.8%,#1267f5 73.4%,#146af6 77.0%,#156cf6 82.7%,#2597f7 84.9%,#2eacf8 87.6%,#08d8fd 88.3%,#08d8fd 89.4%,#2eacf8 90.1%,#218cf6 90.5%,#1062f4 91.7%,#1266f5 93.6%,#1061f3 96.3%,#1165f5 100.0%)"></div><div style="height:1.0px;background:linear-gradient(90deg,#1062f4 0.0%,#1062f4 0.8%,#0f60f3 2.0%,#1062f4 7.7%,#2ca8f8 8.9%,#2eacf8 9.0%,#07dcfd 9.8%,#07dcfd 12.4%,#2eacf8 13.2%,#2ca8f8 16.7%,#1061f3 19.1%,#1266f5 20.3%,#1267f5 23.9%,#0f60f3 26.5%,#1061f4 30.8%,#0d5af0 34.2%,#1164f4 35.1%,#2296f6 35.9%,#1ab0fc 36.3%,#00e2ff 37.0%,#00eeff 42.4%,#00ff96 43.0%,#4cff38 43.7%,#4cff38 44.2%,#faf00a 45.0%,#faf00a 45.4%,#fcc305 45.8%,#fd7a02 46.2%,#fc6c03 46.9%,#ef5608 50.2%,#fc6c03 53.8%,#fd7a02 54.6%,#fcc305 55.1%,#faf00a 55.5%,#faf00a 55.9%,#4cff38 56.8%,#4cff38 57.4%,#00ff96 58.1%,#00eeff 58.8%,#00e2ff 64.7%,#1ab0fc 65.4%,#2296f6 65.9%,#0e5bf1 66.8%,#0e5cf2 67.5%,#1368f5 71.3%,#0d5af1 74.2%,#0e5cf2 77.4%,#1062f4 81.3%,#0d58f0 82.3%,#2597f7 84.6%,#2eacf8 87.7%,#08d8fd 88.4%,#08d8fd 89.4%,#2eacf8 90.1%,#218cf6 90.8%,#1164f4 92.1%,#1369f6 93.6%,#0d58f0 96.6%,#1165f5 99.7%,#1369f6 100.0%)"></div><div style="height:1.0px;background:linear-gradient(90deg,#1062f4 0.0%,#1062f4 0.8%,#1267f5 5.8%,#2ca8f8 7.4%,#2eacf8 9.2%,#07dcfd 9.9%,#07dcfd 12.1%,#2eacf8 12.8%,#2ca8f8 15.9%,#1369f6 18.0%,#0f60f3 20.3%,#1267f5 24.2%,#0d59f0 26.7%,#1062f4 31.2%,#0e5bf1 35.0%,#2296f6 35.9%,#1ab0fc 36.3%,#00e2ff 37.0%,#00eeff 41.7%,#00ff96 42.3%,#4cff38 43.0%,#4cff38 44.3%,#faf00a 45.1%,#faf00a 45.2%,#fcc305 45.6%,#fd7603 46.1%,#fc6704 46.8%,#ee5108 50.2%,#fc6704 53.5%,#fd7603 54.2%,#fcc305 54.7%,#faf00a 55.1%,#faf00a 55.2%,#4cff38 56.0%,#4cff38 57.3%,#00ff96 57.9%,#00eeff 58.6%,#00e2ff 63.2%,#1ab0fc 63.9%,#2296f6 64.3%,#0f5ef2 65.2%,#1063f4 67.7%,#0f60f3 71.0%,#1369f6 75.2%,#0f5ff3 78.9%,#146bf6 82.1%,#2597f7 84.4%,#2eacf8 87.4%,#08d8fd 88.2%,#08d8fd 89.5%,#2eacf8 90.3%,#218cf6 90.5%,#1267f5 91.6%,#0c57f0 95.5%,#156cf6 98.6%,#1265f5 100.0%)"></div><div style="height:1.0px;background:linear-gradient(90deg,#1062f4 0.0%,#1062f4 0.8%,#1061f3 2.0%,#0d59f0 6.2%,#2ca8f8 7.7%,#2eacf8 8.9%,#07dcfd 9.7%,#07dcfd 12.1%,#2eacf8 12.9%,#2ca8f8 15.5%,#1163f4 17.4%,#0f5ff3 20.8%,#0e5df2 24.7%,#0f5ff3 28.0%,#1266f5 31.0%,#0d5af1 34.6%,#1369f6 36.2%,#2296f6 37.1%,#1ab0fc 37.5%,#00e2ff 38.2%,#00eeff 41.4%,#00ff96 42.1%,#4cff38 42.8%,#4cff38 44.4%,#faf00a 45.3%,#faf00a 45.7%,#fcc305 46.1%,#fc6c03 46.6%,#fb5805 47.2%,#eb450a 50.3%,#fb5805 53.2%,#fc6c03 53.9%,#fcc305 54.3%,#faf00a 54.7%,#faf00a 55.1%,#4cff38 55.9%,#4cff38 57.4%,#00ff96 58.1%,#00eeff 58.8%,#00e2ff 61.9%,#1ab0fc 62.6%,#2296f6 63.0%,#1164f5 63.8%,#0e5cf2 66.7%,#0e5df2 70.0%,#146bf6 72.7%,#1266f5 76.0%,#1164f5 79.7%,#1369f6 82.3%,#2597f7 84.6%,#2eacf8 87.5%,#08d8fd 88.3%,#08d8fd 89.4%,#2eacf8 90.1%,#218cf6 90.4%,#1164f5 91.5%,#0f5ef2 92.8%,#0f60f3 96.4%,#156cf6 99.9%,#0f5ff3 100.0%)"></div><div style="height:1.0px;background:linear-gradient(90deg,#1369f4 0.0%,#1267f4 0.8%,#1164f4 2.0%,#1266f5 7.6%,#2ca7f8 8.9%,#2eacf8 9.6%,#07dcfd 10.3%,#07dcfd 12.2%,#2eacf8 12.8%,#2ca7f8 15.8%,#1063f4 17.9%,#1062f4 20.2%,#146af6 23.6%,#1164f4 26.1%,#146cf6 28.9%,#1062f4 33.4%,#1266f5 36.3%,#2296f6 37.1%,#1ab0fc 37.6%,#00e2ff 38.2%,#00eeff 41.1%,#00ff96 41.7%,#4cff38 42.4%,#4cff38 44.4%,#faf00a 45.2%,#faf00a 46.4%,#fcc305 46.8%,#fb6104 47.2%,#f94a06 47.8%,#e8390b 50.3%,#f94a06 53.0%,#fb6104 53.7%,#fcc305 54.1%,#faf00a 54.5%,#faf00a 55.8%,#4cff38 56.7%,#4cff38 58.8%,#00ff96 59.5%,#00eeff 60.2%,#00e2ff 63.3%,#1ab0fc 64.0%,#2296f6 64.4%,#0f5ff3 65.3%,#1163f4 67.9%,#1368f5 71.0%,#1267f5 74.3%,#0e5cf1 78.5%,#0f60f3 84.1%,#2596f7 85.9%,#2eacf8 87.8%,#08d8fd 88.5%,#08d8fd 89.4%,#2eacf8 90.0%,#218bf6 90.2%,#0e5df2 91.2%,#1368f5 95.5%,#1164f4 98.1%,#1061f4 100.0%)"></div><div style="height:1.0px;background:linear-gradient(90deg,#1369f4 0.0%,#1267f4 0.8%,#1061f4 2.0%,#0e5bf1 7.2%,#2aa3f7 8.5%,#2eacf8 9.3%,#07dbfd 10.0%,#07dbfd 11.9%,#2eacf8 12.6%,#2aa3f7 14.2%,#1062f4 15.7%,#1165f5 20.0%,#1164f4 23.9%,#1163f4 28.2%,#0f5ff3 31.7%,#0e5df2 36.0%,#0f60f3 36.0%,#2296f6 36.9%,#1ab0fc 37.4%,#00e2ff 38.1%,#00eeff 40.6%,#00ff96 41.3%,#4cff38 42.0%,#4cff38 44.4%,#faf00a 45.3%,#faf00a 46.3%,#fcc305 46.7%,#fa5705 47.2%,#f83b07 47.7%,#e52c0d 50.1%,#f83b07 52.3%,#fa5705 52.7%,#fcc305 53.1%,#faf00a 53.5%,#faf00a 54.4%,#4cff38 55.2%,#4cff38 57.3%,#00ff96 58.0%,#00eeff 58.6%,#00e2ff 60.8%,#1ab0fc 61.4%,#2296f6 61.9%,#1266f5 62.7%,#1165f5 65.6%,#0f60f3 69.3%,#146bf6 72.2%,#1369f6 75.5%,#146bf6 78.7%,#146af6 84.6%,#2493f7 86.1%,#2eacf8 87.5%,#09d7fd 88.2%,#09d7fd 89.1%,#2daaf8 89.8%,#2089f6 89.9%,#1061f4 90.9%,#146af6 92.3%,#1164f4 95.2%,#0c57f0 99.3%,#0d58f0 100.0%)"></div><div style="height:1.0px;background:linear-gradient(90deg,#1977f5 0.0%,#1671f5 0.8%,#1165f5 2.0%,#0d58f0 4.8%,#0f5ef2 7.9%,#2aa2f7 9.1%,#2eacf8 9.6%,#08dafd 10.3%,#08dafd 12.0%,#2eacf8 12.7%,#2aa2f7 14.2%,#0c57f0 15.7%,#0f60f3 19.8%,#1368f5 23.5%,#0d59f0 27.8%,#1368f5 31.7%,#0d5af1 34.8%,#0d58f0 37.9%,#2296f6 38.7%,#1ab0fc 39.1%,#00e2ff 39.8%,#00eeff 42.0%,#00ff96 42.6%,#4cff38 43.3%,#4cff38 44.7%,#faf00a 45.5%,#faf00a 46.6%,#fcc305 47.0%,#fa4d06 47.4%,#f72d08 47.9%,#e2200e 50.0%,#f72d08 52.3%,#fa4d06 52.8%,#fcc305 53.3%,#faf00a 53.7%,#faf00a 54.9%,#4cff38 55.8%,#4cff38 57.4%,#00ff96 58.1%,#00eeff 58.8%,#00e2ff 61.3%,#1ab0fc 62.0%,#2296f6 62.5%,#0f5ff3 63.4%,#0d58f0 66.2%,#0f5ef2 70.6%,#1266f5 73.3%,#0d59f0 76.5%,#1163f4 79.0%,#0d5af1 83.6%,#2392f7 85.5%,#2eacf8 87.6%,#09d6fd 88.3%,#09d6fd 89.2%,#2da9f8 89.9%,#2088f6 90.0%,#156cf6 91.0%,#0f5ff3 93.2%,#146bf6 96.3%,#1266f5 99.8%,#0f5ef2 100.0%)"></div><div style="height:1.0px;background:linear-gradient(90deg,#146df5 0.0%,#136af4 0.8%,#1062f4 2.0%,#0d59f0 6.9%,#299ff7 8.2%,#2eacf8 9.1%,#09d8fd 9.8%,#09d8fd 11.5%,#2eacf8 12.2%,#299ff7 14.2%,#0f5ff3 15.8%,#0e5cf1 20.6%,#1368f5 24.7%,#0f5ef2 27.8%,#146bf6 32.3%,#0e5df2 36.2%,#0f5ff3 38.2%,#2296f6 38.9%,#1ab0fc 39.4%,#00e2ff 40.0%,#00eeff 41.9%,#00ff96 42.5%,#4cff38 43.1%,#4cff38 44.7%,#faf00a 45.5%,#faf00a 46.9%,#fcc305 47.3%,#f93f07 47.7%,#f61a0a 48.1%,#de1010 50.0%,#f61a0a 52.1%,#f93f07 52.6%,#fcc305 53.0%,#faf00a 53.4%,#faf00a 55.1%,#4cff38 56.0%,#4cff38 57.6%,#00ff96 58.4%,#00eeff 59.1%,#00e2ff 61.1%,#1ab0fc 61.8%,#2296f6 62.3%,#0d58f0 62.7%,#1062f4 63.2%,#156cf6 66.0%,#1062f4 69.0%,#0e5df2 71.7%,#1368f5 74.2%,#1165f5 77.9%,#1063f4 83.7%,#2390f6 85.5%,#2daaf8 87.5%,#0ad4fc 88.2%,#0ad4fc 89.1%,#1f87f6 89.8%,#2ca7f8 89.8%,#0f60f3 90.7%,#0d58f0 94.2%,#0e5cf2 96.7%,#0c57f0 99.2%,#0d59f0 100.0%)"></div><div style="height:1.0px;background:linear-gradient(90deg,#1163f4 0.0%,#1063f4 0.8%,#0f60f3 2.0%,#1063f4 6.9%,#299ff7 8.2%,#2eacf8 9.1%,#09d8fd 9.8%,#09d8fd 11.7%,#2eacf8 12.4%,#299ff7 12.9%,#0f5ef2 14.1%,#1368f5 16.3%,#156cf6 19.6%,#0c57f0 23.9%,#0e5df2 26.9%,#0d58f0 31.2%,#0e5df2 35.3%,#1061f4 37.8%,#2296f6 38.6%,#1ab0fc 39.0%,#00e2ff 39.7%,#00eeff 42.0%,#00ff96 42.6%,#4cff38 43.3%,#4cff38 44.9%,#faf00a 45.7%,#faf00a 47.1%,#fcc305 47.5%,#f93f07 47.9%,#f61a0a 48.4%,#de1010 50.3%,#f61a0a 52.4%,#f93f07 52.8%,#fcc305 53.3%,#faf00a 53.7%,#faf00a 55.3%,#4cff38 56.2%,#4cff38 57.9%,#00ff96 58.6%,#00eeff 59.3%,#00e2ff 61.8%,#1ab0fc 62.5%,#2296f6 63.0%,#156cf6 63.9%,#0d58f0 63.9%,#1369f6 67.2%,#1165f5 71.2%,#0d58f0 75.0%,#1061f3 77.7%,#0f5ef2 80.2%,#0d5af1 84.7%,#2390f6 86.3%,#2daaf8 87.7%,#0ad4fc 88.4%,#0ad4fc 89.4%,#1f87f6 89.9%,#2ca7f8 90.1%,#146bf6 90.8%,#0e5bf1 92.6%,#1266f5 95.6%,#0f60f3 99.9%,#0e5bf1 100.0%)"></div><div style="height:1.0px;background:linear-gradient(90deg,#1062f4 0.0%,#1062f4 0.8%,#0d5af1 2.0%,#146bf6 7.3%,#279cf7 8.5%,#2dabf8 9.5%,#0ad5fc 10.1%,#0ad5fc 11.7%,#2dabf8 12.3%,#279cf7 13.7%,#0d58f0 15.1%,#1061f3 20.4%,#0d58f0 24.3%,#1267f5 28.7%,#1062f4 31.4%,#1062f4 34.9%,#1267f5 36.8%,#2296f6 37.6%,#1ab0fc 38.1%,#00e2ff 38.8%,#00eeff 41.0%,#00ff96 41.7%,#4cff38 42.5%,#4cff38 44.2%,#faf00a 45.1%,#faf00a 47.2%,#fcc305 47.6%,#f93f07 48.0%,#f61a0a 48.4%,#de1010 50.2%,#f61a0a 51.9%,#f93f07 52.2%,#fcc305 52.6%,#faf00a 53.0%,#faf00a 54.8%,#4cff38 55.6%,#4cff38 57.2%,#00ff96 57.9%,#00eeff 58.5%,#00e2ff 60.5%,#1ab0fc 61.1%,#2296f6 61.5%,#0f60f3 62.3%,#156cf6 63.7%,#1063f4 66.2%,#0d5af1 69.8%,#146bf6 73.8%,#1061f4 77.2%,#1062f4 80.5%,#1368f5 84.4%,#228df6 86.0%,#2ca7f8 87.7%,#0bd0fc 88.3%,#0bd0fc 89.0%,#2aa3f8 89.7%,#1e85f6 89.8%,#1063f4 90.8%,#1164f4 95.7%,#1369f6 98.7%,#1369f6 100.0%)"></div><div style="height:1.0px;background:linear-gradient(90deg,#1268f4 0.0%,#1266f4 0.8%,#146af6 2.0%,#1061f3 4.8%,#0f60f3 6.8%,#2697f7 8.1%,#2ca6f8 8.9%,#0bd1fc 9.6%,#0bd1fc 11.4%,#2ca6f8 12.1%,#2697f7 12.7%,#0f5ef2 13.8%,#1267f5 18.6%,#1267f5 21.1%,#146bf6 23.6%,#1368f5 26.2%,#1061f3 28.6%,#0f5ff3 32.0%,#1062f4 35.9%,#0f60f3 37.3%,#2296f6 38.1%,#1ab0fc 38.6%,#00e2ff 39.3%,#00eeff 40.7%,#00ff96 41.4%,#4cff38 42.1%,#4cff38 44.8%,#faf00a 45.7%,#faf00a 47.6%,#fcc305 48.1%,#f93f07 48.5%,#f61a0a 48.8%,#de1010 50.2%,#f61a0a 51.5%,#f93f07 51.7%,#fcc305 52.1%,#faf00a 52.5%,#faf00a 54.4%,#4cff38 55.2%,#4cff38 57.7%,#00ff96 58.3%,#00eeff 59.0%,#00e2ff 60.2%,#1ab0fc 60.9%,#2296f6 61.3%,#1165f5 62.1%,#0f5ef2 62.9%,#0f60f3 67.0%,#0e5cf2 70.3%,#0d59f0 72.8%,#0d58f0 76.5%,#0f5ff3 79.2%,#0e5bf1 85.6%,#208af6 86.8%,#2aa2f7 87.7%,#0dccfc 88.4%,#0dccfc 89.1%,#1d82f6 89.6%,#299ff7 89.7%,#0e5bf1 90.4%,#0f5ef2 94.6%,#0e5cf1 99.0%,#0d59f0 100.0%)"></div><div style="height:1.0px;background:linear-gradient(90deg,#1062f4 0.0%,#1062f4 0.8%,#0f60f3 2.0%,#1063f4 6.5%,#289cf7 7.9%,#2eabf8 9.1%,#0ad5fc 9.7%,#0ad5fc 11.3%,#2eabf8 12.0%,#289cf7 12.7%,#1165f5 13.9%,#146af6 18.8%,#146bf6 22.3%,#1165f5 25.6%,#1063f4 28.9%,#1368f5 32.3%,#0d59f0 34.8%,#0c57f0 36.7%,#2296f6 37.5%,#1ab0fc 38.0%,#00e2ff 38.7%,#00eeff 41.2%,#00ff96 41.9%,#4cff38 42.5%,#4cff38 44.5%,#faf00a 45.3%,#faf00a 47.2%,#fcc305 47.6%,#f93f07 48.0%,#f61a0a 48.3%,#de1010 50.1%,#f61a0a 51.8%,#f93f07 52.2%,#fcc305 52.6%,#faf00a 53.0%,#faf00a 54.9%,#4cff38 55.7%,#4cff38 57.7%,#00ff96 58.4%,#00eeff 59.1%,#00e2ff 61.7%,#1ab0fc 62.4%,#2296f6 62.8%,#146bf6 63.7%,#146af6 65.5%,#0d59f0 68.3%,#0f5ef2 71.9%,#146af6 75.2%,#146af6 78.5%,#0f5ef2 85.0%,#228ef6 86.4%,#2ca7f8 87.8%,#0bd1fc 88.4%,#0bd1fc 89.2%,#2ba3f8 89.8%,#1e85f6 90.1%,#1267f5 91.1%,#0f5ef2 94.5%,#1061f3 98.8%,#0d58f0 100.0%)"></div><div style="height:1.0px;background:linear-gradient(90deg,#1268f4 0.0%,#1266f4 0.8%,#1164f5 2.0%,#0d5af1 6.0%,#279cf7 7.4%,#2daaf8 8.9%,#0ad4fc 9.6%,#0ad4fc 11.4%,#2daaf8 12.1%,#279cf7 12.2%,#1061f4 13.3%,#1266f5 16.4%,#1061f4 19.2%,#0d58f0 22.3%,#1062f4 25.7%,#1368f5 28.8%,#0d59f0 33.3%,#1267f5 36.0%,#0d59f0 36.2%,#2296f6 37.1%,#1ab0fc 37.6%,#00e2ff 38.3%,#00eeff 41.0%,#00ff96 41.8%,#4cff38 42.5%,#4cff38 44.8%,#faf00a 45.6%,#faf00a 47.3%,#fcc305 47.7%,#f93f07 48.1%,#f61a0a 48.5%,#de1010 50.2%,#f61a0a 51.9%,#f93f07 52.2%,#fcc305 52.6%,#faf00a 53.0%,#faf00a 54.5%,#4cff38 55.3%,#4cff38 57.4%,#00ff96 58.1%,#00eeff 58.7%,#00e2ff 61.3%,#1ab0fc 61.9%,#2296f6 62.4%,#1165f5 63.2%,#0c57f0 67.1%,#0e5bf1 69.7%,#0f60f3 74.0%,#0e5cf2 76.4%,#0e5bf1 79.4%,#1062f4 84.8%,#218df6 86.3%,#2ca7f8 87.6%,#0cd0fc 88.2%,#0cd0fc 89.1%,#2aa3f8 89.7%,#1e85f6 89.8%,#0d5af1 90.8%,#146cf6 95.2%,#1062f4 99.5%,#0f5ef2 100.0%)"></div><div style="height:1.0px;background:linear-gradient(90deg,#156ef5 0.0%,#146bf4 0.8%,#0d59f0 2.0%,#0e5cf1 4.7%,#289df7 6.5%,#2eacf8 8.7%,#09d6fd 9.4%,#09d6fd 11.3%,#2eacf8 11.9%,#289df7 12.1%,#0d58f0 13.1%,#0e5cf2 17.8%,#0f60f3 20.4%,#0f5ef2 23.1%,#1165f5 27.6%,#0f60f3 30.6%,#0e5bf1 34.6%,#0e5bf1 37.7%,#2296f6 38.5%,#1ab0fc 38.9%,#00e2ff 39.6%,#00eeff 41.5%,#00ff96 42.2%,#4cff38 42.9%,#4cff38 44.7%,#faf00a 45.5%,#faf00a 47.1%,#fcc305 47.5%,#f93f07 47.9%,#f61a0a 48.3%,#de1010 50.0%,#f61a0a 51.9%,#f93f07 52.3%,#fcc305 52.8%,#faf00a 53.2%,#faf00a 54.9%,#4cff38 55.8%,#4cff38 57.8%,#00ff96 58.6%,#00eeff 59.3%,#00e2ff 61.4%,#1ab0fc 62.1%,#2296f6 62.6%,#0f5ff3 63.5%,#1266f5 65.7%,#1368f5 68.2%,#146bf6 71.6%,#0d5af1 74.5%,#1164f4 77.1%,#146af6 80.1%,#0e5bf1 84.1%,#228ff6 85.8%,#2da9f8 87.4%,#0bd2fc 88.1%,#0bd2fc 89.1%,#2ba5f8 89.8%,#1e86f6 89.9%,#0d59f0 91.0%,#146cf6 93.9%,#1165f5 98.2%,#1063f4 100.0%)"></div><div style="height:1.0px;background:linear-gradient(90deg,#1d82f6 0.0%,#1979f5 0.8%,#1061f4 2.0%,#0f5ff3 4.2%,#2ca7f8 6.1%,#2eacf8 9.0%,#07dcfd 9.7%,#07dcfd 11.6%,#2eacf8 12.3%,#2ca7f8 12.6%,#0c57f0 13.7%,#0f5ff3 20.2%,#0e5df2 23.1%,#146bf6 26.2%,#0e5df2 29.9%,#0f5ff3 33.4%,#0e5cf1 36.7%,#1062f4 37.3%,#2296f6 38.1%,#1ab0fc 38.6%,#00e2ff 39.3%,#00eeff 41.5%,#00ff96 42.2%,#4cff38 42.9%,#4cff38 43.6%,#faf00a 44.5%,#faf00a 45.7%,#fcc305 46.2%,#f93f07 46.6%,#f61a0a 47.2%,#de1010 50.0%,#f61a0a 52.5%,#f93f07 53.1%,#fcc305 53.5%,#faf00a 53.9%,#faf00a 55.1%,#4cff38 55.9%,#4cff38 56.5%,#00ff96 57.2%,#00eeff 57.9%,#00e2ff 59.9%,#1ab0fc 60.6%,#2296f6 61.0%,#0e5df2 61.8%,#0d59f0 63.4%,#0d59f0 67.9%,#1061f3 71.5%,#1266f5 74.9%,#1062f4 78.8%,#0d58f0 82.7%,#2596f7 84.8%,#2eacf8 87.3%,#08d8fd 88.0%,#08d8fd 89.2%,#2eacf8 89.9%,#218cf6 90.1%,#1368f5 91.2%,#1265f5 92.6%,#156cf6 97.1%,#1265f5 100.0%)"></div><div style="height:1.0px;background:linear-gradient(90deg,#146df5 0.0%,#136af4 0.8%,#1164f4 2.0%,#1369f6 4.2%,#2ca8f8 6.1%,#2eacf8 8.6%,#07dcfd 9.4%,#07dcfd 11.6%,#2eacf8 12.3%,#2ca8f8 13.2%,#1266f5 14.6%,#1368f5 18.2%,#1163f4 20.8%,#1164f5 25.3%,#1061f3 29.1%,#1369f6 32.9%,#0f5ef2 37.8%,#2296f6 38.6%,#1ab0fc 39.0%,#00e2ff 39.7%,#00eeff 41.1%,#00ff96 41.8%,#4cff38 42.5%,#4cff38 44.1%,#faf00a 44.9%,#faf00a 46.0%,#fcc305 46.3%,#fa5405 46.8%,#f83808 47.3%,#e4290d 49.9%,#f83808 52.7%,#fa5405 53.3%,#fcc305 53.8%,#faf00a 54.2%,#faf00a 55.4%,#4cff38 56.2%,#4cff38 58.0%,#00ff96 58.7%,#00eeff 59.4%,#00e2ff 61.0%,#1ab0fc 61.7%,#2296f6 62.2%,#1165f5 63.1%,#0d59f0 64.3%,#0d58f0 68.2%,#0e5cf1 72.2%,#1368f5 75.8%,#1063f4 79.9%,#0f5ef2 84.0%,#2596f7 85.7%,#2eacf8 87.5%,#08d8fd 88.2%,#08d8fd 89.1%,#2eacf8 89.8%,#218cf6 90.0%,#0f5ef2 91.1%,#0e5df2 94.7%,#1369f6 99.2%,#0f60f3 100.0%)"></div><div style="height:1.0px;background:linear-gradient(90deg,#1062f4 0.0%,#1062f4 0.8%,#146bf6 2.0%,#1369f6 3.2%,#2ca8f8 5.3%,#2eacf8 8.4%,#07dcfd 9.2%,#07dcfd 11.3%,#2eacf8 12.1%,#2ca8f8 12.3%,#1368f5 13.5%,#0f5ef2 20.2%,#0d59f0 24.5%,#1369f6 28.4%,#0e5cf2 32.6%,#0d58f0 36.6%,#1164f4 37.9%,#2296f6 38.7%,#1ab0fc 39.1%,#00e2ff 39.8%,#00eeff 41.9%,#00ff96 42.6%,#4cff38 43.2%,#4cff38 44.6%,#faf00a 45.5%,#faf00a 46.2%,#fcc305 46.6%,#fb6104 47.0%,#f94906 47.6%,#e8380b 50.2%,#f94906 53.0%,#fb6104 53.6%,#fcc305 54.0%,#faf00a 54.4%,#faf00a 55.3%,#4cff38 56.1%,#4cff38 57.7%,#00ff96 58.4%,#00eeff 59.1%,#00e2ff 61.4%,#1ab0fc 62.1%,#2296f6 62.5%,#0d59f0 63.4%,#1368f5 63.8%,#0f5ef2 67.8%,#1165f5 71.0%,#146cf6 75.1%,#1062f4 79.3%,#1163f4 83.2%,#2596f7 85.2%,#2eacf8 87.4%,#08d8fd 88.1%,#08d8fd 89.2%,#2eacf8 89.9%,#218cf6 90.1%,#1267f5 91.2%,#0e5cf1 95.0%,#0f60f3 99.5%,#146bf6 100.0%)"></div><div style="height:1.0px;background:linear-gradient(90deg,#1267f4 0.0%,#1165f4 0.8%,#156cf6 2.0%,#1369f6 4.4%,#2ca8f8 6.3%,#2eacf8 8.5%,#07dcfd 9.3%,#07dcfd 11.7%,#2eacf8 12.5%,#2ca8f8 13.1%,#0e5df2 14.5%,#1164f4 18.4%,#0d5af1 21.1%,#1368f5 24.5%,#1062f4 28.4%,#0f5ef2 31.4%,#1265f5 34.0%,#1062f4 36.6%,#2296f6 37.4%,#1ab0fc 37.9%,#00e2ff 38.6%,#00eeff 40.8%,#00ff96 41.5%,#4cff38 42.2%,#4cff38 44.0%,#faf00a 44.8%,#faf00a 45.5%,#fcc305 45.9%,#fc6d03 46.4%,#fb5a05 47.1%,#eb4709 50.3%,#fb5a05 53.3%,#fc6d03 54.0%,#fcc305 54.4%,#faf00a 54.8%,#faf00a 55.5%,#4cff38 56.3%,#4cff38 58.1%,#00ff96 58.7%,#00eeff 59.4%,#00e2ff 61.6%,#1ab0fc 62.2%,#2296f6 62.7%,#1062f4 63.5%,#0e5cf2 66.6%,#0e5cf2 71.1%,#1061f3 74.4%,#0e5cf1 78.2%,#1163f4 83.4%,#2597f7 85.3%,#2eacf8 87.5%,#08d8fd 88.2%,#08d8fd 89.3%,#2eacf8 90.0%,#218cf6 90.5%,#0d59f0 91.7%,#1165f5 95.5%,#156cf6 98.2%,#1369f6 100.0%)"></div><div style="height:1.0px;background:linear-gradient(90deg,#1062f4 0.0%,#1062f4 0.8%,#0e5cf1 2.4%,#2ca8f8 4.7%,#2eacf8 8.3%,#07dcfd 9.1%,#07dcfd 11.7%,#2eacf8 12.5%,#2ca8f8 12.7%,#1165f5 13.9%,#1368f5 19.2%,#0e5bf1 23.3%,#0f5ff3 26.4%,#0e5df2 29.7%,#1062f4 33.0%,#1163f4 36.5%,#2296f6 37.3%,#1ab0fc 37.8%,#00e2ff 38.4%,#00eeff 40.9%,#00ff96 41.6%,#4cff38 42.2%,#4cff38 44.7%,#faf00a 45.5%,#faf00a 45.8%,#fcc305 46.2%,#fd7902 46.6%,#fc6c03 47.3%,#ef5508 50.3%,#fc6c03 53.6%,#fd7902 54.4%,#fcc305 54.9%,#faf00a 55.3%,#faf00a 55.6%,#4cff38 56.4%,#4cff38 59.1%,#00ff96 59.8%,#00eeff 60.5%,#00e2ff 63.3%,#1ab0fc 64.0%,#2296f6 64.5%,#0f60f3 65.3%,#146bf6 66.2%,#0e5cf2 69.9%,#1063f4 72.7%,#0d59f0 76.3%,#1369f6 79.7%,#1369f6 82.9%,#2597f7 85.0%,#2eacf8 87.6%,#08d8fd 88.3%,#08d8fd 89.3%,#2eacf8 90.0%,#218cf6 90.4%,#1267f5 91.6%,#1164f5 94.2%,#146bf6 97.1%,#0d58f0 100.0%,#0e5bf1 100.0%)"></div><div style="height:1.0px;background:linear-gradient(90deg,#1369f4 0.0%,#1267f4 0.8%,#1267f5 2.9%,#2ca8f8 5.1%,#2eacf8 8.3%,#07dcfd 9.1%,#07dcfd 11.5%,#2eacf8 12.3%,#2ca8f8 13.1%,#156cf6 14.4%,#0d58f0 19.9%,#1369f6 23.7%,#1369f6 26.7%,#1165f5 30.3%,#1266f5 33.5%,#1061f4 35.5%,#2296f6 36.4%,#1ab0fc 36.8%,#00e2ff 37.6%,#00eeff 39.8%,#00ff96 40.6%,#4cff38 41.3%,#4cff38 44.0%,#faf00a 44.9%,#faf00a 45.2%,#fcc305 45.6%,#fd7503 46.1%,#fb6504 46.8%,#ee4f08 50.0%,#fb6504 52.9%,#fd7503 53.6%,#fcc305 54.0%,#faf00a 54.4%,#faf00a 54.7%,#4cff38 55.5%,#4cff38 58.0%,#00ff96 58.6%,#00eeff 59.3%,#00e2ff 61.4%,#1ab0fc 62.0%,#2296f6 62.5%,#0f5ef2 63.2%,#1062f4 67.2%,#1163f4 70.4%,#1369f6 72.9%,#0d5af1 76.8%,#1062f4 83.2%,#2597f7 85.2%,#2eacf8 87.3%,#08d8fd 88.1%,#08d8fd 89.2%,#2eacf8 89.9%,#218cf6 90.3%,#1061f3 91.5%,#0d59f0 94.8%,#0d58f0 98.4%,#1368f5 100.0%)"></div><div style="height:1.0px;background:linear-gradient(90deg,#1774f5 0.0%,#156ff5 0.8%,#1063f4 2.8%,#2ca8f8 5.0%,#2eacf8 8.3%,#07dcfd 9.1%,#07dcfd 11.5%,#2eacf8 12.3%,#2ca8f8 12.9%,#1063f4 14.3%,#1265f5 20.3%,#1369f6 23.0%,#1165f5 25.9%,#1368f5 28.7%,#1062f4 32.6%,#146cf6 37.0%,#2296f6 37.8%,#1ab0fc 38.3%,#00e2ff 38.9%,#00eeff 41.5%,#00ff96 42.2%,#4cff38 42.9%,#4cff38 44.6%,#faf00a 45.4%,#faf00a 45.6%,#fcc305 46.0%,#fc6804 46.4%,#fa5305 47.1%,#ea410a 50.3%,#fa5305 53.6%,#fc6804 54.4%,#fcc305 54.8%,#faf00a 55.2%,#faf00a 55.4%,#4cff38 56.2%,#4cff38 58.0%,#00ff96 58.7%,#00eeff 59.4%,#00e2ff 62.1%,#1ab0fc 62.8%,#2296f6 63.3%,#146cf6 64.2%,#0e5cf2 66.4%,#0d5af1 70.2%,#0f60f3 74.5%,#1164f5 77.0%,#1368f5 82.8%,#2597f7 84.8%,#2eacf8 87.3%,#08d8fd 88.0%,#08d8fd 89.0%,#2eacf8 89.7%,#218cf6 90.1%,#0e5df2 91.3%,#0f60f3 95.5%,#0f5ff3 98.3%,#146af6 100.0%)"></div><div style="height:1.0px;background:linear-gradient(90deg,#218cf6 0.0%,#1c7ff6 0.8%,#1063f4 2.0%,#0f5ef2 2.7%,#2ca8f8 5.0%,#2eacf8 8.5%,#07dcfd 9.3%,#07dcfd 11.5%,#2eacf8 12.3%,#2ca8f8 12.7%,#156cf6 13.9%,#0f60f3 20.8%,#1369f6 25.0%,#1061f4 29.5%,#1266f5 33.5%,#1063f4 37.2%,#2296f6 38.1%,#1ab0fc 38.5%,#00e2ff 39.2%,#00eeff 40.3%,#00ff96 40.9%,#4cff38 41.6%,#4cff38 44.5%,#faf00a 45.4%,#faf00a 46.0%,#fcc305 46.4%,#fb5c05 46.8%,#f94207 47.4%,#e6320c 50.2%,#f94207 53.1%,#fb5c05 53.8%,#fcc305 54.3%,#faf00a 54.7%,#faf00a 55.3%,#4cff38 56.1%,#4cff38 59.2%,#00ff96 59.9%,#00eeff 60.6%,#00e2ff 61.7%,#1ab0fc 62.4%,#2296f6 62.9%,#1267f5 63.7%,#146cf6 63.7%,#0d5af0 67.6%,#1265f5 71.3%,#1063f4 74.5%,#0f5ff3 79.0%,#0e5cf1 83.4%,#2597f7 85.3%,#2eacf8 87.4%,#08d8fd 88.1%,#08d8fd 89.2%,#2eacf8 89.9%,#218cf6 90.2%,#0e5df2 91.3%,#0f5ef2 92.3%,#1062f4 95.5%,#156cf6 98.0%,#0f5ff3 100.0%)"></div><div style="height:1.0px;background:linear-gradient(90deg,#1369f4 0.0%,#1267f4 0.8%,#1164f4 2.0%,#1265f5 3.5%,#2ca8f8 5.6%,#2eacf8 8.4%,#07dcfd 9.2%,#07dcfd 11.7%,#2eacf8 12.5%,#2ca8f8 13.4%,#1369f6 14.9%,#146af6 20.6%,#0d58f0 24.9%,#146af6 29.2%,#1267f5 33.3%,#136af6 36.9%,#2296f6 37.7%,#1ab0fc 38.2%,#00e2ff 38.9%,#00eeff 41.7%,#00ff96 42.4%,#4cff38 43.1%,#4cff38 44.2%,#faf00a 45.0%,#faf00a 45.8%,#fcc305 46.2%,#fa4f06 46.6%,#f83108 47.3%,#e3230e 50.3%,#f83108 53.3%,#fa4f06 53.9%,#fcc305 54.4%,#faf00a 54.7%,#faf00a 55.4%,#4cff38 56.3%,#4cff38 57.4%,#00ff96 58.1%,#00eeff 58.7%,#00e2ff 61.5%,#1ab0fc 62.2%,#2296f6 62.6%,#0f60f3 63.5%,#1267f5 66.0%,#0d58f0 69.9%,#0d5af0 74.1%,#0f5ef2 77.7%,#0f60f3 83.2%,#2597f7 85.1%,#2eacf8 87.3%,#08d8fd 88.0%,#08d8fd 89.1%,#2eacf8 89.9%,#218cf6 90.2%,#0c57f0 91.4%,#0f5ff3 94.1%,#0d59f0 96.6%,#146bf6 100.0%)"></div><div style="height:1.0px;background:linear-gradient(90deg,#1062f4 0.0%,#1062f4 0.8%,#0e5cf2 2.5%,#2ca8f8 4.8%,#2eacf8 8.5%,#07dcfd 9.3%,#07dcfd 11.8%,#2eacf8 12.6%,#2ca8f8 13.1%,#0e5cf2 14.4%,#0e5df2 23.5%,#0f5ff3 27.9%,#0d58f0 31.0%,#1062f4 34.0%,#0d5af1 37.5%,#2296f6 38.3%,#1ab0fc 38.7%,#00e2ff 39.4%,#00eeff 41.8%,#00ff96 42.4%,#4cff38 43.1%,#4cff38 44.3%,#faf00a 45.1%,#faf00a 45.6%,#fcc305 46.0%,#f93f07 46.4%,#f61a0a 47.1%,#de1010 50.2%,#f61a0a 53.5%,#f93f07 54.2%,#fcc305 54.7%,#faf00a 55.1%,#faf00a 55.6%,#4cff38 56.4%,#4cff38 57.8%,#00ff96 58.5%,#00eeff 59.2%,#00e2ff 61.8%,#1ab0fc 62.5%,#2296f6 62.9%,#1266f5 63.8%,#1266f5 64.0%,#1061f3 67.5%,#1062f4 71.6%,#1061f4 74.5%,#0f5ef2 78.2%,#146af6 82.1%,#2597f7 84.4%,#2eacf8 87.2%,#08d8fd 88.0%,#08d8fd 89.2%,#2eacf8 89.9%,#218cf6 90.2%,#0e5cf1 91.3%,#0e5cf2 92.2%,#0d5af1 95.8%,#1267f5 98.5%,#0e5df2 100.0%)"></div><div style="height:1.0px;background:linear-gradient(90deg,#1062f4 0.0%,#1062f4 0.8%,#1163f4 3.7%,#2ca8f8 5.8%,#2eacf8 8.3%,#07dcfd 9.1%,#07dcfd 11.7%,#2eacf8 12.5%,#2ca8f8 14.2%,#0e5cf1 15.9%,#0e5cf2 20.8%,#0d5af1 24.3%,#146af6 27.6%,#146bf6 30.2%,#0e5bf1 34.5%,#1368f5 36.3%,#2296f6 37.2%,#1ab0fc 37.6%,#00e2ff 38.3%,#00eeff 40.8%,#00ff96 41.5%,#4cff38 42.2%,#4cff38 44.2%,#faf00a 45.0%,#faf00a 45.5%,#fcc305 45.9%,#f93f07 46.3%,#f61a0a 47.1%,#de1010 50.3%,#f61a0a 53.6%,#f93f07 54.3%,#fcc305 54.7%,#faf00a 55.1%,#faf00a 55.7%,#4cff38 56.5%,#4cff38 58.5%,#00ff96 59.2%,#00eeff 59.9%,#00e2ff 62.5%,#1ab0fc 63.2%,#2296f6 63.7%,#1266f5 64.5%,#1266f5 67.7%,#1062f4 70.4%,#0d59f0 74.4%,#0e5df2 78.6%,#0f5ff3 81.9%,#2597f7 84.3%,#2eacf8 87.4%,#08d8fd 88.2%,#08d8fd 89.3%,#2eacf8 90.1%,#218cf6 90.4%,#1368f5 91.6%,#0f5ef2 92.4%,#156cf6 95.1%,#0d59f0 99.4%,#0d5af1 100.0%)"></div><div style="height:1.0px;background:linear-gradient(90deg,#1062f4 0.0%,#1062f4 0.8%,#1165f5 2.0%,#0d58f0 4.8%,#2ca8f8 6.5%,#2eacf8 8.4%,#07dcfd 9.2%,#07dcfd 11.7%,#2eacf8 12.5%,#2ca8f8 13.3%,#1267f5 14.7%,#1369f6 18.0%,#1266f5 20.9%,#1266f5 25.2%,#0f5ef2 29.5%,#1061f4 31.9%,#1062f4 35.6%,#0f5ff3 35.7%,#2296f6 36.6%,#1ab0fc 37.1%,#00e2ff 37.8%,#00eeff 40.7%,#00ff96 41.4%,#4cff38 42.1%,#4cff38 43.8%,#faf00a 44.7%,#faf00a 45.3%,#fcc305 45.7%,#f93f07 46.2%,#f61a0a 46.9%,#de1010 50.1%,#f61a0a 53.0%,#f93f07 53.6%,#fcc305 54.1%,#faf00a 54.4%,#faf00a 55.0%,#4cff38 55.8%,#4cff38 57.3%,#00ff96 57.9%,#00eeff 58.6%,#00e2ff 61.2%,#1ab0fc 61.8%,#2296f6 62.3%,#146af6 63.1%,#146cf6 65.3%,#1062f4 69.1%,#146af6 71.8%,#0e5df2 75.8%,#0e5bf1 78.3%,#0f5ef2 81.0%,#146bf6 83.4%,#2597f7 85.3%,#2eacf8 87.5%,#08d8fd 88.2%,#08d8fd 89.3%,#2eacf8 90.1%,#218cf6 90.4%,#1267f5 91.6%,#1061f3 93.9%,#0e5df2 97.8%,#0f5ff3 100.0%)"></div><div style="height:1.0px;background:linear-gradient(90deg,#1062f4 0.0%,#1062f4 0.8%,#1063f4 2.0%,#1368f5 3.6%,#2ca8f8 5.6%,#2eacf8 8.5%,#07dcfd 9.2%,#07dcfd 11.5%,#2eacf8 12.2%,#2ca8f8 13.1%,#1165f5 14.5%,#1062f4 19.6%,#1267f5 22.1%,#156cf6 25.4%,#0f5ef2 29.9%,#1164f5 34.2%,#146af6 36.6%,#2296f6 37.4%,#1ab0fc 37.9%,#00e2ff 38.5%,#00eeff 41.1%,#00ff96 41.8%,#4cff38 42.5%,#4cff38 44.0%,#faf00a 44.8%,#faf00a 45.6%,#fcc305 46.0%,#f93f07 46.4%,#f61a0a 47.1%,#de1010 50.2%,#f61a0a 53.2%,#f93f07 53.8%,#fcc305 54.3%,#faf00a 54.7%,#faf00a 55.4%,#4cff38 56.3%,#4cff38 57.7%,#00ff96 58.4%,#00eeff 59.1%,#00e2ff 61.7%,#1ab0fc 62.3%,#2296f6 62.8%,#0f5ef2 63.6%,#0d5af1 64.2%,#0f5ef2 67.9%,#1163f4 71.1%,#0d59f0 74.5%,#1267f5 78.4%,#0e5bf1 83.0%,#2597f7 85.1%,#2eacf8 87.5%,#08d8fd 88.2%,#08d8fd 89.4%,#2eacf8 90.2%,#218cf6 90.2%,#1164f4 91.3%,#0f5ff3 95.8%,#1369f6 98.7%,#1163f4 100.0%)"></div><div style="height:1.0px;background:linear-gradient(90deg,#1266f4 0.0%,#1165f4 0.8%,#146bf6 3.5%,#2ca8f8 5.6%,#2eacf8 8.5%,#07dcfd 9.3%,#07dcfd 11.7%,#2eacf8 12.5%,#2ca8f8 13.8%,#0d5af1 15.4%,#0d5af1 20.7%,#1266f5 23.8%,#1267f5 27.3%,#0f60f3 31.6%,#1266f5 34.9%,#156cf6 36.8%,#2296f6 37.6%,#1ab0fc 38.0%,#00e2ff 38.7%,#00eeff 42.8%,#00ff96 43.4%,#4cff38 44.1%,#4cff38 44.2%,#faf00a 44.9%,#faf00a 45.4%,#fcc305 45.8%,#f93f07 46.2%,#f61a0a 46.9%,#de1010 50.0%,#f61a0a 53.4%,#f93f07 54.2%,#fcc305 54.6%,#faf00a 55.1%,#faf00a 55.5%,#4cff38 56.4%,#4cff38 56.5%,#00ff96 57.2%,#00eeff 57.9%,#00e2ff 62.4%,#1ab0fc 63.2%,#2296f6 63.6%,#1164f4 64.5%,#0f5ff3 66.2%,#0f5ff3 68.8%,#146af6 72.8%,#0f60f3 75.4%,#1063f4 78.6%,#1369f6 83.1%,#2597f7 85.0%,#2eacf8 87.3%,#08d8fd 88.1%,#08d8fd 89.1%,#2eacf8 89.9%,#218cf6 90.4%,#1164f5 91.6%,#0f5ff3 93.4%,#1164f4 96.2%,#146af6 98.9%,#156cf6 100.0%)"></div><div style="height:1.0px;background:linear-gradient(90deg,#136af4 0.0%,#1267f4 0.8%,#0f60f3 2.0%,#0c57f0 5.6%,#2ca8f8 7.2%,#2eacf8 8.6%,#07dcfd 9.4%,#07dcfd 11.6%,#2eacf8 12.4%,#2ca8f8 14.1%,#1163f4 15.7%,#1267f5 20.4%,#1062f4 23.7%,#0d58f0 27.4%,#1267f5 31.8%,#1267f5 34.9%,#0f5ff3 35.5%,#2296f6 36.4%,#1ab0fc 36.9%,#00e2ff 37.6%,#00eeff 41.1%,#00ff96 41.8%,#4cff38 42.5%,#4cff38 43.8%,#faf00a 44.6%,#faf00a 45.2%,#fcc305 45.6%,#f93f07 46.1%,#f61a0a 46.8%,#de1010 49.9%,#f61a0a 52.9%,#f93f07 53.5%,#fcc305 54.0%,#faf00a 54.3%,#faf00a 54.9%,#4cff38 55.7%,#4cff38 56.9%,#00ff96 57.6%,#00eeff 58.2%,#00e2ff 61.5%,#1ab0fc 62.2%,#2296f6 62.6%,#1062f4 63.5%,#0d58f0 64.8%,#0c57f0 68.5%,#1165f5 72.2%,#0e5bf1 75.3%,#1164f4 78.4%,#0f5ef2 82.6%,#2597f7 84.7%,#2eacf8 87.4%,#08d8fd 88.1%,#08d8fd 89.1%,#2eacf8 89.8%,#218cf6 90.0%,#156cf6 91.1%,#0d5af0 94.4%,#1062f4 98.2%,#0e5cf2 100.0%)"></div><div style="height:1.0px;background:linear-gradient(90deg,#1062f4 0.0%,#1062f4 0.8%,#0d5af1 2.0%,#146af6 6.0%,#2ca6f8 7.5%,#2eacf8 8.7%,#07dcfd 9.4%,#07dcfd 11.6%,#2eacf8 12.4%,#2ca6f8 13.9%,#1063f4 15.5%,#0f5ef2 18.9%,#0d5af1 22.8%,#1368f5 25.3%,#1164f5 28.6%,#1062f4 32.3%,#0e5df2 34.9%,#1062f4 37.2%,#2296f6 38.0%,#1ab0fc 38.5%,#00e2ff 39.1%,#00eeff 41.9%,#00ff96 42.6%,#4cff38 43.3%,#4cff38 44.7%,#faf00a 45.5%,#faf00a 46.2%,#fcc305 46.6%,#f93f07 47.0%,#f61a0a 47.6%,#de1010 50.1%,#f61a0a 52.7%,#f93f07 53.3%,#fcc305 53.7%,#faf00a 54.1%,#faf00a 54.9%,#4cff38 55.8%,#4cff38 57.3%,#00ff96 58.0%,#00eeff 58.7%,#00e2ff 61.7%,#1ab0fc 62.4%,#2296f6 62.8%,#0d5af1 63.7%,#0f60f3 65.7%,#1164f4 70.0%,#146af6 73.6%,#146bf6 77.9%,#146bf6 84.1%,#2595f7 85.8%,#2eacf8 87.5%,#08d8fd 88.2%,#08d8fd 89.3%,#2eacf8 90.0%,#218bf6 90.1%,#1164f5 91.2%,#1266f5 95.0%,#0d59f0 98.0%,#0e5bf1 100.0%)"></div><div style="height:1.0px;background:linear-gradient(90deg,#1062f4 0.0%,#1062f4 0.8%,#1164f5 2.0%,#0d5af1 6.9%,#2aa3f8 8.2%,#2eacf8 9.1%,#07dbfd 9.7%,#07dbfd 11.5%,#2eacf8 12.2%,#2aa3f8 13.6%,#0e5bf1 15.0%,#1368f5 18.0%,#1062f4 21.2%,#0d59f0 24.8%,#0d5af1 28.7%,#0e5bf1 31.7%,#0e5cf1 34.6%,#1369f6 36.0%,#2296f6 36.8%,#1ab0fc 37.3%,#00e2ff 37.9%,#00eeff 42.0%,#00ff96 42.6%,#4cff38 43.3%,#4cff38 44.6%,#faf00a 45.4%,#faf00a 46.4%,#fcc305 46.8%,#f93f07 47.2%,#f61a0a 47.7%,#de1010 49.9%,#f61a0a 52.4%,#f93f07 52.9%,#fcc305 53.3%,#faf00a 53.7%,#faf00a 54.8%,#4cff38 55.7%,#4cff38 57.2%,#00ff96 57.9%,#00eeff 58.6%,#00e2ff 63.0%,#1ab0fc 63.7%,#2296f6 64.2%,#0f60f3 65.1%,#0f60f3 66.3%,#0d59f0 70.0%,#1165f5 74.4%,#0f5ef3 77.6%,#1061f4 80.5%,#1062f4 84.5%,#2493f7 86.1%,#2eacf8 87.6%,#09d7fd 88.3%,#09d7fd 89.3%,#2dabf8 90.0%,#2089f6 90.2%,#1061f4 91.3%,#0e5cf1 96.2%,#1063f4 100.0%,#1062f4 100.0%)"></div><div style="height:1.0px;background:linear-gradient(90deg,#1062f4 0.0%,#1062f4 0.8%,#1163f4 2.0%,#146bf6 6.2%,#2aa2f7 7.7%,#2eacf8 8.9%,#07dbfd 9.7%,#07dbfd 11.9%,#2eacf8 12.6%,#2aa2f7 14.0%,#156cf6 15.6%,#0f5ef2 20.5%,#156cf6 23.7%,#156cf6 28.0%,#146af6 30.7%,#1369f6 33.1%,#0f60f3 37.1%,#2296f6 37.9%,#1ab0fc 38.4%,#00e2ff 39.0%,#00eeff 41.6%,#00ff96 42.3%,#4cff38 43.0%,#4cff38 44.5%,#faf00a 45.3%,#faf00a 46.6%,#fcc305 47.0%,#f93f07 47.4%,#f61a0a 47.9%,#de1010 50.1%,#f61a0a 52.4%,#f93f07 52.9%,#fcc305 53.4%,#faf00a 53.8%,#faf00a 55.2%,#4cff38 56.1%,#4cff38 57.6%,#00ff96 58.3%,#00eeff 59.0%,#00e2ff 61.7%,#1ab0fc 62.4%,#2296f6 62.9%,#0f5ef2 63.7%,#1061f4 66.6%,#0e5cf2 69.9%,#1369f6 73.9%,#0e5df2 76.9%,#1267f5 80.0%,#156cf6 83.6%,#2492f7 85.4%,#2eacf8 87.6%,#09d6fd 88.2%,#09d6fd 89.1%,#2daaf8 89.8%,#2089f6 90.0%,#1368f5 91.0%,#146bf6 92.1%,#146bf6 95.1%,#1063f4 99.2%,#1164f4 100.0%)"></div><div style="height:1.0px;background:linear-gradient(90deg,#1062f4 0.0%,#1062f4 0.8%,#0d58f0 2.0%,#0d5af1 7.7%,#2ba3f8 8.9%,#2eacf8 9.3%,#07dcfd 10.0%,#07dcfd 12.0%,#2eacf8 12.7%,#2ba3f8 15.3%,#146bf6 17.1%,#1164f4 19.2%,#146bf6 22.2%,#1368f5 25.1%,#0e5bf1 28.5%,#0d58f0 32.2%,#1368f5 36.5%,#0e5bf1 37.1%,#2296f6 37.9%,#1ab0fc 38.4%,#00e2ff 39.1%,#00eeff 40.7%,#00ff96 41.4%,#4cff38 42.0%,#4cff38 44.4%,#faf00a 45.2%,#faf00a 46.4%,#fcc305 46.7%,#f93f07 47.2%,#f61a0a 47.7%,#de1010 50.0%,#f61a0a 52.3%,#f93f07 52.9%,#fcc305 53.3%,#faf00a 53.7%,#faf00a 54.8%,#4cff38 55.7%,#4cff38 58.0%,#00ff96 58.7%,#00eeff 59.4%,#00e2ff 61.0%,#1ab0fc 61.7%,#2296f6 62.2%,#0f60f3 63.0%,#136af6 63.2%,#146af6 65.8%,#1061f4 68.9%,#146bf6 72.4%,#1368f5 75.8%,#0d59f0 78.6%,#156cf6 83.6%,#2493f7 85.5%,#2eacf8 87.7%,#09d7fd 88.4%,#09d7fd 89.4%,#2eabf8 90.1%,#2089f6 90.2%,#0e5bf1 91.2%,#0f60f3 95.5%,#146af6 98.1%,#1063f4 100.0%)"></div><div style="height:1.0px;background:linear-gradient(90deg,#1062f4 0.0%,#1062f4 0.8%,#0f5ef2 2.0%,#1265f5 7.9%,#2aa3f7 9.0%,#2eacf8 9.3%,#07dbfd 10.0%,#07dbfd 11.8%,#2eacf8 12.5%,#2aa3f7 14.2%,#0e5df2 15.8%,#0e5bf1 17.2%,#1164f4 20.5%,#1267f5 23.7%,#156cf6 26.9%,#0d59f0 31.1%,#0f5ef2 35.6%,#1062f4 38.6%,#2296f6 39.4%,#1ab0fc 39.9%,#00e2ff 40.5%,#00eeff 41.6%,#00ff96 42.3%,#4cff38 43.0%,#4cff38 44.3%,#faf00a 45.1%,#faf00a 46.6%,#fcc305 47.0%,#f93f07 47.5%,#f61a0a 47.9%,#de1010 50.1%,#f61a0a 52.4%,#f93f07 52.9%,#fcc305 53.4%,#faf00a 53.8%,#faf00a 55.4%,#4cff38 56.2%,#4cff38 57.6%,#00ff96 58.3%,#00eeff 59.0%,#00e2ff 60.2%,#1ab0fc 60.9%,#2296f6 61.4%,#0f5ff3 62.2%,#1063f4 65.4%,#0e5df2 69.0%,#0e5df2 72.9%,#1367f5 76.5%,#146bf6 80.8%,#1369f6 83.5%,#2492f7 85.4%,#2eacf8 87.7%,#09d6fd 88.4%,#09d6fd 89.3%,#2daaf8 89.9%,#2089f6 90.3%,#1062f4 91.4%,#0e5df2 92.7%,#146af6 96.7%,#1062f4 99.5%,#0d5af1 100.0%)"></div><div style="height:1.0px;background:linear-gradient(90deg,#1062f4 0.0%,#1062f4 0.8%,#0f60f3 2.0%,#0f5ef2 4.7%,#0d5af1 7.5%,#289cf7 8.7%,#2eabf8 9.3%,#0ad5fc 9.9%,#0ad5fc 11.6%,#2eabf8 12.2%,#289cf7 13.5%,#1267f5 14.9%,#1266f5 17.3%,#1062f4 19.8%,#0f5ff3 23.1%,#1267f5 26.7%,#1062f4 30.3%,#0e5cf2 33.3%,#146af6 37.5%,#1368f5 38.5%,#2296f6 39.3%,#1ab0fc 39.7%,#00e2ff 40.4%,#00eeff 42.0%,#00ff96 42.7%,#4cff38 43.3%,#4cff38 45.3%,#faf00a 46.1%,#faf00a 47.6%,#fcc305 47.9%,#f93f07 48.4%,#f61a0a 48.7%,#de1010 50.3%,#f61a0a 52.1%,#f93f07 52.5%,#fcc305 53.0%,#faf00a 53.4%,#faf00a 55.0%,#4cff38 55.8%,#4cff38 58.0%,#00ff96 58.8%,#00eeff 59.5%,#00e2ff 61.3%,#1ab0fc 62.1%,#2296f6 62.5%,#0d5af1 63.4%,#1368f5 65.8%,#0e5cf2 70.3%,#1164f4 73.4%,#156cf6 76.1%,#0f5ef2 79.2%,#0f5ff3 85.3%,#228df6 86.7%,#2ca7f8 87.7%,#0bd0fc 88.4%,#0bd0fc 89.4%,#1e85f6 89.9%,#2ba3f8 90.1%,#1266f5 90.7%,#1266f5 92.7%,#0f5ff3 96.6%,#1369f6 99.9%,#0e5cf2 100.0%)"></div><div style="height:1.0px;background:linear-gradient(90deg,#1062f4 0.0%,#1062f4 0.8%,#0f5ff3 2.0%,#0f60f3 8.4%,#2eacf8 9.2%,#289df7 9.4%,#09d6fd 9.9%,#09d6fd 11.6%,#2eacf8 12.3%,#289df7 14.5%,#1164f5 16.2%,#1164f4 16.7%,#1062f4 21.0%,#0f60f3 24.6%,#0f60f3 28.3%,#146bf6 32.4%,#0e5df2 35.4%,#1061f4 36.7%,#2296f6 37.5%,#1ab0fc 37.9%,#00e2ff 38.6%,#00eeff 42.7%,#00ff96 43.4%,#4cff38 44.0%,#4cff38 44.7%,#faf00a 45.5%,#faf00a 47.0%,#fcc305 47.4%,#f93f07 47.8%,#f61a0a 48.2%,#de1010 49.9%,#f61a0a 51.7%,#f93f07 52.1%,#fcc305 52.6%,#faf00a 53.0%,#faf00a 54.5%,#4cff38 55.3%,#4cff38 56.0%,#00ff96 56.7%,#00eeff 57.4%,#00e2ff 61.7%,#1ab0fc 62.4%,#2296f6 62.9%,#156cf6 63.7%,#1368f5 64.6%,#1164f5 68.9%,#0d5af1 72.0%,#0d59f0 75.6%,#0f60f3 79.7%,#1062f4 84.8%,#228ef6 86.4%,#2ca8f8 87.8%,#0bd1fc 88.5%,#0bd1fc 89.5%,#2ba4f8 90.2%,#1e85f6 90.2%,#1061f4 91.2%,#1267f5 94.2%,#156cf6 97.8%,#0d5af1 100.0%)"></div><div style="height:1.0px;background:linear-gradient(90deg,#1062f4 0.0%,#1062f4 0.8%,#0d58f0 2.0%,#0e5bf1 4.7%,#0e5bf1 9.0%,#2daaf8 9.6%,#279bf7 9.9%,#0ad4fc 10.3%,#0ad4fc 11.9%,#2daaf8 12.6%,#279bf7 14.1%,#156cf6 15.5%,#146bf6 18.6%,#0d58f0 22.6%,#146bf6 25.5%,#0d58f0 29.9%,#0f60f3 33.5%,#0e5bf1 36.3%,#2296f6 37.1%,#1ab0fc 37.6%,#00e2ff 38.2%,#00eeff 42.8%,#00ff96 43.5%,#4cff38 44.2%,#4cff38 44.3%,#faf00a 45.2%,#faf00a 47.2%,#fcc305 47.6%,#f93f07 48.0%,#f61a0a 48.3%,#de1010 50.0%,#f61a0a 51.7%,#f93f07 52.0%,#fcc305 52.4%,#faf00a 52.8%,#faf00a 54.8%,#4cff38 55.6%,#4cff38 55.7%,#00ff96 56.4%,#00eeff 57.1%,#00e2ff 61.5%,#1ab0fc 62.2%,#2296f6 62.6%,#1266f5 63.5%,#1062f4 65.4%,#1369f6 68.2%,#0f60f3 72.5%,#1266f5 76.5%,#0e5bf1 79.8%,#0e5cf1 85.3%,#218df6 86.6%,#2ca6f8 87.8%,#0cd0fc 88.4%,#0cd0fc 89.1%,#2aa3f7 89.8%,#1e84f6 90.0%,#1061f4 91.0%,#1061f4 95.0%,#146af6 97.8%,#0e5bf1 100.0%)"></div><div style="height:1.0px;background:linear-gradient(90deg,#1062f4 0.0%,#1062f4 0.8%,#1165f5 2.0%,#146af6 8.4%,#299ff7 9.4%,#2eacf8 9.5%,#09d8fd 10.2%,#09d8fd 12.0%,#2eacf8 12.6%,#299ff7 13.9%,#0e5cf2 15.4%,#1062f4 18.3%,#0e5bf1 21.9%,#146bf6 25.6%,#1164f4 29.7%,#1164f4 32.2%,#0e5bf1 35.6%,#0d5af1 35.9%,#2296f6 36.8%,#1ab0fc 37.3%,#00e2ff 38.0%,#00eeff 41.8%,#00ff96 42.5%,#4cff38 43.2%,#4cff38 44.3%,#faf00a 45.1%,#faf00a 46.7%,#fcc305 47.1%,#f93f07 47.5%,#f61a0a 48.0%,#de1010 50.0%,#f61a0a 51.9%,#f93f07 52.3%,#fcc305 52.7%,#faf00a 53.1%,#faf00a 54.4%,#4cff38 55.2%,#4cff38 56.1%,#00ff96 56.8%,#00eeff 57.4%,#00e2ff 60.8%,#1ab0fc 61.5%,#2296f6 61.9%,#1061f3 62.7%,#156cf6 64.0%,#0e5cf1 67.5%,#1267f5 71.9%,#0e5df2 74.8%,#1266f5 79.0%,#1063f4 84.0%,#2390f6 85.8%,#2daaf8 87.9%,#0ad3fc 88.6%,#0ad3fc 89.5%,#2ca6f8 90.3%,#1f87f6 90.3%,#1062f4 91.3%,#0e5bf1 96.4%,#1368f5 100.0%)"></div><div style="height:1.0px;background:linear-gradient(90deg,#1062f4 0.0%,#1062f4 0.8%,#0e5cf1 2.0%,#146af6 8.6%,#299ff7 9.6%,#2eacf8 9.6%,#09d7fd 10.3%,#09d7fd 12.3%,#2eacf8 13.0%,#299ff7 14.6%,#0f60f3 16.2%,#0c57f0 17.3%,#1164f4 21.3%,#1164f4 25.5%,#1063f4 28.5%,#156cf6 31.3%,#146bf6 35.2%,#0e5cf1 37.1%,#2296f6 37.9%,#1ab0fc 38.4%,#00e2ff 39.1%,#00eeff 42.4%,#00ff96 43.1%,#4cff38 43.7%,#4cff38 44.9%,#faf00a 45.7%,#faf00a 47.2%,#fcc305 47.6%,#f93f07 48.0%,#f61a0a 48.4%,#de1010 50.3%,#f61a0a 52.3%,#f93f07 52.7%,#fcc305 53.1%,#faf00a 53.5%,#faf00a 55.1%,#4cff38 55.9%,#4cff38 57.1%,#00ff96 57.8%,#00eeff 58.5%,#00e2ff 62.0%,#1ab0fc 62.7%,#2296f6 63.1%,#1061f4 64.0%,#1061f4 64.1%,#1266f5 67.9%,#1062f4 70.4%,#1063f4 73.9%,#0e5cf1 76.8%,#1062f4 81.3%,#0e5bf1 84.2%,#228ff6 85.9%,#2daaf8 87.9%,#0bd3fc 88.6%,#0bd3fc 89.3%,#2ca6f8 90.0%,#1f86f6 90.2%,#146cf6 91.3%,#0e5cf2 93.4%,#1266f5 96.0%,#146af6 99.3%,#146cf6 100.0%)"></div><div style="height:1.0px;background:linear-gradient(90deg,#1062f4 0.0%,#1062f4 0.8%,#0f5ff3 2.0%,#0e5bf1 8.4%,#299ff7 9.5%,#2eacf8 9.7%,#09d8fd 10.4%,#09d8fd 12.5%,#2eacf8 13.2%,#299ff7 15.5%,#1061f3 17.2%,#0d58f0 21.1%,#1368f5 25.5%,#0d58f0 28.3%,#0d5af1 32.2%,#0e5cf2 34.9%,#0c57f0 37.2%,#2296f6 38.1%,#1ab0fc 38.6%,#00e2ff 39.2%,#00eeff 42.1%,#00ff96 42.8%,#4cff38 43.5%,#4cff38 44.3%,#faf00a 45.1%,#faf00a 46.7%,#fcc305 47.1%,#f93f07 47.5%,#f61a0a 48.0%,#de1010 50.0%,#f61a0a 51.9%,#f93f07 52.3%,#fcc305 52.8%,#faf00a 53.2%,#faf00a 54.7%,#4cff38 55.5%,#4cff38 56.3%,#00ff96 57.0%,#00eeff 57.6%,#00e2ff 60.5%,#1ab0fc 61.2%,#2296f6 61.6%,#1267f5 62.4%,#1164f4 63.7%,#156cf6 67.7%,#146bf6 70.5%,#1062f4 74.3%,#0e5cf2 78.8%,#1267f5 84.2%,#2390f6 85.9%,#2daaf8 87.9%,#0ad3fc 88.6%,#0ad3fc 89.4%,#2ca7f8 90.1%,#1f87f6 90.4%,#1164f4 91.4%,#1164f5 94.2%,#0f5ef2 97.3%,#0d59f0 100.0%)"></div><div style="height:1.0px;background:linear-gradient(90deg,#1062f4 0.0%,#1062f4 0.8%,#1061f4 2.0%,#1062f4 4.9%,#1266f5 8.0%,#29a1f7 9.1%,#2eacf8 9.7%,#08d9fd 10.3%,#08d9fd 12.1%,#2eacf8 12.8%,#29a1f7 14.4%,#0f60f3 15.9%,#0d5af1 17.9%,#0e5bf1 21.1%,#0e5bf1 25.2%,#146af6 28.2%,#1163f4 32.0%,#1165f5 36.3%,#0d59f0 37.7%,#2296f6 38.5%,#1ab0fc 38.9%,#00e2ff 39.6%,#00eeff 42.4%,#00ff96 43.1%,#4cff38 43.8%,#4cff38 44.5%,#faf00a 45.4%,#faf00a 47.0%,#fcc305 47.4%,#f93f07 47.8%,#f61a0a 48.3%,#de1010 50.3%,#f61a0a 52.5%,#f93f07 52.9%,#fcc305 53.4%,#faf00a 53.8%,#faf00a 55.6%,#4cff38 56.4%,#4cff38 57.3%,#00ff96 58.0%,#00eeff 58.7%,#00e2ff 61.7%,#1ab0fc 62.4%,#2296f6 62.8%,#1164f5 63.7%,#146bf6 66.1%,#1061f4 69.1%,#0d5af1 71.6%,#0d58f0 75.3%,#0d58f0 78.9%,#146bf6 85.1%,#2391f7 86.6%,#2eacf8 87.9%,#0ad5fc 88.5%,#0ad5fc 89.4%,#2ca8f8 90.0%,#1f88f6 90.1%,#1369f6 91.1%,#0d5af1 93.2%,#1062f4 96.9%,#0f5ef2 100.0%)"></div><div style="height:1.0px;background:linear-gradient(90deg,#1062f4 0.0%,#1062f4 0.8%,#1165f5 2.0%,#1062f4 8.0%,#29a1f7 9.2%,#2eacf8 9.6%,#08d9fd 10.3%,#08d9fd 12.4%,#2eacf8 13.1%,#29a1f7 15.1%,#1368f5 16.8%,#1164f4 18.4%,#1164f4 21.9%,#1368f5 26.3%,#1369f6 30.6%,#1165f5 33.6%,#1266f5 37.5%,#1266f5 37.6%,#2296f6 38.4%,#1ab0fc 38.9%,#00e2ff 39.5%,#00eeff 42.0%,#00ff96 42.7%,#4cff38 43.4%,#4cff38 44.4%,#faf00a 45.2%,#faf00a 46.8%,#fcc305 47.2%,#f93f07 47.6%,#f61a0a 48.1%,#de1010 50.2%,#f61a0a 52.3%,#f93f07 52.7%,#fcc305 53.1%,#faf00a 53.5%,#faf00a 55.0%,#4cff38 55.8%,#4cff38 56.7%,#00ff96 57.4%,#00eeff 58.1%,#00e2ff 60.5%,#1ab0fc 61.2%,#2296f6 61.6%,#0d5af1 62.4%,#0e5cf1 63.1%,#0f60f3 66.2%,#156cf6 70.7%,#0e5cf2 73.3%,#0f60f3 77.8%,#1266f5 84.9%,#2391f7 86.4%,#2eacf8 87.9%,#0ad5fc 88.6%,#0ad5fc 89.6%,#2ca8f8 90.3%,#1f88f6 90.3%,#1063f4 91.3%,#0e5cf2 93.1%,#1267f5 96.0%,#0d59f0 100.0%)"></div><div style="height:1.0px;background:linear-gradient(90deg,#1062f4 0.0%,#1062f4 0.8%,#0f5ef3 2.0%,#1062f4 5.7%,#1369f6 8.4%,#279bf7 9.5%,#2daaf8 9.7%,#0ad4fc 10.4%,#0ad4fc 12.1%,#2daaf8 12.8%,#279bf7 13.9%,#146cf6 15.3%,#0e5df2 18.9%,#1165f5 21.6%,#0d58f0 25.7%,#1368f5 28.7%,#1062f4 31.8%,#0d5af1 35.7%,#1061f4 38.3%,#0e5cf1 38.8%,#2296f6 39.6%,#1ab0fc 40.1%,#00e2ff 40.8%,#00eeff 41.7%,#00ff96 42.4%,#4cff38 43.1%,#4cff38 44.6%,#faf00a 45.4%,#faf00a 47.1%,#fcc305 47.5%,#f93f07 47.9%,#f61a0a 48.3%,#de1010 49.9%,#f61a0a 51.5%,#f93f07 51.9%,#fcc305 52.3%,#faf00a 52.7%,#faf00a 54.3%,#4cff38 55.1%,#4cff38 56.5%,#00ff96 57.2%,#00eeff 57.9%,#00e2ff 58.8%,#1ab0fc 59.5%,#2296f6 60.0%,#1164f4 60.8%,#1266f5 63.1%,#146af6 66.1%,#0e5bf1 68.8%,#0f5ff3 71.6%,#0e5cf2 74.3%,#1266f5 76.8%,#1062f4 81.0%,#1164f4 85.6%,#218df6 86.9%,#2ca6f8 88.1%,#0cd0fc 88.7%,#0cd0fc 89.4%,#1e84f6 90.0%,#2aa2f7 90.1%,#0d59f0 90.8%,#1164f5 92.9%,#0d5af1 97.4%,#1061f4 100.0%)"></div><div style="height:1.0px;background:linear-gradient(90deg,#1062f4 0.0%,#1062f4 0.8%,#1063f4 2.0%,#0f5ff3 5.5%,#0e5bf1 9.1%,#2ba3f8 9.8%,#2595f7 10.0%,#0ccefc 10.4%,#0ccefc 12.1%,#2ba3f8 12.7%,#2595f7 13.6%,#0f5ff3 14.9%,#1062f4 18.3%,#0d5af1 22.5%,#1164f4 25.3%,#1062f4 29.5%,#146af6 33.3%,#1165f5 37.2%,#1368f5 39.5%,#2296f6 40.3%,#1ab0fc 40.8%,#00e2ff 41.5%,#00eeff 42.1%,#00ff96 42.8%,#4cff38 43.4%,#4cff38 45.3%,#faf00a 46.2%,#faf00a 47.9%,#fcc305 48.3%,#f93f07 48.8%,#f61a0a 49.0%,#de1010 50.1%,#f61a0a 51.2%,#f93f07 51.4%,#fcc305 51.9%,#faf00a 52.3%,#faf00a 54.0%,#4cff38 54.9%,#4cff38 56.8%,#00ff96 57.5%,#00eeff 58.2%,#00e2ff 58.8%,#1ab0fc 59.5%,#2296f6 59.9%,#1164f4 60.8%,#0e5cf2 61.0%,#1164f5 64.6%,#1164f5 68.2%,#0e5cf2 71.0%,#0c57f0 73.9%,#0d58f0 78.1%,#1164f5 81.6%,#0f5ff3 85.9%,#1f88f6 87.2%,#29a0f7 88.2%,#0ecafb 88.8%,#0ecafb 89.5%,#289cf7 90.1%,#1c80f6 90.2%,#1267f5 91.1%,#1368f5 94.3%,#156cf6 97.7%,#0f5ff3 100.0%)"></div><div style="height:1.0px;background:linear-gradient(90deg,#1165f4 0.0%,#1164f4 0.8%,#1368f5 2.0%,#0d58f0 7.8%,#289df7 9.0%,#2eacf8 9.7%,#09d6fd 10.4%,#09d6fd 12.1%,#2eacf8 12.8%,#289df7 14.1%,#0d5af1 15.6%,#1062f4 17.4%,#1164f5 21.5%,#1267f5 25.8%,#1164f4 29.3%,#0f5ff3 32.4%,#0d58f0 34.8%,#1165f5 38.0%,#2296f6 38.8%,#1ab0fc 39.2%,#00e2ff 39.9%,#00eeff 41.0%,#00ff96 41.7%,#4cff38 42.4%,#4cff38 44.3%,#faf00a 45.1%,#faf00a 46.9%,#fcc305 47.3%,#f93f07 47.7%,#f61a0a 48.1%,#de1010 49.9%,#f61a0a 51.8%,#f93f07 52.2%,#fcc305 52.6%,#faf00a 53.0%,#faf00a 54.8%,#4cff38 55.7%,#4cff38 57.6%,#00ff96 58.3%,#00eeff 59.0%,#00e2ff 60.2%,#1ab0fc 60.9%,#2296f6 61.3%,#0f5ff3 62.2%,#0f5ef2 63.4%,#1063f4 67.0%,#1062f4 70.1%,#1368f5 73.7%,#1165f5 76.3%,#0f5ef2 80.3%,#0d5af1 84.5%,#228ff6 86.2%,#2da9f8 88.0%,#0bd2fc 88.7%,#0bd2fc 89.5%,#2ba5f8 90.1%,#1e86f6 90.2%,#0f60f3 91.2%,#0c57f0 95.5%,#0f5ef2 98.4%,#1063f4 100.0%)"></div><div style="height:1.0px;background:linear-gradient(90deg,#1062f4 0.0%,#1062f4 0.8%,#1062f4 2.0%,#0d5af1 5.7%,#0f5ef2 8.8%,#279bf7 9.8%,#2da9f8 9.9%,#0ad4fc 10.6%,#0ad4fc 12.5%,#2da9f8 13.1%,#279bf7 13.7%,#1266f5 14.9%,#146cf6 20.1%,#1369f6 23.7%,#1164f4 26.8%,#0d58f0 31.2%,#1061f4 34.1%,#1165f5 37.3%,#0d59f0 37.6%,#2296f6 38.1%,#1ab0fc 38.6%,#00e2ff 39.4%,#00eeff 41.4%,#00ff96 42.2%,#4cff38 42.9%,#4cff38 44.3%,#faf00a 45.2%,#faf00a 47.0%,#fcc305 47.4%,#f93f07 47.9%,#f61a0a 48.2%,#de1010 49.9%,#f61a0a 51.4%,#f93f07 51.7%,#fcc305 52.2%,#faf00a 52.5%,#faf00a 54.1%,#4cff38 54.9%,#4cff38 56.2%,#00ff96 56.8%,#00eeff 57.5%,#00e2ff 59.3%,#1ab0fc 59.9%,#2296f6 60.4%,#1062f4 61.2%,#146bf6 62.1%,#1165f5 66.6%,#0e5bf1 70.8%,#1369f6 73.5%,#1369f6 76.0%,#146af6 78.4%,#0e5bf1 81.4%,#0f5ef2 84.7%,#218df6 86.4%,#2ba6f8 88.1%,#0ccffc 88.7%,#0ccffc 89.5%,#2aa2f7 90.2%,#1e84f6 90.2%,#1267f5 91.2%,#0e5bf1 92.9%,#146af6 96.0%,#0d5af1 99.0%,#0e5df2 100.0%)"></div><div style="height:1.0px;background:linear-gradient(90deg,#1369f4 0.0%,#1267f4 0.8%,#0f5ef2 2.0%,#1368f5 4.9%,#0f5ff3 8.4%,#279bf7 9.5%,#2daaf8 9.9%,#0ad4fc 10.6%,#0ad4fc 12.4%,#2daaf8 13.0%,#279bf7 14.6%,#1164f4 16.1%,#1165f5 17.2%,#0d5af1 20.1%,#1062f4 23.6%,#0e5bf1 27.1%,#0d58f0 30.4%,#0f5ff3 34.8%,#0e5df2 38.1%,#1163f4 38.7%,#2296f6 39.5%,#1ab0fc 39.9%,#00e2ff 40.6%,#00eeff 42.3%,#00ff96 43.0%,#4cff38 43.6%,#4cff38 45.0%,#faf00a 45.8%,#faf00a 47.4%,#fcc305 47.8%,#f93f07 48.2%,#f61a0a 48.5%,#de1010 50.1%,#f61a0a 51.8%,#f93f07 52.1%,#fcc305 52.6%,#faf00a 53.0%,#faf00a 54.7%,#4cff38 55.5%,#4cff38 57.0%,#00ff96 57.7%,#00eeff 58.4%,#00e2ff 60.2%,#1ab0fc 60.9%,#2296f6 61.4%,#1163f4 62.2%,#0d59f0 65.8%,#156cf6 68.5%,#0d59f0 71.3%,#146af6 75.0%,#0e5bf1 79.4%,#0f5ef3 85.0%,#218df6 86.6%,#2ca6f8 88.0%,#0ccffc 88.7%,#0ccffc 89.5%,#2aa2f7 90.2%,#1e84f6 90.3%,#0d5af1 91.3%,#146bf6 93.4%,#1061f4 97.6%,#0e5df2 100.0%)"></div><div style="height:1.0px;background:linear-gradient(90deg,#1062f4 0.0%,#1062f4 0.8%,#0e5df2 2.0%,#1063f4 4.5%,#1266f5 7.4%,#2ba4f8 8.8%,#2eacf8 9.8%,#07dcfd 10.6%,#07dcfd 12.8%,#2eacf8 13.5%,#2ba4f8 14.2%,#0f5ff3 15.5%,#146cf6 17.8%,#0d58f0 22.0%,#1368f5 25.6%,#146bf6 29.3%,#1267f5 32.7%,#0c57f0 35.8%,#1266f5 37.6%,#2296f6 38.5%,#1ab0fc 38.9%,#00e2ff 39.6%,#00eeff 41.0%,#00ff96 41.7%,#4cff38 42.4%,#4cff38 44.0%,#faf00a 44.8%,#faf00a 46.2%,#fcc305 46.6%,#f93f07 47.1%,#f61a0a 47.6%,#de1010 50.0%,#f61a0a 52.3%,#f93f07 52.8%,#fcc305 53.2%,#faf00a 53.6%,#faf00a 54.9%,#4cff38 55.7%,#4cff38 57.2%,#00ff96 57.8%,#00eeff 58.5%,#00e2ff 59.7%,#1ab0fc 60.4%,#2296f6 60.8%,#0f60f3 61.6%,#0f60f3 64.6%,#0d59f0 67.7%,#1164f4 70.6%,#0f5ff3 73.1%,#1061f3 77.5%,#1369f6 80.5%,#1369f6 83.7%,#2493f7 85.7%,#2eacf8 88.1%,#09d7fd 88.7%,#09d7fd 89.6%,#2eabf8 90.2%,#2089f6 90.3%,#1369f6 91.3%,#0d58f0 95.0%,#146af6 99.4%,#0f5ff3 100.0%)"></div><div style="height:1.0px;background:linear-gradient(90deg,#1671f5 0.0%,#146cf5 0.8%,#0d5af1 2.0%,#1267f5 6.2%,#2ba6f8 7.9%,#2eacf8 9.8%,#07dcfd 10.5%,#07dcfd 12.5%,#2eacf8 13.3%,#2ba6f8 14.5%,#1266f5 15.9%,#1164f4 19.2%,#0e5bf1 22.3%,#1062f4 26.4%,#0f5ef2 30.2%,#1163f4 34.1%,#146bf6 38.1%,#2296f6 38.9%,#1ab0fc 39.4%,#00e2ff 40.0%,#00eeff 41.8%,#00ff96 42.4%,#4cff38 43.1%,#4cff38 44.9%,#faf00a 45.7%,#faf00a 46.6%,#fcc305 46.9%,#f93f07 47.4%,#f61a0a 47.9%,#de1010 50.3%,#f61a0a 52.9%,#f93f07 53.5%,#fcc305 54.0%,#faf00a 54.4%,#faf00a 55.3%,#4cff38 56.2%,#4cff38 58.1%,#00ff96 58.8%,#00eeff 59.6%,#00e2ff 61.4%,#1ab0fc 62.1%,#2296f6 62.6%,#1063f4 63.5%,#0e5cf2 64.8%,#1369f6 67.3%,#0e5df2 71.9%,#146af6 74.5%,#1369f6 77.2%,#0d59f0 80.8%,#1267f5 84.2%,#2595f7 86.0%,#2eacf8 88.0%,#08d8fd 88.7%,#08d8fd 89.8%,#2eacf8 90.5%,#208bf6 90.6%,#1266f5 91.6%,#1369f6 96.7%,#146af6 100.0%)"></div><div style="height:1.0px;background:linear-gradient(90deg,#1368f4 0.0%,#1266f4 0.8%,#0d58f0 2.0%,#1368f5 5.4%,#1061f4 7.5%,#2aa1f7 8.8%,#2eacf8 9.6%,#08d9fd 10.3%,#08d9fd 12.4%,#2eacf8 13.2%,#2aa1f7 14.1%,#1061f4 15.4%,#1266f5 19.8%,#146af6 23.8%,#1062f4 28.3%,#146bf6 32.3%,#1063f4 36.8%,#146bf6 37.3%,#2296f6 38.2%,#1ab0fc 38.7%,#00e2ff 39.4%,#00eeff 41.8%,#00ff96 42.5%,#4cff38 43.2%,#4cff38 44.2%,#faf00a 45.1%,#faf00a 46.8%,#fcc305 47.2%,#f93f07 47.6%,#f61a0a 48.1%,#de1010 50.3%,#f61a0a 52.4%,#f93f07 52.8%,#fcc305 53.2%,#faf00a 53.6%,#faf00a 55.2%,#4cff38 56.0%,#4cff38 57.0%,#00ff96 57.7%,#00eeff 58.4%,#00e2ff 60.7%,#1ab0fc 61.3%,#2296f6 61.8%,#0c57f0 62.6%,#146af6 64.6%,#0f5ef3 69.0%,#146cf6 73.5%,#0c57f0 76.4%,#0d5af1 79.5%,#1266f5 84.9%,#2391f7 86.5%,#2eacf8 87.9%,#0ad5fc 88.6%,#0ad5fc 89.5%,#2da8f8 90.2%,#1f88f6 90.4%,#1266f5 91.4%,#1369f6 92.9%,#1267f5 96.5%,#1063f4 100.0%)"></div><div style="height:1.0px;background:linear-gradient(90deg,#1671f5 0.0%,#146cf5 0.8%,#1163f4 2.0%,#1061f4 5.1%,#1164f4 7.0%,#29a0f7 8.5%,#2eacf8 10.0%,#08d9fd 10.7%,#08d9fd 12.6%,#2eacf8 13.3%,#29a0f7 14.2%,#1061f4 15.5%,#0d58f0 21.9%,#0e5df2 26.4%,#0f60f3 29.8%,#1267f5 32.6%,#0d5af0 36.2%,#1368f5 36.7%,#2296f6 37.1%,#1ab0fc 37.6%,#00e2ff 38.3%,#00eeff 41.2%,#00ff96 41.9%,#4cff38 42.6%,#4cff38 44.3%,#faf00a 45.2%,#faf00a 46.8%,#fcc305 47.2%,#f93f07 47.6%,#f61a0a 48.1%,#de1010 50.3%,#f61a0a 52.3%,#f93f07 52.7%,#fcc305 53.1%,#faf00a 53.5%,#faf00a 54.8%,#4cff38 55.6%,#4cff38 57.2%,#00ff96 57.8%,#00eeff 58.4%,#00e2ff 61.0%,#1ab0fc 61.7%,#2296f6 62.1%,#0f60f3 62.9%,#146bf6 65.2%,#156cf6 68.6%,#0c57f0 72.1%,#1266f5 75.5%,#1163f4 79.6%,#1368f5 84.8%,#2391f7 86.4%,#2eabf8 87.8%,#0ad4fc 88.5%,#0ad4fc 89.6%,#2ca8f8 90.3%,#1f87f6 90.3%,#0e5bf1 91.4%,#0d59f0 94.0%,#0e5bf1 96.9%,#146bf6 100.0%)"></div><div style="height:1.0px;background:linear-gradient(90deg,#1164f4 0.0%,#1163f4 0.8%,#1062f4 2.0%,#1061f4 5.0%,#1165f5 7.2%,#279bf7 8.6%,#2daaf8 10.0%,#0ad4fc 10.6%,#0ad4fc 12.3%,#2daaf8 13.0%,#279bf7 13.5%,#1165f5 14.6%,#0e5bf1 20.2%,#1369f6 24.3%,#1062f4 28.0%,#0f5ff3 30.5%,#146bf6 34.2%,#0f5ff3 37.0%,#2296f6 37.8%,#1ab0fc 38.2%,#00e2ff 38.9%,#00eeff 42.4%,#00ff96 43.1%,#4cff38 43.8%,#4cff38 44.8%,#faf00a 45.6%,#faf00a 47.4%,#fcc305 47.8%,#f93f07 48.2%,#f61a0a 48.6%,#de1010 50.2%,#f61a0a 51.8%,#f93f07 52.2%,#fcc305 52.6%,#faf00a 53.0%,#faf00a 54.8%,#4cff38 55.7%,#4cff38 56.8%,#00ff96 57.5%,#00eeff 58.2%,#00e2ff 61.9%,#1ab0fc 62.6%,#2296f6 63.0%,#156cf6 63.9%,#0d59f0 64.9%,#156cf6 68.6%,#0d5af1 72.3%,#0e5df2 75.5%,#0d59f0 79.1%,#136af6 85.9%,#218df6 87.2%,#2ca6f8 88.1%,#0cd0fc 88.8%,#0cd0fc 89.6%,#1e84f6 90.3%,#2aa2f7 90.3%,#0e5cf2 91.2%,#0f5ef2 95.3%,#0d58f0 99.0%,#0f60f3 100.0%)"></div><div style="height:1.0px;background:linear-gradient(90deg,#1a7af5 0.0%,#1773f5 0.8%,#0d59f0 2.0%,#146af6 6.5%,#1368f5 8.0%,#2699f7 9.2%,#2ca8f8 10.0%,#0bd2fc 10.6%,#0bd2fc 12.4%,#2ca8f8 13.1%,#2699f7 13.4%,#1063f4 14.5%,#1367f5 19.0%,#146bf6 22.4%,#0d59f0 26.9%,#1164f4 31.4%,#1367f5 34.3%,#0d59f0 35.7%,#2296f6 36.6%,#1ab0fc 37.0%,#00e2ff 37.7%,#00eeff 42.4%,#00ff96 43.1%,#4cff38 43.8%,#4cff38 44.4%,#faf00a 45.2%,#faf00a 47.5%,#fcc305 47.9%,#f93f07 48.4%,#f61a0a 48.7%,#de1010 50.2%,#f61a0a 51.6%,#f93f07 51.9%,#fcc305 52.3%,#faf00a 52.7%,#faf00a 54.8%,#4cff38 55.6%,#4cff38 56.1%,#00ff96 56.8%,#00eeff 57.5%,#00e2ff 61.9%,#1ab0fc 62.6%,#2296f6 63.0%,#1368f5 63.8%,#0f60f3 68.5%,#1266f5 72.5%,#1369f6 76.9%,#1267f5 79.6%,#1266f5 86.3%,#218bf6 87.5%,#2ba4f8 88.1%,#0dcefc 88.8%,#0dcefc 89.7%,#1d83f6 90.2%,#29a0f7 90.4%,#156cf6 91.1%,#0d5af1 94.1%,#1368f5 98.2%,#0d59f0 100.0%)"></div><div style="height:1.0px;background:linear-gradient(90deg,#1164f4 0.0%,#1163f4 0.8%,#0d59f0 2.0%,#1164f4 4.7%,#1368f5 7.4%,#279af7 8.8%,#2da9f8 10.1%,#0ad3fc 10.7%,#0ad3fc 12.2%,#279af7 12.6%,#2da9f8 12.8%,#0d5af0 13.5%,#156cf6 18.5%,#146cf6 22.4%,#0f60f3 25.4%,#146bf6 28.4%,#1369f6 32.4%,#0e5cf1 35.9%,#0f60f3 36.5%,#2296f6 37.3%,#1ab0fc 37.8%,#00e2ff 38.4%,#00eeff 42.5%,#00ff96 43.2%,#4cff38 43.8%,#4cff38 44.6%,#faf00a 45.4%,#faf00a 47.3%,#fcc305 47.7%,#f93f07 48.1%,#f61a0a 48.4%,#de1010 50.0%,#f61a0a 51.6%,#f93f07 51.9%,#fcc305 52.3%,#faf00a 52.7%,#faf00a 54.7%,#4cff38 55.5%,#4cff38 56.3%,#00ff96 57.0%,#00eeff 57.7%,#00e2ff 61.9%,#1ab0fc 62.6%,#2296f6 63.0%,#0e5cf2 63.9%,#1061f3 65.8%,#146af6 68.6%,#0d59f0 71.4%,#1369f6 75.6%,#1164f4 80.1%,#0f5ff3 85.1%,#218cf6 86.6%,#2ba5f8 87.9%,#0ccffc 88.6%,#0ccffc 89.6%,#1e84f6 90.2%,#2aa1f7 90.3%,#0e5bf1 91.1%,#1369f6 95.3%,#0e5bf1 97.9%,#1164f4 100.0%)"></div><div style="height:1.0px;background:linear-gradient(90deg,#156ef5 0.0%,#146bf4 0.8%,#146bf6 2.0%,#1369f6 4.7%,#146af6 7.2%,#2699f7 8.5%,#2ca8f8 9.7%,#0bd2fc 10.4%,#0bd2fc 12.0%,#2ca8f8 12.7%,#2699f7 12.8%,#0e5df2 13.8%,#1164f5 19.7%,#0f5ef2 22.8%,#0e5df2 27.3%,#0f5ff3 31.5%,#0f5ff3 35.0%,#1061f4 36.2%,#2296f6 37.1%,#1ab0fc 37.6%,#00e2ff 38.3%,#00eeff 42.2%,#00ff96 42.9%,#4cff38 43.6%,#4cff38 44.4%,#faf00a 45.3%,#faf00a 47.3%,#fcc305 47.7%,#f93f07 48.2%,#f61a0a 48.5%,#de1010 50.0%,#f61a0a 51.5%,#f93f07 51.7%,#fcc305 52.2%,#faf00a 52.5%,#faf00a 54.4%,#4cff38 55.2%,#4cff38 56.0%,#00ff96 56.6%,#00eeff 57.3%,#00e2ff 60.9%,#1ab0fc 61.6%,#2296f6 62.0%,#1369f6 62.8%,#0e5df2 66.5%,#1267f5 69.4%,#0e5df2 73.6%,#1165f5 76.3%,#1165f5 80.0%,#1266f5 85.9%,#218bf6 87.1%,#2ba4f8 87.9%,#0ccefc 88.6%,#0ccefc 89.4%,#1d83f6 90.0%,#29a0f7 90.1%,#0d58f0 90.9%,#1165f5 93.0%,#146af6 96.3%,#1367f5 99.9%,#1369f6 100.0%)"></div><div style="height:1.0px;background:linear-gradient(90deg,#1773f5 0.0%,#156ef5 0.8%,#146bf6 2.0%,#0e5cf2 4.4%,#1063f4 8.4%,#2391f7 9.5%,#29a0f7 10.0%,#0ecbfb 10.6%,#0ecbfb 11.8%,#2391f7 12.0%,#29a0f7 12.4%,#0e5cf2 12.7%,#1267f5 15.6%,#1061f4 19.4%,#1164f4 22.4%,#1267f5 26.8%,#1266f5 29.6%,#0f5ef2 32.5%,#1163f4 36.6%,#1367f5 40.3%,#2296f6 41.1%,#1ab0fc 41.6%,#00e2ff 42.2%,#00eeff 43.0%,#00ff96 43.7%,#4cff38 44.3%,#4cff38 46.4%,#faf00a 47.1%,#faf00a 48.5%,#fcc305 48.9%,#f93f07 49.3%,#f61a0a 49.4%,#de1010 50.2%,#f61a0a 51.1%,#f93f07 51.2%,#fcc305 51.7%,#faf00a 52.1%,#faf00a 53.6%,#4cff38 54.4%,#4cff38 56.7%,#00ff96 57.4%,#00eeff 58.1%,#00e2ff 58.9%,#1ab0fc 59.6%,#2296f6 60.1%,#0f5ff3 61.0%,#0d58f0 63.2%,#1266f5 67.1%,#0d59f0 71.6%,#1266f5 74.3%,#1061f4 78.3%,#0d58f0 85.7%,#1e85f6 87.0%,#279cf7 88.0%,#0fc6fb 88.6%,#0fc6fb 89.4%,#1b7ef6 89.8%,#2698f7 90.1%,#1063f4 90.6%,#1165f5 95.9%,#0d5af1 100.0%)"></div><div style="height:1.0px;background:linear-gradient(90deg,#1c81f6 0.0%,#1977f5 0.8%,#0f5ff3 2.0%,#0f60f3 5.3%,#146bf6 8.3%,#2392f7 9.3%,#29a1f7 9.9%,#0dccfc 10.5%,#0dccfc 11.8%,#2392f7 12.0%,#29a1f7 12.4%,#0e5cf2 12.7%,#0d59f0 15.7%,#1266f5 18.6%,#1265f5 21.3%,#1165f5 24.7%,#146bf6 28.4%,#1369f6 31.0%,#1063f4 35.2%,#0f5ff3 39.5%,#2296f6 40.3%,#1ab0fc 40.7%,#00e2ff 41.4%,#00eeff 43.0%,#00ff96 43.7%,#4cff38 44.3%,#4cff38 45.9%,#faf00a 46.7%,#faf00a 48.1%,#fcc305 48.5%,#f93f07 48.9%,#f61a0a 49.1%,#de1010 49.9%,#f61a0a 50.8%,#f93f07 51.0%,#fcc305 51.5%,#faf00a 51.9%,#faf00a 53.4%,#4cff38 54.3%,#4cff38 56.1%,#00ff96 56.8%,#00eeff 57.5%,#00e2ff 59.4%,#1ab0fc 60.1%,#2296f6 60.6%,#1267f5 61.5%,#0f5ff3 64.2%,#0e5bf1 66.9%,#136af6 69.8%,#0f5ef2 72.6%,#1368f5 76.0%,#0e5df2 79.8%,#1061f4 85.7%,#1f86f6 87.0%,#289df7 88.0%,#0fc7fb 88.7%,#0fc7fb 89.5%,#1c7ff6 89.7%,#2699f7 90.2%,#1164f4 90.5%,#0d58f0 93.3%,#0c57f0 97.0%,#1062f4 100.0%)"></div><div style="height:1.0px;background:linear-gradient(90deg,#1164f4 0.0%,#1063f4 0.8%,#1368f5 2.0%,#0f60f3 5.6%,#0d59f0 7.4%,#2698f7 8.8%,#2ca6f8 10.1%,#0bd1fc 10.7%,#0bd1fc 12.1%,#2698f7 12.6%,#2ca6f8 12.7%,#156cf6 13.4%,#0c57f0 17.6%,#0e5cf2 20.9%,#0e5cf2 23.4%,#0f5ef2 27.2%,#0e5df2 30.0%,#0d5af1 34.0%,#1061f3 37.6%,#2296f6 38.4%,#1ab0fc 38.9%,#00e2ff 39.5%,#00eeff 41.7%,#00ff96 42.4%,#4cff38 43.1%,#4cff38 44.9%,#faf00a 45.8%,#faf00a 47.7%,#fcc305 48.0%,#f93f07 48.5%,#f61a0a 48.7%,#de1010 50.1%,#f61a0a 51.5%,#f93f07 51.7%,#fcc305 52.2%,#faf00a 52.6%,#faf00a 54.5%,#4cff38 55.4%,#4cff38 57.2%,#00ff96 57.9%,#00eeff 58.6%,#00e2ff 60.9%,#1ab0fc 61.6%,#2296f6 62.0%,#1368f5 62.9%,#0e5bf1 63.3%,#0d59f0 65.9%,#0d59f0 69.0%,#0d58f0 72.5%,#0e5df2 76.1%,#0c57f0 79.7%,#1164f4 85.5%,#208af6 86.9%,#2aa3f8 87.9%,#0dcdfc 88.6%,#0dcdfc 89.5%,#1d82f6 90.1%,#299ff7 90.2%,#0f5ef2 91.0%,#1369f6 93.1%,#0d5af0 97.3%,#0f5ff3 100.0%)"></div><div style="height:1.0px;background:linear-gradient(90deg,#1062f4 0.0%,#1062f4 0.8%,#0e5bf1 2.0%,#1063f4 5.4%,#2aa3f7 7.2%,#2eacf8 9.3%,#07dbfd 10.0%,#07dbfd 12.3%,#2eacf8 13.0%,#2aa3f7 13.7%,#1369f6 15.0%,#1165f5 20.1%,#1368f5 22.7%,#0f5ff3 26.9%,#0f5ff3 30.7%,#146bf6 34.4%,#0f5ef2 36.9%,#2296f6 37.7%,#1ab0fc 38.1%,#00e2ff 38.8%,#00eeff 41.5%,#00ff96 42.2%,#4cff38 42.8%,#4cff38 44.7%,#faf00a 45.5%,#faf00a 46.5%,#fcc305 46.9%,#f93f07 47.3%,#f61a0a 47.8%,#de1010 49.9%,#f61a0a 52.3%,#f93f07 52.8%,#fcc305 53.3%,#faf00a 53.7%,#faf00a 54.8%,#4cff38 55.7%,#4cff38 57.8%,#00ff96 58.5%,#00eeff 59.2%,#00e2ff 62.3%,#1ab0fc 63.0%,#2296f6 63.5%,#0f5ef3 64.3%,#0f60f3 66.2%,#1369f6 69.8%,#0d5af1 73.0%,#146af6 76.5%,#146af6 79.7%,#0e5df2 83.8%,#2492f7 85.7%,#2eacf8 87.9%,#09d6fd 88.6%,#09d6fd 89.5%,#2daaf8 90.2%,#2089f6 90.2%,#1266f5 91.2%,#146bf6 93.4%,#1267f5 97.1%,#0d58f0 100.0%)"></div><div style="height:1.0px;background:linear-gradient(90deg,#1062f4 0.0%,#1062f4 0.8%,#1165f5 2.0%,#156cf6 6.6%,#2aa2f7 8.1%,#2eacf8 9.7%,#08dafd 10.4%,#08dafd 12.1%,#2eacf8 12.8%,#2aa2f7 13.2%,#1061f4 14.3%,#156cf6 20.7%,#0f60f3 25.0%,#1061f4 29.0%,#146af6 32.6%,#146bf6 36.8%,#0e5df2 37.4%,#2296f6 38.3%,#1ab0fc 38.7%,#00e2ff 39.4%,#00eeff 41.1%,#00ff96 41.8%,#4cff38 42.4%,#4cff38 44.7%,#faf00a 45.5%,#faf00a 46.6%,#fcc305 47.0%,#fa4e06 47.4%,#f82f08 47.9%,#e2220e 50.1%,#f82f08 52.3%,#fa4e06 52.8%,#fcc305 53.2%,#faf00a 53.6%,#faf00a 54.8%,#4cff38 55.7%,#4cff38 58.0%,#00ff96 58.7%,#00eeff 59.4%,#00e2ff 61.1%,#1ab0fc 61.8%,#2296f6 62.3%,#1164f4 63.1%,#1163f4 65.7%,#1369f6 68.4%,#146af6 71.7%,#1267f5 74.5%,#0e5bf1 78.3%,#0d58f0 84.0%,#2392f7 85.8%,#2eacf8 87.8%,#09d6fd 88.5%,#09d6fd 89.6%,#2088f6 90.2%,#2da9f8 90.4%,#1063f4 91.1%,#0d5af1 92.6%,#1062f4 96.8%,#1368f5 99.6%,#0f5ef3 100.0%)"></div><div style="height:1.0px;background:linear-gradient(90deg,#1267f4 0.0%,#1166f4 0.8%,#1061f4 2.0%,#1063f4 5.1%,#2ca8f8 6.9%,#2eacf8 9.2%,#07dcfd 9.9%,#07dcfd 12.1%,#2eacf8 12.8%,#2ca8f8 13.2%,#1369f6 14.3%,#0e5bf1 20.2%,#0c57f0 24.4%,#1369f6 27.5%,#146cf6 30.5%,#146bf6 34.3%,#0d59f0 36.5%,#2296f6 37.3%,#1ab0fc 37.8%,#00e2ff 38.5%,#00eeff 41.0%,#00ff96 41.7%,#4cff38 42.4%,#4cff38 44.3%,#faf00a 45.1%,#faf00a 45.7%,#fcc305 46.1%,#fb5a05 46.6%,#f94007 47.2%,#e6300c 50.0%,#f94007 52.7%,#fb5a05 53.3%,#fcc305 53.8%,#faf00a 54.1%,#faf00a 54.7%,#4cff38 55.5%,#4cff38 57.3%,#00ff96 58.0%,#00eeff 58.7%,#00e2ff 61.1%,#1ab0fc 61.8%,#2296f6 62.2%,#0f5ff3 63.0%,#0c57f0 64.1%,#146bf6 67.9%,#0d58f0 72.3%,#1164f4 76.1%,#136af6 79.9%,#156cf6 84.2%,#2597f7 86.0%,#2eacf8 87.9%,#08d8fd 88.6%,#08d8fd 89.6%,#2eacf8 90.3%,#218cf6 90.5%,#0d5af1 91.5%,#0c57f0 93.1%,#1369f6 96.0%,#0f5ef2 99.0%,#1164f4 100.0%)"></div><div style="height:1.0px;background:linear-gradient(90deg,#1062f4 0.0%,#1062f4 0.8%,#156cf6 2.0%,#0e5df2 2.8%,#2ca8f8 5.2%,#2eacf8 9.0%,#07dcfd 9.8%,#07dcfd 12.2%,#2eacf8 13.0%,#2ca8f8 13.6%,#0e5df2 14.9%,#146bf6 24.1%,#0e5cf1 28.0%,#1265f5 32.5%,#0e5cf2 36.5%,#2296f6 37.3%,#1ab0fc 37.7%,#00e2ff 38.4%,#00eeff 41.1%,#00ff96 41.8%,#4cff38 42.5%,#4cff38 44.5%,#faf00a 45.3%,#faf00a 45.4%,#fcc305 45.8%,#fc6704 46.3%,#fa5206 47.0%,#ea3f0a 50.2%,#fa5206 53.5%,#fc6704 54.2%,#fcc305 54.7%,#faf00a 55.1%,#faf00a 55.2%,#4cff38 56.0%,#4cff38 58.0%,#00ff96 58.7%,#00eeff 59.3%,#00e2ff 62.1%,#1ab0fc 62.7%,#2296f6 63.2%,#0f5ff3 64.0%,#0f60f3 65.6%,#0f5ef2 69.6%,#146cf6 72.1%,#146bf6 76.4%,#0f60f3 79.1%,#0f5ff3 82.1%,#2597f7 84.5%,#2eacf8 87.8%,#08d8fd 88.5%,#08d8fd 89.6%,#2eacf8 90.3%,#218cf6 90.7%,#1165f5 91.9%,#1369f6 93.7%,#0e5bf1 98.2%,#0d5af1 100.0%)"></div><div style="height:1.0px;background:linear-gradient(90deg,#1062f4 0.0%,#1062f4 0.8%,#1063f4 2.0%,#0e5cf1 4.0%,#2ca8f8 6.1%,#2eacf8 8.7%,#07dcfd 9.6%,#07dcfd 12.3%,#2eacf8 13.1%,#2ca8f8 14.3%,#146bf6 15.9%,#136af6 20.3%,#146bf6 23.7%,#1164f5 27.6%,#1061f4 31.6%,#0f5ef2 35.8%,#1061f4 37.1%,#2296f6 37.9%,#1ab0fc 38.4%,#00e2ff 39.0%,#00eeff 40.2%,#00ff96 40.9%,#4cff38 41.5%,#4cff38 44.4%,#faf00a 45.0%,#faf00a 45.1%,#fcc305 45.5%,#fc7303 45.9%,#fb6304 46.8%,#ed4e09 50.3%,#fb6304 54.0%,#fc7303 54.8%,#fcc305 55.2%,#faf00a 55.6%,#faf00a 55.7%,#4cff38 56.4%,#4cff38 59.4%,#00ff96 60.1%,#00eeff 60.8%,#00e2ff 61.9%,#1ab0fc 62.6%,#2296f6 63.1%,#0e5cf2 63.9%,#0d59f0 64.0%,#1164f4 66.8%,#1266f5 70.0%,#1165f5 72.7%,#1163f4 77.1%,#0f5ef3 79.7%,#1369f6 82.5%,#2597f7 84.8%,#2eacf8 87.9%,#08d8fd 88.6%,#08d8fd 89.7%,#2eacf8 90.4%,#218cf6 90.8%,#1062f4 92.0%,#146bf6 93.8%,#0f5ef2 96.5%,#1368f5 100.0%)"></div><div style="height:1.0px;background:linear-gradient(90deg,#1062f4 0.0%,#1062f4 0.8%,#146af6 3.5%,#2ca8f8 5.7%,#2eacf8 8.8%,#07dcfd 9.7%,#07dcfd 12.4%,#2eacf8 13.3%,#2ca8f8 14.4%,#1062f4 16.0%,#1163f4 23.0%,#1061f3 26.1%,#0e5bf1 30.3%,#0d59f0 34.8%,#0f60f3 37.9%,#2296f6 38.7%,#1ab0fc 39.1%,#00e2ff 39.7%,#00eeff 40.2%,#00ff96 40.9%,#4cff38 41.5%,#4cff38 44.1%,#faf00a 44.9%,#faf00a 45.1%,#fcc305 45.5%,#fd7b02 45.9%,#fc6d03 46.7%,#ef5708 50.0%,#fc6d03 53.6%,#fd7b02 54.5%,#fcc305 54.9%,#faf00a 55.4%,#faf00a 55.6%,#4cff38 56.5%,#4cff38 59.4%,#00ff96 60.1%,#00eeff 60.8%,#00e2ff 61.4%,#1ab0fc 62.1%,#2296f6 62.6%,#156cf6 63.5%,#146bf6 65.8%,#0f5ff3 68.8%,#1369f6 72.3%,#156cf6 75.0%,#0e5df2 77.8%,#1164f4 80.7%,#1267f5 82.5%,#2597f7 84.8%,#2eacf8 87.7%,#08d8fd 88.5%,#08d8fd 89.7%,#2eacf8 90.5%,#218cf6 90.9%,#0e5df2 92.1%,#0e5bf1 95.0%,#146bf6 99.1%,#1063f4 100.0%)"></div><div style="height:1.0px;background:linear-gradient(90deg,#1062f4 0.0%,#1062f4 0.8%,#1266f5 4.4%,#2ca8f8 6.3%,#2eacf8 8.7%,#07dcfd 9.5%,#07dcfd 12.1%,#2eacf8 12.9%,#2ca8f8 14.8%,#146bf6 16.6%,#1368f5 22.7%,#0f5ef3 27.2%,#0e5bf1 31.0%,#1369f6 33.9%,#0f60f3 37.0%,#2296f6 37.8%,#1ab0fc 38.3%,#00e2ff 39.0%,#00eeff 41.0%,#00ff96 41.7%,#4cff38 42.4%,#4cff38 44.3%,#faf00a 45.1%,#faf00a 45.3%,#fcc305 45.7%,#fc6e03 46.1%,#fb5c05 46.9%,#ec4809 50.2%,#fb5c05 53.6%,#fc6e03 54.3%,#fcc305 54.8%,#faf00a 55.2%,#faf00a 55.3%,#4cff38 56.1%,#4cff38 58.0%,#00ff96 58.7%,#00eeff 59.4%,#00e2ff 61.4%,#1ab0fc 62.1%,#2296f6 62.6%,#1368f5 63.4%,#156cf6 66.0%,#1061f4 69.1%,#0e5bf1 72.2%,#1367f5 74.8%,#1266f5 79.2%,#0e5cf2 82.1%,#2597f7 84.5%,#2eacf8 87.7%,#08d8fd 88.4%,#08d8fd 89.5%,#2eacf8 90.2%,#218cf6 90.5%,#1265f5 91.6%,#0f5ef2 94.3%,#1369f6 96.8%,#1062f4 99.9%,#1063f4 100.0%)"></div><div style="height:1.0px;background:linear-gradient(90deg,#156ef5 0.0%,#136af4 0.8%,#1164f5 2.0%,#146bf6 3.7%,#2ca8f8 5.8%,#2eacf8 8.7%,#07dcfd 9.6%,#07dcfd 12.3%,#2eacf8 13.1%,#2ca8f8 13.9%,#0d5af1 15.4%,#0d59f0 20.8%,#146bf6 24.2%,#1061f4 27.0%,#0e5df2 30.7%,#1062f4 34.8%,#0f5ff3 36.2%,#2296f6 37.0%,#1ab0fc 37.5%,#00e2ff 38.2%,#00eeff 41.3%,#00ff96 42.0%,#4cff38 42.7%,#4cff38 44.0%,#faf00a 44.8%,#faf00a 44.9%,#fcc305 45.2%,#fb6204 45.7%,#fa4b06 46.5%,#e8390b 50.0%,#fa4b06 53.6%,#fb6204 54.4%,#fcc305 54.8%,#faf00a 55.2%,#faf00a 55.3%,#4cff38 56.1%,#4cff38 57.4%,#00ff96 58.1%,#00eeff 58.8%,#00e2ff 62.0%,#1ab0fc 62.7%,#2296f6 63.2%,#146af6 64.0%,#1063f4 64.7%,#0e5cf2 68.3%,#0f60f3 70.7%,#1368f5 74.2%,#1062f4 76.9%,#1368f5 81.3%,#146bf6 82.2%,#2597f7 84.6%,#2eacf8 87.7%,#08d8fd 88.5%,#08d8fd 89.7%,#2eacf8 90.5%,#218cf6 90.9%,#0f60f3 92.2%,#0f5ef2 93.0%,#1061f4 96.7%,#1061f3 100.0%)"></div><div style="height:1.0px;background:linear-gradient(90deg,#1e85f6 0.0%,#1a7af5 0.8%,#1062f4 2.0%,#1061f4 5.2%,#2ca8f8 6.9%,#2eacf8 9.0%,#07dcfd 9.7%,#07dcfd 11.8%,#2eacf8 12.5%,#2ca8f8 14.7%,#0f5ef2 16.4%,#1061f4 21.4%,#1164f5 25.8%,#0d5af1 28.9%,#1265f5 32.1%,#1061f4 35.6%,#1369f6 37.2%,#2296f6 38.0%,#1ab0fc 38.5%,#00e2ff 39.1%,#00eeff 41.0%,#00ff96 41.7%,#4cff38 42.4%,#4cff38 43.9%,#faf00a 44.8%,#faf00a 45.7%,#fcc305 46.1%,#fa5605 46.5%,#f83907 47.2%,#e52b0d 50.1%,#f83907 53.0%,#fa5605 53.7%,#fcc305 54.1%,#faf00a 54.5%,#faf00a 55.5%,#4cff38 56.3%,#4cff38 57.9%,#00ff96 58.6%,#00eeff 59.3%,#00e2ff 61.2%,#1ab0fc 61.9%,#2296f6 62.4%,#1266f5 63.2%,#0f5ef2 64.1%,#146bf6 67.0%,#1165f5 69.6%,#0e5cf1 72.4%,#1062f4 74.9%,#0e5bf1 79.4%,#0f5ff3 82.6%,#2597f7 84.8%,#2eacf8 87.7%,#08d8fd 88.4%,#08d8fd 89.3%,#2eacf8 90.0%,#218cf6 90.4%,#0d5af1 91.6%,#0f5ff3 93.3%,#1369f6 97.3%,#0f5ff3 100.0%)"></div><div style="height:1.0px;background:linear-gradient(90deg,#1774f5 0.0%,#156ff5 0.8%,#1369f6 2.0%,#0f5ff3 4.8%,#2ca8f8 6.6%,#2eacf8 8.6%,#07dcfd 9.4%,#07dcfd 12.0%,#2eacf8 12.8%,#2ca8f8 14.3%,#1061f4 15.9%,#0d59f0 19.5%,#0f60f3 23.4%,#1266f5 27.0%,#0f60f3 30.0%,#1063f4 33.1%,#1061f4 36.5%,#0f5ef2 37.6%,#2296f6 38.3%,#1ab0fc 38.8%,#00e2ff 39.4%,#00eeff 41.7%,#00ff96 42.4%,#4cff38 43.0%,#4cff38 44.5%,#faf00a 45.3%,#faf00a 45.5%,#fcc305 45.9%,#f93f07 46.3%,#f61a0a 47.0%,#de1010 50.0%,#f61a0a 53.4%,#f93f07 54.2%,#fcc305 54.6%,#faf00a 55.1%,#faf00a 55.3%,#4cff38 56.2%,#4cff38 57.9%,#00ff96 58.6%,#00eeff 59.3%,#00e2ff 61.9%,#1ab0fc 62.6%,#2296f6 63.1%,#146af6 64.0%,#0d59f0 65.4%,#1062f4 69.8%,#146cf6 72.6%,#1164f4 77.0%,#1061f4 81.0%,#0f5ef2 83.2%,#2597f7 85.3%,#2eacf8 87.7%,#08d8fd 88.4%,#08d8fd 89.5%,#2eacf8 90.2%,#218cf6 90.8%,#0d5af1 92.0%,#0f5ef3 92.7%,#0e5df2 95.9%,#146af6 100.0%)"></div><div style="height:1.0px;background:linear-gradient(90deg,#1979f5 0.0%,#1772f5 0.8%,#1368f5 2.0%,#1369f6 4.5%,#2ca8f8 6.3%,#2eacf8 8.7%,#07dcfd 9.4%,#07dcfd 11.5%,#2eacf8 12.2%,#2ca8f8 13.9%,#1368f5 15.5%,#0f60f3 19.5%,#1163f4 23.6%,#1267f5 26.8%,#146cf6 31.3%,#0f60f3 34.7%,#1165f5 35.3%,#2296f6 36.1%,#1ab0fc 36.6%,#00e2ff 37.3%,#00eeff 41.1%,#00ff96 41.9%,#4cff38 42.6%,#4cff38 43.5%,#faf00a 44.4%,#faf00a 45.4%,#fcc305 45.8%,#f93f07 46.3%,#f61a0a 46.9%,#de1010 49.9%,#f61a0a 52.6%,#f93f07 53.1%,#fcc305 53.6%,#faf00a 53.9%,#faf00a 54.9%,#4cff38 55.6%,#4cff38 56.4%,#00ff96 57.1%,#00eeff 57.7%,#00e2ff 61.1%,#1ab0fc 61.8%,#2296f6 62.2%,#146af6 63.0%,#0f60f3 68.1%,#1061f3 70.6%,#0f5ff3 73.7%,#1163f4 76.3%,#1163f4 80.1%,#0f60f3 83.6%,#2597f7 85.5%,#2eacf8 87.7%,#08d8fd 88.4%,#08d8fd 89.5%,#2eacf8 90.3%,#218cf6 90.5%,#0d5af1 91.6%,#1369f6 94.1%,#0e5cf1 97.5%,#0d5af1 100.0%)"></div><div style="height:1.0px;background:linear-gradient(90deg,#1062f4 0.0%,#1062f4 0.8%,#0f5ff3 2.0%,#1164f4 5.9%,#2ca8f8 7.4%,#2eacf8 8.6%,#07dcfd 9.4%,#07dcfd 11.8%,#2eacf8 12.6%,#2ca8f8 14.7%,#146af6 16.5%,#1164f4 20.7%,#1266f5 25.0%,#0f60f3 28.6%,#0d58f0 31.8%,#1266f5 34.3%,#1164f4 35.8%,#2296f6 36.6%,#1ab0fc 37.1%,#00e2ff 37.8%,#00eeff 41.2%,#00ff96 41.9%,#4cff38 42.6%,#4cff38 44.2%,#faf00a 45.0%,#faf00a 45.2%,#fcc305 45.6%,#f93f07 46.0%,#f61a0a 46.7%,#de1010 50.0%,#f61a0a 53.3%,#f93f07 54.0%,#fcc305 54.4%,#faf00a 54.8%,#faf00a 55.0%,#4cff38 55.8%,#4cff38 57.4%,#00ff96 58.1%,#00eeff 58.8%,#00e2ff 62.2%,#1ab0fc 62.9%,#2296f6 63.3%,#1164f4 64.2%,#1368f5 64.4%,#0d58f0 68.3%,#0e5df2 71.5%,#0f5ef2 75.1%,#1165f5 79.5%,#0f60f3 83.5%,#2597f7 85.5%,#2eacf8 87.7%,#08d8fd 88.5%,#08d8fd 89.6%,#2eacf8 90.4%,#218cf6 90.8%,#146bf6 92.0%,#0f5ff3 92.7%,#1368f5 95.3%,#0e5bf1 99.3%,#0d59f0 100.0%)"></div><div style="height:1.0px;background:linear-gradient(90deg,#1062f4 0.0%,#1062f4 0.8%,#1164f4 2.0%,#0e5bf1 6.1%,#2ba5f8 7.6%,#2eacf8 8.8%,#07dcfd 9.6%,#07dcfd 11.7%,#2eacf8 12.4%,#2ba5f8 13.7%,#0f60f3 15.2%,#0d58f0 20.8%,#0e5df2 23.5%,#0f5ef2 27.0%,#1369f6 29.5%,#1165f5 32.5%,#1062f4 35.2%,#0e5bf1 36.1%,#2296f6 36.9%,#1ab0fc 37.4%,#00e2ff 38.1%,#00eeff 42.0%,#00ff96 42.7%,#4cff38 43.4%,#4cff38 44.6%,#faf00a 45.4%,#faf00a 46.4%,#fcc305 46.8%,#f93f07 47.2%,#f61a0a 47.7%,#de1010 50.2%,#f61a0a 52.7%,#f93f07 53.2%,#fcc305 53.6%,#faf00a 54.0%,#faf00a 55.0%,#4cff38 55.8%,#4cff38 57.0%,#00ff96 57.7%,#00eeff 58.4%,#00e2ff 62.3%,#1ab0fc 63.0%,#2296f6 63.4%,#0e5df2 64.2%,#0e5bf1 66.8%,#0e5cf2 71.2%,#0c57f0 75.2%,#1368f5 78.8%,#0d5af1 83.0%,#2494f7 85.0%,#2eacf8 87.5%,#08d8fd 88.2%,#08d8fd 89.2%,#2eacf8 90.0%,#208af6 90.3%,#146af6 91.4%,#0e5df2 93.3%,#1368f5 97.6%,#0f60f3 100.0%)"></div><div style="height:1.0px;background:linear-gradient(90deg,#1062f4 0.0%,#1062f4 0.8%,#0f5ef2 2.0%,#1369f6 6.1%,#2ba5f8 7.6%,#2eacf8 9.0%,#07dcfd 9.7%,#07dcfd 11.6%,#2eacf8 12.3%,#2ba5f8 14.3%,#146af6 16.0%,#1063f4 19.9%,#1266f5 24.1%,#1163f4 28.4%,#0e5df2 32.7%,#0e5bf1 35.4%,#146bf6 36.3%,#2296f6 37.2%,#1ab0fc 37.7%,#00e2ff 38.4%,#00eeff 41.6%,#00ff96 42.3%,#4cff38 43.0%,#4cff38 44.4%,#faf00a 45.3%,#faf00a 46.3%,#fcc305 46.7%,#f93f07 47.2%,#f61a0a 47.7%,#de1010 50.2%,#f61a0a 52.6%,#f93f07 53.1%,#fcc305 53.6%,#faf00a 53.9%,#faf00a 54.9%,#4cff38 55.7%,#4cff38 57.1%,#00ff96 57.7%,#00eeff 58.4%,#00e2ff 61.4%,#1ab0fc 62.0%,#2296f6 62.5%,#146bf6 63.3%,#1164f5 66.4%,#1267f5 70.7%,#0d59f0 74.0%,#1062f4 78.2%,#0f5ff3 83.2%,#2494f7 85.2%,#2eacf8 87.7%,#08d8fd 88.4%,#08d8fd 89.3%,#2eacf8 90.0%,#208af6 90.0%,#1266f5 91.0%,#1266f5 95.4%,#0d59f0 99.1%,#1063f4 100.0%)"></div><div style="height:1.0px;background:linear-gradient(90deg,#1062f4 0.0%,#1062f4 0.8%,#0f5ef2 2.0%,#146bf6 4.9%,#146bf6 7.6%,#299ff7 8.7%,#2eacf8 9.1%,#08d8fd 9.8%,#08d8fd 11.5%,#2eacf8 12.1%,#299ff7 13.6%,#1165f5 15.1%,#146af6 18.1%,#1063f4 20.7%,#0f60f3 24.8%,#0d58f0 27.3%,#0e5df2 31.3%,#0e5bf1 34.4%,#0d5af1 37.5%,#2296f6 38.3%,#1ab0fc 38.8%,#00e2ff 39.4%,#00eeff 41.5%,#00ff96 42.2%,#4cff38 42.8%,#4cff38 44.5%,#faf00a 45.3%,#faf00a 47.0%,#fcc305 47.4%,#f93f07 47.8%,#f61a0a 48.2%,#de1010 50.2%,#f61a0a 52.2%,#f93f07 52.7%,#fcc305 53.1%,#faf00a 53.5%,#faf00a 55.3%,#4cff38 56.1%,#4cff38 57.8%,#00ff96 58.5%,#00eeff 59.2%,#00e2ff 61.3%,#1ab0fc 62.0%,#2296f6 62.5%,#1061f4 63.3%,#1266f5 64.5%,#1163f4 68.9%,#0d5af1 72.7%,#1266f5 76.7%,#146af6 80.0%,#1369f6 83.8%,#2390f6 85.6%,#2dabf8 87.5%,#0ad4fc 88.3%,#0ad4fc 89.3%,#2ca7f8 90.0%,#1f87f6 90.1%,#1061f4 91.1%,#0e5df2 94.5%,#0d59f0 97.1%,#146bf6 100.0%)"></div><div style="height:1.0px;background:linear-gradient(90deg,#1062f4 0.0%,#1062f4 0.8%,#0f60f3 2.0%,#156cf6 8.1%,#289df7 9.1%,#2eabf8 9.2%,#09d5fc 9.9%,#09d5fc 11.4%,#2eabf8 12.0%,#289df7 13.4%,#0f60f3 14.8%,#146bf6 16.9%,#1369f6 19.4%,#1164f4 23.1%,#156cf6 27.4%,#0e5cf1 30.5%,#0e5cf2 34.9%,#1062f4 37.8%,#2296f6 38.6%,#1ab0fc 39.0%,#00e2ff 39.7%,#00eeff 41.7%,#00ff96 42.4%,#4cff38 43.0%,#4cff38 44.8%,#faf00a 45.6%,#faf00a 47.1%,#fcc305 47.5%,#f93f07 47.9%,#f61a0a 48.2%,#de1010 49.9%,#f61a0a 51.8%,#f93f07 52.2%,#fcc305 52.6%,#faf00a 53.0%,#faf00a 54.6%,#4cff38 55.5%,#4cff38 57.5%,#00ff96 58.2%,#00eeff 59.0%,#00e2ff 61.2%,#1ab0fc 61.9%,#2296f6 62.4%,#0e5cf2 63.3%,#146bf6 64.5%,#0d5af0 67.7%,#146af6 70.3%,#0f60f3 73.3%,#0e5bf1 77.5%,#146bf6 84.8%,#228ef6 86.4%,#2ca8f8 87.9%,#0bd1fc 88.6%,#0bd1fc 89.3%,#1e85f6 89.9%,#2ba4f8 90.0%,#0f5ef2 90.8%,#1164f4 93.9%,#0e5cf2 98.2%,#0f60f3 100.0%)"></div><div style="height:1.0px;background:linear-gradient(90deg,#1062f4 0.0%,#1062f4 0.8%,#0e5bf1 2.0%,#1369f6 5.2%,#0e5bf1 8.2%,#2493f7 9.0%,#2aa2f7 9.0%,#0dcdfc 9.6%,#0dcdfc 10.9%,#2aa2f7 11.5%,#2493f7 12.9%,#136af6 14.2%,#1267f5 15.9%,#1163f4 18.4%,#0e5df2 22.8%,#1164f4 25.7%,#0d5af1 28.3%,#0e5cf1 32.2%,#0f60f3 35.5%,#0d59f0 39.3%,#2296f6 40.1%,#1ab0fc 40.6%,#00e2ff 41.2%,#00eeff 42.1%,#00ff96 42.7%,#4cff38 43.4%,#4cff38 45.6%,#faf00a 46.4%,#faf00a 48.2%,#fcc305 48.6%,#f93f07 49.0%,#f61a0a 49.2%,#de1010 50.2%,#f61a0a 51.2%,#f93f07 51.4%,#fcc305 51.9%,#faf00a 52.3%,#faf00a 54.2%,#4cff38 55.1%,#4cff38 57.5%,#00ff96 58.2%,#00eeff 58.9%,#00e2ff 59.8%,#1ab0fc 60.5%,#2296f6 61.0%,#0d58f0 61.9%,#1267f5 63.8%,#146bf6 67.2%,#0e5df2 70.8%,#0f5ef3 74.3%,#1063f4 78.5%,#156cf6 81.1%,#1267f5 86.1%,#1f87f6 87.2%,#299ef7 87.8%,#0ec9fb 88.4%,#0ec9fb 89.1%,#1c80f6 89.5%,#279bf7 89.8%,#1164f4 90.3%,#0d59f0 93.1%,#0d58f0 95.8%,#0f60f3 99.2%,#0f60f3 100.0%)"></div><div style="height:1.0px;background:linear-gradient(90deg,#1062f4 0.0%,#1062f4 0.8%,#1164f5 2.0%,#0f60f3 5.9%,#146af6 8.5%,#299ff7 9.0%,#2390f6 9.3%,#0ecafb 9.7%,#0ecafb 11.3%,#299ff7 11.9%,#2390f6 12.6%,#1368f5 13.8%,#1062f4 16.4%,#0f5ef2 20.7%,#0e5df2 24.1%,#1265f5 28.2%,#1165f5 31.4%,#1061f4 34.1%,#0f5ff3 37.9%,#1368f5 40.5%,#2296f6 41.3%,#1ab0fc 41.7%,#00e2ff 42.2%,#00eeff 42.3%,#00ff96 42.9%,#4cff38 43.6%,#4cff38 46.5%,#faf00a 47.3%,#faf00a 48.6%,#fcc305 49.0%,#f93f07 49.4%,#f61a0a 49.5%,#de1010 50.2%,#f61a0a 51.0%,#f93f07 51.1%,#fcc305 51.5%,#faf00a 51.9%,#faf00a 53.4%,#4cff38 54.2%,#4cff38 57.4%,#00ff96 58.1%,#00eeff 58.8%,#00e2ff 58.9%,#1ab0fc 59.4%,#2296f6 59.9%,#1163f4 60.7%,#0e5df2 62.3%,#146bf6 65.3%,#0d58f0 69.8%,#1062f4 72.5%,#1369f6 75.7%,#146bf6 79.3%,#0c57f0 86.6%,#1e84f6 87.6%,#279bf7 87.9%,#10c6fb 88.5%,#10c6fb 89.2%,#1b7ef5 89.6%,#2697f7 89.9%,#0f5ff3 90.4%,#1165f5 93.7%,#1368f5 97.0%,#1369f6 100.0%)"></div><div style="height:1.0px;background:linear-gradient(90deg,#1062f4 0.0%,#1062f4 0.8%,#1061f4 2.0%,#0d59f0 4.4%,#0d59f0 8.1%,#29a1f7 8.8%,#2392f7 9.0%,#0dccfc 9.5%,#0dccfc 11.1%,#29a1f7 11.7%,#2392f7 12.5%,#1266f5 13.7%,#0c57f0 14.9%,#0f5ef3 19.3%,#1368f5 23.0%,#1368f5 27.3%,#0e5bf1 30.6%,#1061f4 34.8%,#0d59f0 38.8%,#1164f5 40.1%,#2296f6 40.9%,#1ab0fc 41.3%,#00e2ff 42.0%,#00eeff 42.4%,#00ff96 43.0%,#4cff38 43.7%,#4cff38 46.1%,#faf00a 46.9%,#faf00a 48.4%,#fcc305 48.8%,#f93f07 49.2%,#f61a0a 49.4%,#de1010 50.3%,#f61a0a 51.2%,#f93f07 51.4%,#fcc305 51.8%,#faf00a 52.2%,#faf00a 54.0%,#4cff38 54.8%,#4cff38 57.4%,#00ff96 58.1%,#00eeff 58.9%,#00e2ff 59.3%,#1ab0fc 60.0%,#2296f6 60.5%,#0f60f3 61.4%,#0f5ff3 63.8%,#1164f5 66.9%,#0d59f0 71.3%,#0e5bf1 74.5%,#1369f6 77.4%,#1267f5 85.5%,#1f86f6 86.8%,#289df7 87.7%,#0fc8fb 88.4%,#0fc8fb 89.1%,#1c7ff6 89.4%,#2699f7 89.7%,#0c57f0 90.1%,#0e5cf2 93.0%,#0d5af1 96.2%,#146cf6 100.0%)"></div><div style="height:1.0px;background:linear-gradient(90deg,#1062f4 0.0%,#1062f4 0.8%,#146af6 2.0%,#1266f5 6.4%,#0f5ff3 8.8%,#2ba3f8 9.0%,#2595f7 9.5%,#0ccefc 9.6%,#0ccefc 10.9%,#2ba3f8 11.5%,#2595f7 12.4%,#1063f4 13.6%,#136af6 17.3%,#0e5cf1 21.1%,#146af6 24.1%,#0d5af1 26.7%,#1063f4 29.3%,#1266f5 32.8%,#0f60f3 37.2%,#1163f4 37.2%,#2296f6 38.1%,#1ab0fc 38.6%,#00e2ff 39.3%,#00eeff 42.0%,#00ff96 42.8%,#4cff38 43.5%,#4cff38 45.2%,#faf00a 46.1%,#faf00a 47.9%,#fcc305 48.3%,#f93f07 48.8%,#f61a0a 49.0%,#de1010 50.2%,#f61a0a 51.2%,#f93f07 51.4%,#fcc305 51.9%,#faf00a 52.2%,#faf00a 53.9%,#4cff38 54.6%,#4cff38 56.2%,#00ff96 56.8%,#00eeff 57.5%,#00e2ff 59.9%,#1ab0fc 60.6%,#2296f6 61.0%,#1163f4 61.8%,#146bf6 64.2%,#0f5ef2 68.3%,#146cf6 70.8%,#0d59f0 75.3%,#0f5ff3 78.8%,#0e5cf1 86.2%,#1f88f6 87.3%,#29a0f7 87.8%,#0ecafb 88.4%,#0ecafb 89.2%,#1c80f6 89.7%,#289cf7 89.8%,#1265f5 90.5%,#0f60f3 94.4%,#0d59f0 97.8%,#1061f4 100.0%)"></div><div style="height:1.0px;background:linear-gradient(90deg,#1062f4 0.0%,#1062f4 0.8%,#0f60f3 2.0%,#1267f5 5.3%,#1368f5 7.8%,#279af7 8.8%,#2da9f8 9.0%,#0ad4fc 9.7%,#0ad4fc 11.3%,#2da9f8 11.9%,#279af7 13.3%,#1368f5 14.7%,#1266f5 19.1%,#1266f5 23.1%,#1163f4 26.1%,#146af6 29.7%,#1164f5 32.2%,#1164f4 34.9%,#1267f5 36.6%,#2296f6 37.5%,#1ab0fc 37.9%,#00e2ff 38.6%,#00eeff 41.6%,#00ff96 42.3%,#4cff38 43.0%,#4cff38 44.4%,#faf00a 45.2%,#faf00a 47.3%,#fcc305 47.7%,#f93f07 48.2%,#f61a0a 48.5%,#de1010 50.2%,#f61a0a 51.7%,#f93f07 52.0%,#fcc305 52.5%,#faf00a 52.8%,#faf00a 54.8%,#4cff38 55.6%,#4cff38 56.9%,#00ff96 57.6%,#00eeff 58.3%,#00e2ff 61.0%,#1ab0fc 61.7%,#2296f6 62.1%,#0f60f3 62.9%,#0e5bf1 65.9%,#0d5af1 69.4%,#146bf6 73.1%,#0d59f0 77.6%,#1061f3 80.8%,#0d59f0 85.1%,#218cf6 86.5%,#2ba6f8 87.5%,#0ccffc 88.2%,#0ccffc 89.1%,#1e84f6 89.5%,#2aa2f7 89.8%,#146af6 90.4%,#0f60f3 94.4%,#1369f6 98.4%,#1267f5 100.0%)"></div><div style="height:1.0px;background:linear-gradient(90deg,#1062f4 0.0%,#1062f4 0.8%,#1368f5 2.0%,#146af6 7.2%,#289df7 8.4%,#2eacf8 8.9%,#09d6fd 9.5%,#09d6fd 11.2%,#2eacf8 11.8%,#289df7 13.8%,#0d58f0 15.4%,#1368f5 17.1%,#1163f4 20.9%,#136af6 25.1%,#1062f4 27.9%,#0f5ef2 31.6%,#0d5af1 36.1%,#146cf6 36.9%,#2296f6 37.7%,#1ab0fc 38.2%,#00e2ff 38.9%,#00eeff 41.8%,#00ff96 42.5%,#4cff38 43.1%,#4cff38 44.6%,#faf00a 45.4%,#faf00a 47.2%,#fcc305 47.5%,#f93f07 48.0%,#f61a0a 48.4%,#de1010 50.1%,#f61a0a 51.9%,#f93f07 52.3%,#fcc305 52.7%,#faf00a 53.1%,#faf00a 54.9%,#4cff38 55.7%,#4cff38 57.2%,#00ff96 57.9%,#00eeff 58.6%,#00e2ff 61.5%,#1ab0fc 62.2%,#2296f6 62.7%,#1063f4 63.5%,#1164f4 64.5%,#1061f4 68.8%,#1368f5 72.6%,#0f60f3 76.8%,#1061f3 79.6%,#146cf6 84.3%,#228ef6 85.9%,#2ca8f8 87.8%,#0bd1fc 88.4%,#0bd1fc 89.2%,#2ba4f8 89.8%,#1e85f6 90.0%,#0e5cf2 91.0%,#1164f4 93.7%,#146af6 97.9%,#1369f6 100.0%)"></div><div style="height:1.0px;background:linear-gradient(90deg,#1774f5 0.0%,#156ff5 0.8%,#0f5ef2 2.0%,#1266f5 6.4%,#2ca6f8 7.7%,#2eacf8 8.5%,#07dcfd 9.2%,#07dcfd 11.3%,#2eacf8 12.0%,#2ca6f8 14.0%,#1368f5 15.6%,#0d5af1 17.5%,#1267f5 21.9%,#0f5ff3 25.7%,#1164f5 28.2%,#1369f6 31.4%,#1063f4 34.4%,#1164f5 37.4%,#1367f5 37.8%,#2296f6 38.6%,#1ab0fc 39.1%,#00e2ff 39.8%,#00eeff 41.0%,#00ff96 41.7%,#4cff38 42.4%,#4cff38 44.4%,#faf00a 45.2%,#faf00a 46.1%,#fcc305 46.5%,#f93f07 47.0%,#f61a0a 47.6%,#de1010 50.1%,#f61a0a 52.6%,#f93f07 53.2%,#fcc305 53.6%,#faf00a 54.0%,#faf00a 54.9%,#4cff38 55.7%,#4cff38 57.6%,#00ff96 58.3%,#00eeff 59.0%,#00e2ff 60.2%,#1ab0fc 60.8%,#2296f6 61.3%,#146cf6 62.1%,#146cf6 65.1%,#0f5ef2 68.9%,#0d59f0 72.3%,#156cf6 76.3%,#0d5af1 80.0%,#1164f4 83.8%,#2595f7 85.6%,#2eacf8 87.5%,#08d8fd 88.2%,#08d8fd 89.3%,#2eacf8 90.0%,#218bf6 90.1%,#1062f4 91.2%,#146af6 93.1%,#0d58f0 96.5%,#156cf6 99.8%,#1164f5 100.0%)"></div><div style="height:1.0px;background:linear-gradient(90deg,#1267f4 0.0%,#1266f4 0.8%,#0e5df2 2.0%,#146bf6 6.1%,#2ca8f8 7.5%,#2eacf8 8.5%,#07dcfd 9.3%,#07dcfd 11.4%,#2eacf8 12.2%,#2ca8f8 15.0%,#1368f5 17.0%,#1063f4 19.0%,#0d5af1 21.4%,#0d59f0 24.2%,#0d5af1 27.3%,#1063f4 31.6%,#1369f6 35.5%,#1266f5 37.2%,#2296f6 38.0%,#1ab0fc 38.5%,#00e2ff 39.1%,#00eeff 41.6%,#00ff96 42.3%,#4cff38 43.0%,#4cff38 44.2%,#faf00a 45.0%,#faf00a 45.7%,#fcc305 46.1%,#f93f07 46.5%,#f61a0a 47.2%,#de1010 50.0%,#f61a0a 52.9%,#f93f07 53.5%,#fcc305 53.9%,#faf00a 54.3%,#faf00a 55.0%,#4cff38 55.9%,#4cff38 57.2%,#00ff96 57.9%,#00eeff 58.6%,#00e2ff 61.2%,#1ab0fc 61.9%,#2296f6 62.3%,#0f60f3 63.2%,#0f5ef2 65.4%,#1368f5 68.6%,#0d59f0 71.3%,#0e5bf1 74.0%,#146bf6 76.7%,#1163f4 79.2%,#0e5cf1 83.6%,#2597f7 85.5%,#2eacf8 87.5%,#08d8fd 88.2%,#08d8fd 89.2%,#2eacf8 89.8%,#218cf6 90.1%,#146bf6 91.2%,#0f60f3 94.4%,#1163f4 97.2%,#1063f4 100.0%)"></div><div style="height:1.0px;background:linear-gradient(90deg,#1062f4 0.0%,#1062f4 0.8%,#1062f4 2.0%,#1369f6 6.7%,#2ca8f8 8.0%,#2eacf8 8.6%,#07dcfd 9.4%,#07dcfd 11.8%,#2eacf8 12.6%,#2ca8f8 14.4%,#1369f6 16.1%,#0f5ff3 19.2%,#1165f5 22.3%,#0f60f3 26.2%,#1165f5 29.1%,#0e5cf1 31.8%,#1163f4 34.5%,#1369f6 35.9%,#2296f6 36.8%,#1ab0fc 37.3%,#00e2ff 38.0%,#00eeff 40.8%,#00ff96 41.5%,#4cff38 42.2%,#4cff38 43.6%,#faf00a 44.5%,#faf00a 45.6%,#fcc305 46.0%,#f93f07 46.5%,#f61a0a 47.1%,#de1010 49.9%,#f61a0a 52.5%,#f93f07 53.1%,#fcc305 53.5%,#faf00a 53.9%,#faf00a 55.0%,#4cff38 55.8%,#4cff38 57.1%,#00ff96 57.8%,#00eeff 58.4%,#00e2ff 61.1%,#1ab0fc 61.7%,#2296f6 62.2%,#0e5cf2 63.0%,#0e5cf1 66.0%,#0d59f0 68.8%,#0f5ef2 72.0%,#1061f4 76.2%,#1164f5 80.6%,#1267f5 82.9%,#2596f7 85.0%,#2eacf8 87.7%,#08d8fd 88.3%,#08d8fd 89.2%,#2eacf8 89.9%,#218cf6 90.4%,#1163f4 91.5%,#146bf6 94.6%,#1061f4 98.6%,#0d59f0 100.0%)"></div><div style="height:1.0px;background:linear-gradient(90deg,#1062f4 0.0%,#1062f4 0.8%,#0c57f0 2.0%,#146cf6 5.6%,#2ca8f8 7.3%,#2eacf8 8.8%,#07dcfd 9.6%,#07dcfd 11.9%,#2eacf8 12.7%,#2ca8f8 15.1%,#1265f5 16.9%,#0d59f0 21.2%,#146bf6 25.4%,#1369f6 29.7%,#0e5df2 32.6%,#0f60f3 36.8%,#146af6 37.6%,#2296f6 38.4%,#1ab0fc 38.8%,#00e2ff 39.5%,#00eeff 41.3%,#00ff96 41.9%,#4cff38 42.6%,#4cff38 44.5%,#faf00a 45.3%,#faf00a 45.5%,#fcc305 45.9%,#f93f07 46.3%,#f61a0a 47.0%,#de1010 50.2%,#f61a0a 53.6%,#f93f07 54.4%,#fcc305 54.9%,#faf00a 55.3%,#faf00a 55.5%,#4cff38 56.3%,#4cff38 58.5%,#00ff96 59.2%,#00eeff 60.0%,#00e2ff 61.9%,#1ab0fc 62.7%,#2296f6 63.1%,#1369f6 64.0%,#0f60f3 64.6%,#1061f3 67.1%,#0e5cf2 69.9%,#1267f5 73.6%,#146bf6 76.5%,#0e5bf1 80.0%,#1267f5 81.9%,#2597f7 84.2%,#2eacf8 87.3%,#08d8fd 88.0%,#08d8fd 89.1%,#2eacf8 89.9%,#218cf6 90.1%,#1164f5 91.3%,#0d58f0 94.2%,#1368f5 97.3%,#1062f4 100.0%)"></div><div style="height:1.0px;background:linear-gradient(90deg,#1876f5 0.0%,#1670f5 0.8%,#1163f4 2.0%,#1061f3 6.0%,#2ca8f8 7.5%,#2eacf8 8.9%,#07dcfd 9.6%,#07dcfd 11.8%,#2eacf8 12.5%,#2ca8f8 14.6%,#156cf6 16.3%,#0f5ef2 21.9%,#0d58f0 26.0%,#146af6 28.9%,#1267f5 32.6%,#0d5af0 35.3%,#2296f6 36.1%,#1ab0fc 36.6%,#00e2ff 37.3%,#00eeff 41.3%,#00ff96 42.0%,#4cff38 42.7%,#4cff38 44.0%,#faf00a 44.8%,#faf00a 45.9%,#fcc305 46.3%,#f93f07 46.7%,#f61a0a 47.4%,#de1010 50.1%,#f61a0a 52.8%,#f93f07 53.5%,#fcc305 53.9%,#faf00a 54.3%,#faf00a 55.3%,#4cff38 56.2%,#4cff38 57.4%,#00ff96 58.1%,#00eeff 58.8%,#00e2ff 62.7%,#1ab0fc 63.4%,#2296f6 63.8%,#1165f5 64.7%,#1061f4 67.1%,#1267f5 70.8%,#0f60f3 74.8%,#1061f4 77.2%,#1164f4 79.9%,#0e5cf1 83.6%,#2597f7 85.4%,#2eacf8 87.3%,#08d8fd 88.0%,#08d8fd 89.0%,#2eacf8 89.7%,#218cf6 90.1%,#1368f5 91.3%,#1369f6 92.4%,#1266f5 95.3%,#1267f5 98.1%,#146bf6 100.0%)"></div><div style="height:1.0px;background:linear-gradient(90deg,#279cf7 0.0%,#208af6 0.8%,#0f60f3 2.0%,#1062f4 6.2%,#2ba6f8 7.6%,#2eacf8 8.6%,#07dcfd 9.4%,#07dcfd 11.6%,#2eacf8 12.3%,#2ba6f8 13.7%,#1266f5 15.2%,#1368f5 17.7%,#1164f5 22.2%,#0e5cf1 24.9%,#1368f5 29.3%,#0d59f0 33.6%,#146bf6 36.0%,#2296f6 36.8%,#1ab0fc 37.3%,#00e2ff 38.0%,#00eeff 40.4%,#00ff96 41.1%,#4cff38 41.8%,#4cff38 43.8%,#faf00a 44.7%,#faf00a 45.9%,#fcc305 46.3%,#f93f07 46.8%,#f61a0a 47.3%,#de1010 49.9%,#f61a0a 52.4%,#f93f07 52.9%,#fcc305 53.3%,#faf00a 53.7%,#faf00a 54.9%,#4cff38 55.7%,#4cff38 57.7%,#00ff96 58.3%,#00eeff 59.0%,#00e2ff 61.3%,#1ab0fc 62.0%,#2296f6 62.4%,#0d59f0 63.3%,#0d59f0 66.3%,#0e5bf1 70.6%,#0e5cf1 73.1%,#0e5df2 76.4%,#1267f5 80.8%,#1165f5 83.2%,#2595f7 85.1%,#2eacf8 87.3%,#08d8fd 88.0%,#08d8fd 89.1%,#2eacf8 89.9%,#208bf6 90.1%,#0e5cf2 91.2%,#1266f5 95.8%,#1062f4 99.9%,#146bf6 100.0%)"></div><div style="height:1.0px;background:linear-gradient(90deg,#2ba5f8 0.0%,#2391f7 0.8%,#0d59f0 2.0%,#1061f4 5.8%,#2ca6f8 7.3%,#2eacf8 8.6%,#07dcfd 9.4%,#07dcfd 11.6%,#2eacf8 12.4%,#2ca6f8 14.2%,#1062f4 15.8%,#0d58f0 19.6%,#0f5ef2 23.7%,#0e5df2 26.5%,#0f5ff3 30.2%,#1163f4 33.3%,#1368f5 37.9%,#2296f6 38.7%,#1ab0fc 39.2%,#00e2ff 39.8%,#00eeff 41.2%,#00ff96 41.8%,#4cff38 42.5%,#4cff38 44.5%,#faf00a 45.3%,#faf00a 46.5%,#fcc305 46.9%,#f93f07 47.3%,#f61a0a 47.9%,#de1010 50.3%,#f61a0a 53.0%,#f93f07 53.6%,#fcc305 54.1%,#faf00a 54.5%,#faf00a 55.9%,#4cff38 56.7%,#4cff38 59.0%,#00ff96 59.7%,#00eeff 60.4%,#00e2ff 61.9%,#1ab0fc 62.6%,#2296f6 63.1%,#0f60f3 64.0%,#146af6 65.6%,#1061f3 69.5%,#1163f4 73.4%,#1062f4 77.0%,#1061f4 81.1%,#1369f6 83.4%,#2595f7 85.3%,#2eacf8 87.6%,#08d8fd 88.3%,#08d8fd 89.3%,#2eacf8 89.9%,#218bf6 90.2%,#1267f5 91.3%,#156cf6 92.2%,#0e5cf2 96.5%,#1369f6 100.0%)"></div><div style="height:1.0px;background:linear-gradient(90deg,#2ba5f8 0.0%,#2391f7 0.8%,#0f5ef2 2.0%,#1061f4 5.7%,#2ba4f8 7.3%,#2eacf8 8.9%,#07dcfd 9.7%,#07dcfd 11.9%,#2eacf8 12.6%,#2ba4f8 13.6%,#1267f5 15.0%,#1164f5 17.8%,#0f60f3 20.7%,#1368f5 24.9%,#1369f6 28.8%,#1061f4 33.2%,#1368f5 36.6%,#0e5df2 37.6%,#2296f6 38.4%,#1ab0fc 38.9%,#00e2ff 39.6%,#00eeff 40.6%,#00ff96 41.3%,#4cff38 42.0%,#4cff38 44.0%,#faf00a 44.9%,#faf00a 46.3%,#fcc305 46.7%,#f93f07 47.1%,#f61a0a 47.6%,#de1010 50.0%,#f61a0a 52.4%,#f93f07 52.9%,#fcc305 53.3%,#faf00a 53.7%,#faf00a 55.2%,#4cff38 56.0%,#4cff38 58.0%,#00ff96 58.7%,#00eeff 59.4%,#00e2ff 60.5%,#1ab0fc 61.2%,#2296f6 61.6%,#156cf6 62.5%,#146bf6 65.0%,#0d5af0 69.4%,#0f5ef2 72.8%,#146bf6 75.5%,#0e5cf1 79.2%,#1368f5 83.8%,#2493f7 85.5%,#2eacf8 87.4%,#09d8fd 88.1%,#09d8fd 89.1%,#2eabf8 89.9%,#2089f6 89.9%,#1267f5 91.0%,#0e5cf2 92.8%,#1367f5 97.2%,#0f5ef2 100.0%)"></div></div><div class="abs" style="left:847.5px;top:541.2px;width:1px;height:190.19999999999993px;background:rgba(90,170,255,.35)"></div><div class="abs" style="left:874.5px;top:541.2px;width:1px;height:190.19999999999993px;background:rgba(90,170,255,.18)"></div><div class="abs" style="left:962px;top:541.2px;width:1px;height:190.19999999999993px;background:rgba(90,190,255,.45)"></div><svg class="abs" style="left:711.0px;top:541.2px" width="658.6" height="190.2"><filter id="gr" x="0" y="0" width="100%" height="100%"><feTurbulence type="fractalNoise" baseFrequency="0.16 0.5" numOctaves="2" seed="4"/><feColorMatrix type="matrix" values="0 0 0 0 0.16  0 0 0 0 0.52  0 0 0 0 1  3.2 0 0 0 -1.72"/></filter><filter id="gd" x="0" y="0" width="100%" height="100%"><feTurbulence type="fractalNoise" baseFrequency="0.16 0.5" numOctaves="2" seed="9"/><feColorMatrix type="matrix" values="0 0 0 0 0.01  0 0 0 0 0.2  0 0 0 0 0.86  0 3.6 0 0 -1.75"/></filter><rect x="0" y="0" width="252" height="100%" filter="url(#gr)" opacity=".3"/><rect x="0" y="0" width="252" height="100%" filter="url(#gd)" opacity=".75"/><rect x="410" y="0" width="249" height="100%" filter="url(#gr)" opacity=".3"/><rect x="410" y="0" width="249" height="100%" filter="url(#gd)" opacity=".75"/><rect x="252" y="0" width="158" height="100%" filter="url(#gd)" opacity=".18"/></svg><svg class="abs" style="left:654px;top:500px" width="738" height="276" viewBox="654 500 738 276" font-family="Liberation Sans, sans-serif"><text x="662" y="524" font-size="14.6" fill="#e6e6e6" textLength="75.5" lengthAdjust="spacingAndGlyphs">Spectrogram</text><rect x="741.6" y="512.4" width="24.4" height="14" rx="2.6" fill="#0c0c0c"/><text x="743.4" y="523.2" font-size="10.6" font-weight="bold" fill="#ee2f4c" textLength="21" lengthAdjust="spacingAndGlyphs">+Pk</text><path d="M789.6 509.2v2.2M789.6 529.4v-2.2" stroke="#fff" stroke-width="1"/><path d="M869.9 509.2v2.2M869.9 529.4v-2.2" stroke="#fff" stroke-width="1"/><path d="M950.1 509.2v2.2M950.1 529.4v-2.2" stroke="#fff" stroke-width="1"/><path d="M1030.3 509.2v2.2M1030.3 529.4v-2.2" stroke="#fff" stroke-width="1"/><path d="M1110.6 509.2v2.2M1110.6 529.4v-2.2" stroke="#fff" stroke-width="1"/><path d="M1190.8 509.2v2.2M1190.8 529.4v-2.2" stroke="#fff" stroke-width="1"/><path d="M1271.1 509.2v2.2M1271.1 529.4v-2.2" stroke="#fff" stroke-width="1"/><text x="870" y="523.6" font-size="12.2" fill="rgba(240,255,250,.82)" text-anchor="middle" textLength="22" lengthAdjust="spacingAndGlyphs">-120</text><text x="1031" y="523.6" font-size="12.2" fill="rgba(240,255,250,.82)" text-anchor="middle" textLength="22" lengthAdjust="spacingAndGlyphs">-100</text><text x="1191" y="523.6" font-size="12.2" fill="rgba(240,255,250,.82)" text-anchor="middle" textLength="16" lengthAdjust="spacingAndGlyphs">-80</text><text x="1319.6" y="523.8" font-size="11.6" fill="#c8c8c8" textLength="24.6" lengthAdjust="spacingAndGlyphs">dBm</text><rect x="1351.5" y="510.2" width="34" height="18" fill="#6f6f6f" stroke="#a8a8a8" stroke-width="1"/><rect x="1362.6" y="514.2" width="10.6" height="9" rx="1.4" fill="none" stroke="#dcdcdc" stroke-width="1.4"/><rect x="709.5" y="539.6" width="661.2" height="192.8" fill="none" stroke="#fbfbfb" stroke-width="1.2"/><path d="M704.6 543.0H709.5" stroke="#fff" stroke-width="1"/><text x="702" y="547.8" font-size="14.7" fill="#f2f2f2" text-anchor="end" textLength="7" lengthAdjust="spacingAndGlyphs">0</text><path d="M704.6 583.9H709.5" stroke="#fff" stroke-width="1"/><text x="702" y="588.7" font-size="14.7" fill="#f2f2f2" text-anchor="end" textLength="22.6" lengthAdjust="spacingAndGlyphs">-0.5</text><path d="M704.6 624.8H709.5" stroke="#fff" stroke-width="1"/><text x="702" y="629.6" font-size="14.7" fill="#f2f2f2" text-anchor="end" textLength="11.6" lengthAdjust="spacingAndGlyphs">-1</text><path d="M704.6 665.7H709.5" stroke="#fff" stroke-width="1"/><text x="702" y="670.5" font-size="14.7" fill="#f2f2f2" text-anchor="end" textLength="22.6" lengthAdjust="spacingAndGlyphs">-1.5</text><path d="M704.6 706.6H709.5" stroke="#fff" stroke-width="1"/><text x="702" y="711.4" font-size="14.7" fill="#f2f2f2" text-anchor="end" textLength="11.6" lengthAdjust="spacingAndGlyphs">-2</text><path d="M782.6 732.4v4" stroke="#fff" stroke-width="1"/><text x="782.6" y="753.4" font-size="14.7" fill="#f2f2f2" text-anchor="middle" textLength="24.6" lengthAdjust="spacingAndGlyphs">98.8</text><path d="M954.2 732.4v4" stroke="#fff" stroke-width="1"/><text x="954.2" y="753.4" font-size="14.7" fill="#f2f2f2" text-anchor="middle" textLength="13.4" lengthAdjust="spacingAndGlyphs">99</text><path d="M1125.8 732.4v4" stroke="#fff" stroke-width="1"/><text x="1125.8" y="753.4" font-size="14.7" fill="#f2f2f2" text-anchor="middle" textLength="24.6" lengthAdjust="spacingAndGlyphs">99.2</text><path d="M1297.4 732.4v4" stroke="#fff" stroke-width="1"/><text x="1297.4" y="753.4" font-size="14.7" fill="#f2f2f2" text-anchor="middle" textLength="24.6" lengthAdjust="spacingAndGlyphs">99.4</text><text x="1040" y="765" font-size="14.7" fill="#f2f2f2" text-anchor="middle" textLength="99" lengthAdjust="spacingAndGlyphs">Frequency / MHz</text><text transform="translate(1376.4 637.2) rotate(90)" font-size="14.7" fill="#f2f2f2" text-anchor="middle" textLength="45" lengthAdjust="spacingAndGlyphs">Time / s</text><rect x="1002" y="502.4" width="41.6" height="8.2" fill="#fff"/><rect x="1002" y="505" width="41.6" height="3" fill="#000"/></svg>
<div class="abs" style="left:655px;top:774px;width:737px;height:2px;background:#bdbdbd"></div>
<div class="abs" style="left:655px;top:776px;width:737px;height:29px;background:#565656"></div>
<div class="abs" style="left:867px;top:776px;width:1px;height:29px;background:#8a8a8a"></div>
<div class="abs" style="left:1022px;top:776px;width:1px;height:29px;background:#8a8a8a"></div>
<div class="abs" style="left:1145px;top:776px;width:1px;height:29px;background:#8a8a8a"></div>
<div class="abs" style="left:1268px;top:776px;width:1px;height:29px;background:#8a8a8a"></div>
<div class="st" style="left:658px;top:778.8px"><b>RL<span style='color:#bbb;font-weight:normal'> |</span>Att.<span style='color:#bbb;font-weight:normal'> |</span>Of.</b></div>
<div class="sv" style="left:655px;width:209px;top:778.0px"><span style='letter-spacing:.35px'>-14 dBm<span style='letter-spacing:1.2px'>|</span>0 dB<span style='letter-spacing:1.2px'>|</span>Off</span></div>
<div class="st" style="left:658px;top:793.1px"><b>Input</b></div>
<div class="sv" style="left:655px;width:209px;top:792.3px">2</div>
<div class="st" style="left:871px;top:778.8px"><b>Fcent</b></div>
<div class="sv" style="left:868px;width:151px;top:778.0px">99.099 827 MHz</div>
<div class="st" style="left:871px;top:793.1px"><b>Fspan</b></div>
<div class="sv" style="left:868px;width:151px;top:792.3px">764.252 kHz</div>
<div class="st" style="left:1026px;top:778.8px"><b>RBW</b></div>
<div class="sv" style="left:1023px;width:119px;top:778.0px">2 kHz</div>
<div class="st" style="left:1149px;top:778.8px"><b>Meas. Time</b></div>
<div class="sv" style="left:1146px;width:119px;top:778.0px">10 ms</div>
<div class="st" style="left:1272px;top:778.8px"><b>Scan No.</b></div>
<div class="sv" style="left:1269px;width:120px;top:778.0px">318</div>
<div class="st" style="left:1272px;top:793.1px"><b>Scan Count</b></div>
<div class="sv" style="left:1269px;width:120px;top:792.3px">50</div>
<div class="abs" style="left:1395px;top:745.8px;width:105px;height:60px;background:linear-gradient(#5e5e5e 0,#474747 6%,#3c3c3c 14%,#3a3a3a 100%)"></div>
<div class="sb" style="top:209.0px;width:52.6px"><div class="l" style="top:0.8px;letter-spacing:-0.1px">Ref. Lev.</div><div class="v" style="top:17.8px">-14</div><div class="v" style="top:33px;left:1.5px">dBm</div><div class="tri" style="left:42.4px;top:36px;border-width:0 0 10px 10px;border-color:transparent transparent #fff transparent"></div></div>
<div class="sb" style="top:209.0px;left:1449px;width:51px"><div class="l" style="top:0.8px">Atten.</div><div class="v" style="top:17.8px">0</div><div class="v" style="top:33px">dB</div><div class="tri" style="left:41px;top:36px;border-width:0 0 10px 10px;border-color:transparent transparent #fff transparent"></div></div>
<div class="sb" style="top:257.8px"><div class="l" style="top:2.1px">Lmax</div><div class="v" style="top:17.1px">-64.5</div><div class="v" style="top:31.2px">dBm</div><div class="tri" style="left:95px;top:36px;border-width:0 0 10px 10px;border-color:transparent transparent #fff transparent"></div></div>
<div class="sb" style="top:306.6px"><div class="l" style="top:2.1px">Lrange</div><div class="v" style="top:17.1px">68</div><div class="v" style="top:31.2px">dB</div><div class="tri" style="left:95px;top:36px;border-width:0 0 10px 10px;border-color:transparent transparent #fff transparent"></div></div>
<div class="sb" style="top:355.4px"><div class="l" style="top:2.1px">Fcent</div><div class="v" style="top:17.1px">99.099 827</div><div class="v" style="top:31.2px">MHz</div><div class="tri" style="left:95px;top:36px;border-width:0 0 10px 10px;border-color:transparent transparent #fff transparent"></div></div>
<div class="sb" style="top:404.2px"><div class="l" style="top:2.1px">Fspan</div><div class="v" style="top:17.1px">764.252</div><div class="v" style="top:31.2px">kHz</div><div class="tri" style="left:95px;top:36px;border-width:0 0 10px 10px;border-color:transparent transparent #fff transparent"></div></div>
<div class="sb" style="top:453.0px"><div class="l" style="top:2.1px">RBW</div><div class="v" style="top:17.1px">2</div><div class="v" style="top:31.2px">kHz</div><div class="tri" style="left:95px;top:36px;border-width:0 0 10px 10px;border-color:transparent transparent #fff transparent"></div></div>
<div class="sb" style="top:501.8px"><div class="l" style="top:2.1px">Meas. Time</div><div class="v" style="top:17.1px">10</div><div class="v" style="top:31.2px">ms</div><div class="tri" style="left:95px;top:36px;border-width:0 0 10px 10px;border-color:transparent transparent #fff transparent"></div></div>
<div class="sb" style="top:550.6px"><div class="l" style="top:17.4px">Config</div><div class="tri" style="left:95px;top:36px;border-width:0 0 10px 10px;border-color:transparent transparent #fff transparent"></div></div>
<div class="sb" style="top:599.4px"><div class="l" style="top:17.4px">Traces</div><div class="tri" style="left:95px;top:36px;border-width:0 0 10px 10px;border-color:transparent transparent #fff transparent"></div></div>
<div class="sb" style="top:648.2px"><div class="l" style="top:17.4px">Display</div><div class="tri" style="left:95px;top:36px;border-width:0 0 10px 10px;border-color:transparent transparent #fff transparent"></div></div>
<div class="sb" style="top:697.0px"><div class="l" style="top:17.4px">Demod.</div><div class="tri" style="left:95px;top:36px;border-width:0 0 10px 10px;border-color:transparent transparent #fff transparent"></div></div>
</div></div>
<svg class="abs" style="left:1165px;top:165px" width="100" height="110" viewBox="1165 165 100 110"><circle cx="1190.3" cy="188.2" r="13.3" fill="rgba(255,255,255,0.95)" stroke="#1f93d2" stroke-width="2.8"/><path d="M1181.4 188.6Q1182.2 194.2 1186 196.6M1199.4 188.6Q1198.6 193.6 1196 196" fill="none" stroke="#1f93d2" stroke-width="1.1" opacity=".8"/><path d="M1186.0 189.2C1185.6 184.6 1196.0 183.2 1197.0 188.4L1204.6 212.0L1205.4 201.8C1205.4 196.8 1214.2 196.2 1215.8 200.8L1220.8 214.6L1218.8 204.6C1218.6 199.4 1228.4 198.6 1230.6 203.4L1234.6 213.0L1233.4 207.2C1233.6 201.8 1242.6 201.2 1245.0 206.2C1248.6 214.0 1252.4 226.0 1253.8 236.0C1255.6 248.0 1251.6 258.0 1241.6 262.4C1233.6 266.0 1224.6 266.2 1217.6 263.0C1207.6 258.6 1192.6 247.6 1182.6 239.6C1178.6 236.0 1180.6 231.6 1186.0 231.4C1192.0 231.4 1197.6 234.6 1202.2 237.6L1195.0 215.0Z" fill="#fff" stroke="#1f93d2" stroke-width="2.9" stroke-linejoin="round"/><path d="M1204.6 212.0L1208.6 224.6M1220.8 214.6L1223.4 222.0M1234.6 213.0L1236.6 219.0" fill="none" stroke="#1f93d2" stroke-width="2.9" stroke-linecap="round"/></svg>
</body></html>
